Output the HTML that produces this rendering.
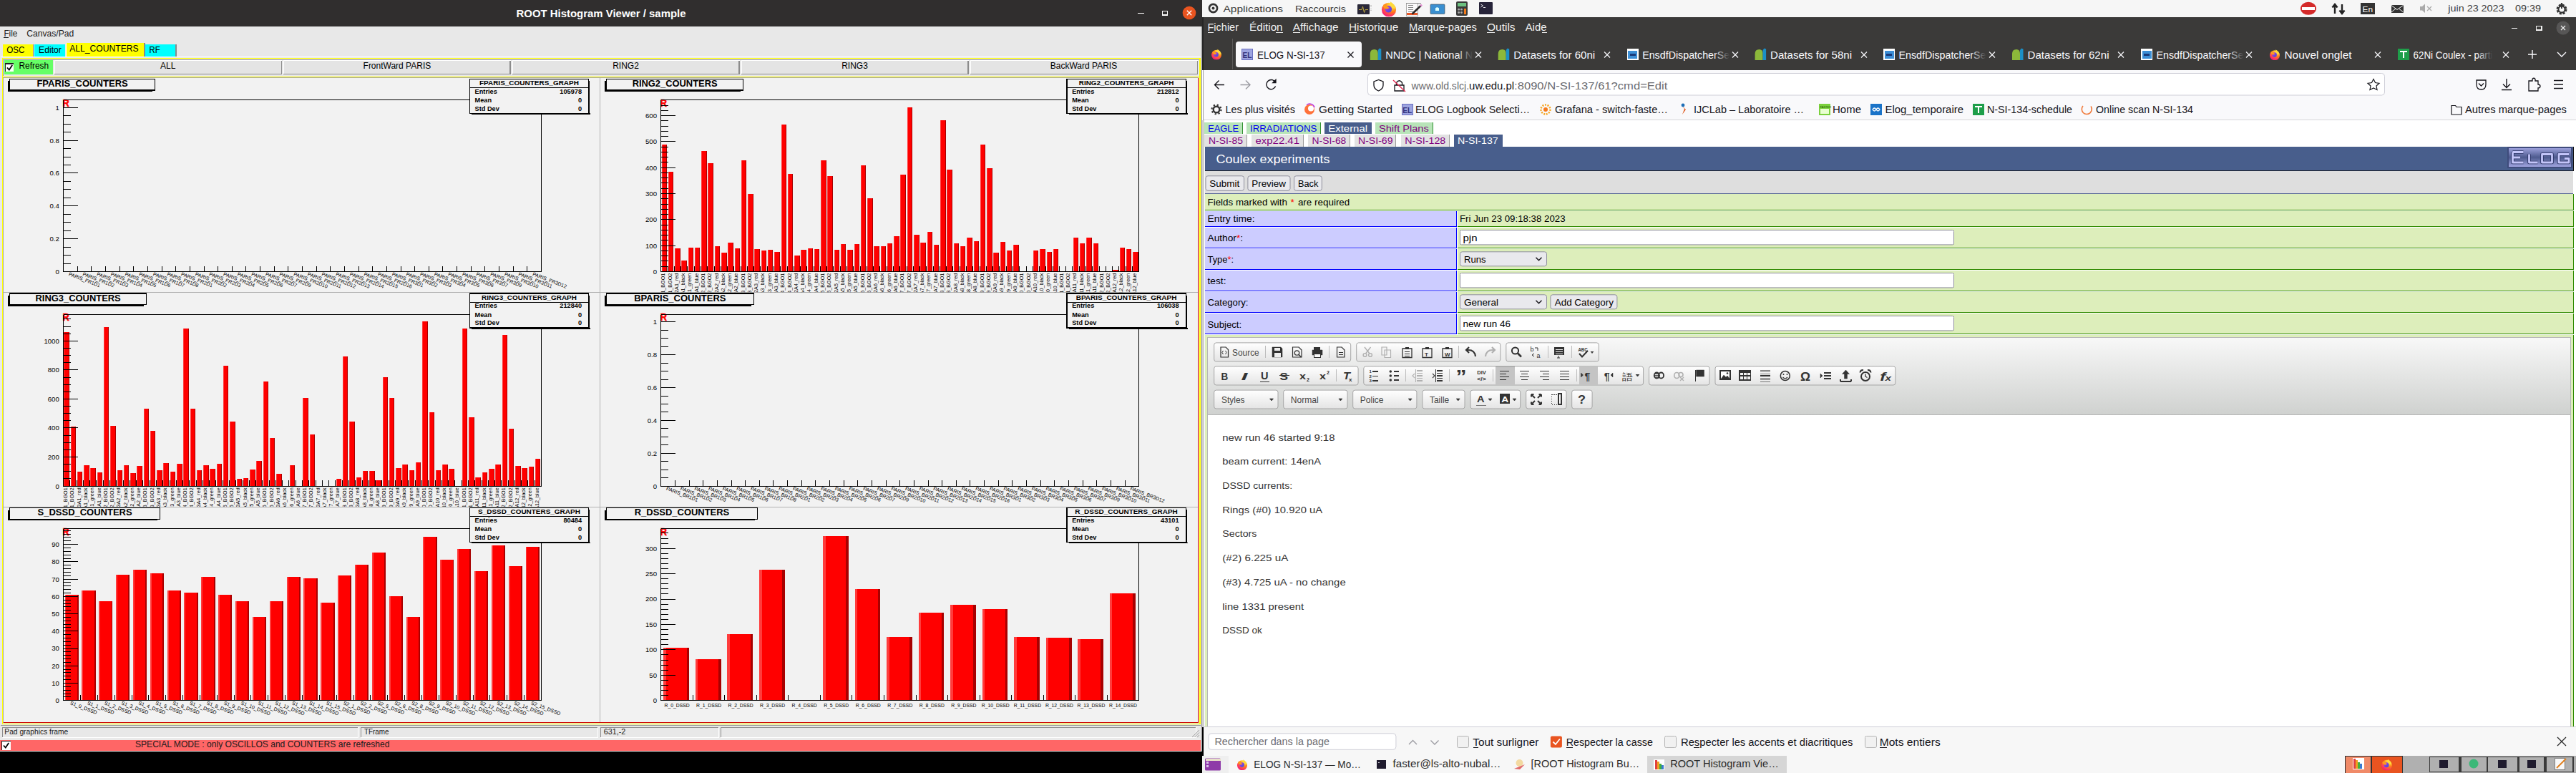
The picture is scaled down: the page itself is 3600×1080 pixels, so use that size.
<!DOCTYPE html>
<html><head><meta charset="utf-8"><title>screen</title>
<style>html,body{margin:0;padding:0;width:3600px;height:1080px;overflow:hidden;background:#000}
svg{display:block} text{font-family:"Liberation Sans", sans-serif;white-space:pre}</style></head>
<body><svg width="3600" height="1080" viewBox="0 0 3600 1080" shape-rendering="crispEdges">
<rect x="0.00" y="0.00" width="1680.00" height="37.00" fill="#302e2e" />
<text x="721.50" y="24.00" fill="#ffffff" font-size="15" font-weight="bold" textLength="237.0" lengthAdjust="spacingAndGlyphs" >ROOT Histogram Viewer / sample</text>
<line x1="1590.00" y1="18.50" x2="1598.50" y2="18.50" stroke="#fff" stroke-width="1.6" />
<rect x="1624.50" y="15.50" width="7.00" height="5.50" fill="none" stroke="#fff" stroke-width="1.4"/>
<circle cx="1662" cy="18" r="9.3" fill="#e95420" shape-rendering="geometricPrecision"/>
<path d="M1658.8 14.8 L1665.2 21.2 M1665.2 14.8 L1658.8 21.2" stroke="#fff" stroke-width="1.3" shape-rendering="geometricPrecision"/>
<rect x="0.00" y="37.00" width="1680.00" height="1013.00" fill="#e8e8e8" />
<rect x="1678.00" y="37.00" width="1.00" height="1013.00" fill="#d8d8d8" />
<rect x="1679.00" y="37.00" width="1.00" height="1013.00" fill="#9a9a9a" />
<text x="5.40" y="51.00" fill="#1a1a1a" font-size="12.5" textLength="19.0" lengthAdjust="spacingAndGlyphs" >File</text>
<line x1="5.40" y1="52.80" x2="12.00" y2="52.80" stroke="#1a1a1a" stroke-width="1" />
<text x="37.30" y="51.00" fill="#1a1a1a" font-size="12.5" textLength="66.0" lengthAdjust="spacingAndGlyphs" >Canvas/Pad</text>
<rect x="3.70" y="62.00" width="43.00" height="17.00" fill="#ffff00" />
<line x1="46.70" y1="62.00" x2="46.70" y2="79.00" stroke="#8a8a8a" stroke-width="1.2" />
<text x="9.20" y="74.00" fill="#000" font-size="12.5" textLength="25.3" lengthAdjust="spacingAndGlyphs" >OSC</text>
<rect x="48.00" y="62.00" width="43.00" height="17.00" fill="#00ffff" />
<text x="54.10" y="74.00" fill="#000" font-size="12.5" textLength="31.7" lengthAdjust="spacingAndGlyphs" >Editor</text>
<rect x="92.00" y="60.00" width="110.00" height="19.00" fill="#ffff00" />
<line x1="92.30" y1="60.00" x2="92.30" y2="79.00" stroke="#ffffff" stroke-width="1" />
<line x1="202.00" y1="60.00" x2="202.00" y2="79.00" stroke="#8a8a8a" stroke-width="1.2" />
<text x="97.20" y="71.70" fill="#000" font-size="12.5" textLength="96.5" lengthAdjust="spacingAndGlyphs" >ALL_COUNTERS</text>
<rect x="203.00" y="62.00" width="43.00" height="17.00" fill="#00ffff" />
<line x1="246.00" y1="62.00" x2="246.00" y2="79.00" stroke="#8a8a8a" stroke-width="1.2" />
<text x="208.50" y="74.00" fill="#000" font-size="12.5" textLength="15.1" lengthAdjust="spacingAndGlyphs" >RF</text>
<line x1="1.00" y1="79.60" x2="1678.00" y2="79.60" stroke="#ffffff" stroke-width="1" />
<rect x="3.50" y="81.50" width="1673.50" height="930.00" fill="none" stroke="#ffff00" stroke-width="1.2"/>
<line x1="4.20" y1="83.00" x2="1676.00" y2="83.00" stroke="#9a9a9a" stroke-width="1" />
<line x1="4.20" y1="83.00" x2="4.20" y2="106.00" stroke="#9a9a9a" stroke-width="1" />
<rect x="5.80" y="83.90" width="68.20" height="20.10" fill="#66ff66" />
<rect x="7.10" y="88.40" width="12.30" height="12.00" fill="#ffffff" />
<path d="M7.6 100 V88.9 H19" fill="none" stroke="#222" stroke-width="1.2"/>
<path d="M10 94.5 L12.8 97.6 L17.2 91" fill="none" stroke="#000" stroke-width="1.8" shape-rendering="geometricPrecision"/>
<text x="26.50" y="95.90" fill="#000" font-size="12" textLength="41.7" lengthAdjust="spacingAndGlyphs" >Refresh</text>
<rect x="75.70" y="84.50" width="318.10" height="19.50" fill="#e4e4e4" />
<line x1="75.70" y1="84.50" x2="393.80" y2="84.50" stroke="#ffffff" stroke-width="1" />
<line x1="76.20" y1="84.50" x2="76.20" y2="104.00" stroke="#ffffff" stroke-width="1" />
<line x1="75.70" y1="103.50" x2="393.80" y2="103.50" stroke="#8c8c8c" stroke-width="1.2" />
<line x1="393.30" y1="84.50" x2="393.30" y2="104.00" stroke="#8c8c8c" stroke-width="1.2" />
<rect x="395.90" y="84.50" width="317.60" height="19.50" fill="#e4e4e4" />
<line x1="395.90" y1="84.50" x2="713.50" y2="84.50" stroke="#ffffff" stroke-width="1" />
<line x1="396.40" y1="84.50" x2="396.40" y2="104.00" stroke="#ffffff" stroke-width="1" />
<line x1="395.90" y1="103.50" x2="713.50" y2="103.50" stroke="#8c8c8c" stroke-width="1.2" />
<line x1="713.00" y1="84.50" x2="713.00" y2="104.00" stroke="#8c8c8c" stroke-width="1.2" />
<rect x="715.60" y="84.50" width="317.90" height="19.50" fill="#e4e4e4" />
<line x1="715.60" y1="84.50" x2="1033.50" y2="84.50" stroke="#ffffff" stroke-width="1" />
<line x1="716.10" y1="84.50" x2="716.10" y2="104.00" stroke="#ffffff" stroke-width="1" />
<line x1="715.60" y1="103.50" x2="1033.50" y2="103.50" stroke="#8c8c8c" stroke-width="1.2" />
<line x1="1033.00" y1="84.50" x2="1033.00" y2="104.00" stroke="#8c8c8c" stroke-width="1.2" />
<rect x="1035.60" y="84.50" width="317.90" height="19.50" fill="#e4e4e4" />
<line x1="1035.60" y1="84.50" x2="1353.50" y2="84.50" stroke="#ffffff" stroke-width="1" />
<line x1="1036.10" y1="84.50" x2="1036.10" y2="104.00" stroke="#ffffff" stroke-width="1" />
<line x1="1035.60" y1="103.50" x2="1353.50" y2="103.50" stroke="#8c8c8c" stroke-width="1.2" />
<line x1="1353.00" y1="84.50" x2="1353.00" y2="104.00" stroke="#8c8c8c" stroke-width="1.2" />
<rect x="1356.00" y="84.50" width="318.00" height="19.50" fill="#e4e4e4" />
<line x1="1356.00" y1="84.50" x2="1674.00" y2="84.50" stroke="#ffffff" stroke-width="1" />
<line x1="1356.50" y1="84.50" x2="1356.50" y2="104.00" stroke="#ffffff" stroke-width="1" />
<line x1="1356.00" y1="103.50" x2="1674.00" y2="103.50" stroke="#8c8c8c" stroke-width="1.2" />
<line x1="1673.50" y1="84.50" x2="1673.50" y2="104.00" stroke="#8c8c8c" stroke-width="1.2" />
<text x="234.80" y="95.80" fill="#000" font-size="12" text-anchor="middle" >ALL</text>
<text x="554.90" y="95.80" fill="#000" font-size="12" text-anchor="middle" >FrontWard PARIS</text>
<text x="874.50" y="95.80" fill="#000" font-size="12" text-anchor="middle" >RING2</text>
<text x="1194.50" y="95.80" fill="#000" font-size="12" text-anchor="middle" >RING3</text>
<text x="1514.50" y="95.80" fill="#000" font-size="12" text-anchor="middle" >BackWard PARIS</text>
<line x1="3.00" y1="107.50" x2="1677.00" y2="107.50" stroke="#ffff00" stroke-width="1.3" />
<rect x="4.50" y="108.30" width="1671.00" height="901.50" fill="#f2f2f2" />
<line x1="4.50" y1="108.60" x2="1675.00" y2="108.60" stroke="#a8a8a8" stroke-width="1" />
<line x1="4.60" y1="108.30" x2="4.60" y2="1010.00" stroke="#a8a8a8" stroke-width="1" />
<line x1="838.80" y1="108.50" x2="838.80" y2="1009.00" stroke="#b0b0b0" stroke-width="1" />
<line x1="4.50" y1="408.50" x2="1675.00" y2="408.50" stroke="#b0b0b0" stroke-width="1" />
<line x1="4.50" y1="708.20" x2="1675.00" y2="708.20" stroke="#b0b0b0" stroke-width="1" />
<clipPath id="pc0"><rect x="4.5" y="108.5" width="834.0" height="299.8"/></clipPath>
<g clip-path="url(#pc0)">
<text x="87.60" y="148.60" fill="#ff0000" font-size="14.3" font-weight="bold" textLength="9.2" lengthAdjust="spacingAndGlyphs" stroke="#ff0000" stroke-width="0.5">R</text>
<line x1="88.50" y1="139.50" x2="756.50" y2="139.50" stroke="#000" stroke-width="1" />
<line x1="756.50" y1="139.50" x2="756.50" y2="379.50" stroke="#000" stroke-width="1" />
<line x1="88.50" y1="139.50" x2="88.50" y2="380.00" stroke="#000" stroke-width="1.15" />
<line x1="88.00" y1="379.50" x2="757.00" y2="379.50" stroke="#000" stroke-width="1.15" />
<line x1="88.60" y1="379.50" x2="108.90" y2="379.50" stroke="#000" stroke-width="1" />
<text x="82.80" y="382.90" fill="#000" font-size="9.6" text-anchor="end" >0</text>
<line x1="88.60" y1="368.50" x2="98.90" y2="368.50" stroke="#000" stroke-width="1" />
<line x1="88.60" y1="356.50" x2="98.90" y2="356.50" stroke="#000" stroke-width="1" />
<line x1="88.60" y1="345.50" x2="98.90" y2="345.50" stroke="#000" stroke-width="1" />
<line x1="88.60" y1="333.50" x2="108.90" y2="333.50" stroke="#000" stroke-width="1" />
<text x="82.80" y="337.06" fill="#000" font-size="9.6" text-anchor="end" >0.2</text>
<line x1="88.60" y1="322.50" x2="98.90" y2="322.50" stroke="#000" stroke-width="1" />
<line x1="88.60" y1="310.50" x2="98.90" y2="310.50" stroke="#000" stroke-width="1" />
<line x1="88.60" y1="299.50" x2="98.90" y2="299.50" stroke="#000" stroke-width="1" />
<line x1="88.60" y1="287.50" x2="108.90" y2="287.50" stroke="#000" stroke-width="1" />
<text x="82.80" y="291.22" fill="#000" font-size="9.6" text-anchor="end" >0.4</text>
<line x1="88.60" y1="276.50" x2="98.90" y2="276.50" stroke="#000" stroke-width="1" />
<line x1="88.60" y1="264.50" x2="98.90" y2="264.50" stroke="#000" stroke-width="1" />
<line x1="88.60" y1="253.50" x2="98.90" y2="253.50" stroke="#000" stroke-width="1" />
<line x1="88.60" y1="241.50" x2="108.90" y2="241.50" stroke="#000" stroke-width="1" />
<text x="82.80" y="245.39" fill="#000" font-size="9.6" text-anchor="end" >0.6</text>
<line x1="88.60" y1="230.50" x2="98.90" y2="230.50" stroke="#000" stroke-width="1" />
<line x1="88.60" y1="219.50" x2="98.90" y2="219.50" stroke="#000" stroke-width="1" />
<line x1="88.60" y1="207.50" x2="98.90" y2="207.50" stroke="#000" stroke-width="1" />
<line x1="88.60" y1="196.50" x2="108.90" y2="196.50" stroke="#000" stroke-width="1" />
<text x="82.80" y="199.55" fill="#000" font-size="9.6" text-anchor="end" >0.8</text>
<line x1="88.60" y1="184.50" x2="98.90" y2="184.50" stroke="#000" stroke-width="1" />
<line x1="88.60" y1="173.50" x2="98.90" y2="173.50" stroke="#000" stroke-width="1" />
<line x1="88.60" y1="161.50" x2="98.90" y2="161.50" stroke="#000" stroke-width="1" />
<line x1="88.60" y1="150.50" x2="108.90" y2="150.50" stroke="#000" stroke-width="1" />
<text x="82.80" y="153.71" fill="#000" font-size="9.6" text-anchor="end" >1</text>
<line x1="108.50" y1="371.50" x2="108.50" y2="379.50" stroke="#000" stroke-width="1" />
<line x1="127.50" y1="371.50" x2="127.50" y2="379.50" stroke="#000" stroke-width="1" />
<line x1="147.50" y1="371.50" x2="147.50" y2="379.50" stroke="#000" stroke-width="1" />
<line x1="167.50" y1="371.50" x2="167.50" y2="379.50" stroke="#000" stroke-width="1" />
<line x1="186.50" y1="371.50" x2="186.50" y2="379.50" stroke="#000" stroke-width="1" />
<line x1="206.50" y1="371.50" x2="206.50" y2="379.50" stroke="#000" stroke-width="1" />
<line x1="226.50" y1="371.50" x2="226.50" y2="379.50" stroke="#000" stroke-width="1" />
<line x1="245.50" y1="371.50" x2="245.50" y2="379.50" stroke="#000" stroke-width="1" />
<line x1="265.50" y1="371.50" x2="265.50" y2="379.50" stroke="#000" stroke-width="1" />
<line x1="285.50" y1="371.50" x2="285.50" y2="379.50" stroke="#000" stroke-width="1" />
<line x1="304.50" y1="371.50" x2="304.50" y2="379.50" stroke="#000" stroke-width="1" />
<line x1="324.50" y1="371.50" x2="324.50" y2="379.50" stroke="#000" stroke-width="1" />
<line x1="343.50" y1="371.50" x2="343.50" y2="379.50" stroke="#000" stroke-width="1" />
<line x1="363.50" y1="371.50" x2="363.50" y2="379.50" stroke="#000" stroke-width="1" />
<line x1="383.50" y1="371.50" x2="383.50" y2="379.50" stroke="#000" stroke-width="1" />
<line x1="402.50" y1="371.50" x2="402.50" y2="379.50" stroke="#000" stroke-width="1" />
<line x1="422.50" y1="371.50" x2="422.50" y2="379.50" stroke="#000" stroke-width="1" />
<line x1="442.50" y1="371.50" x2="442.50" y2="379.50" stroke="#000" stroke-width="1" />
<line x1="461.50" y1="371.50" x2="461.50" y2="379.50" stroke="#000" stroke-width="1" />
<line x1="481.50" y1="371.50" x2="481.50" y2="379.50" stroke="#000" stroke-width="1" />
<line x1="501.50" y1="371.50" x2="501.50" y2="379.50" stroke="#000" stroke-width="1" />
<line x1="520.50" y1="371.50" x2="520.50" y2="379.50" stroke="#000" stroke-width="1" />
<line x1="540.50" y1="371.50" x2="540.50" y2="379.50" stroke="#000" stroke-width="1" />
<line x1="560.50" y1="371.50" x2="560.50" y2="379.50" stroke="#000" stroke-width="1" />
<line x1="579.50" y1="371.50" x2="579.50" y2="379.50" stroke="#000" stroke-width="1" />
<line x1="599.50" y1="371.50" x2="599.50" y2="379.50" stroke="#000" stroke-width="1" />
<line x1="618.50" y1="371.50" x2="618.50" y2="379.50" stroke="#000" stroke-width="1" />
<line x1="638.50" y1="371.50" x2="638.50" y2="379.50" stroke="#000" stroke-width="1" />
<line x1="658.50" y1="371.50" x2="658.50" y2="379.50" stroke="#000" stroke-width="1" />
<line x1="677.50" y1="371.50" x2="677.50" y2="379.50" stroke="#000" stroke-width="1" />
<line x1="697.50" y1="371.50" x2="697.50" y2="379.50" stroke="#000" stroke-width="1" />
<line x1="717.50" y1="371.50" x2="717.50" y2="379.50" stroke="#000" stroke-width="1" />
<line x1="736.50" y1="371.50" x2="736.50" y2="379.50" stroke="#000" stroke-width="1" />
<text transform="translate(95.42,384.70) rotate(21)" font-size="7.0" fill="#000">PARIS_FR1D1</text>
<text transform="translate(115.07,384.70) rotate(21)" font-size="7.0" fill="#000">PARIS_FR1D2</text>
<text transform="translate(134.71,384.70) rotate(21)" font-size="7.0" fill="#000">PARIS_FR1D3</text>
<text transform="translate(154.35,384.70) rotate(21)" font-size="7.0" fill="#000">PARIS_FR1D4</text>
<text transform="translate(174.00,384.70) rotate(21)" font-size="7.0" fill="#000">PARIS_FR1D5</text>
<text transform="translate(193.64,384.70) rotate(21)" font-size="7.0" fill="#000">PARIS_FR1D6</text>
<text transform="translate(213.29,384.70) rotate(21)" font-size="7.0" fill="#000">PARIS_FR1D7</text>
<text transform="translate(232.93,384.70) rotate(21)" font-size="7.0" fill="#000">PARIS_FR1D8</text>
<text transform="translate(252.57,384.70) rotate(21)" font-size="7.0" fill="#000">PARIS_FR2D1</text>
<text transform="translate(272.22,384.70) rotate(21)" font-size="7.0" fill="#000">PARIS_FR2D2</text>
<text transform="translate(291.86,384.70) rotate(21)" font-size="7.0" fill="#000">PARIS_FR2D3</text>
<text transform="translate(311.51,384.70) rotate(21)" font-size="7.0" fill="#000">PARIS_FR2D4</text>
<text transform="translate(331.15,384.70) rotate(21)" font-size="7.0" fill="#000">PARIS_FR2D5</text>
<text transform="translate(350.80,384.70) rotate(21)" font-size="7.0" fill="#000">PARIS_FR2D6</text>
<text transform="translate(370.44,384.70) rotate(21)" font-size="7.0" fill="#000">PARIS_FR2D7</text>
<text transform="translate(390.08,384.70) rotate(21)" font-size="7.0" fill="#000">PARIS_FR2D9</text>
<text transform="translate(409.73,384.70) rotate(21)" font-size="7.0" fill="#000">PARIS_FR2D10</text>
<text transform="translate(429.37,384.70) rotate(21)" font-size="7.0" fill="#000">PARIS_FR2D11</text>
<text transform="translate(449.02,384.70) rotate(21)" font-size="7.0" fill="#000">PARIS_FR2D12</text>
<text transform="translate(468.66,384.70) rotate(21)" font-size="7.0" fill="#000">PARIS_FR2D13</text>
<text transform="translate(488.30,384.70) rotate(21)" font-size="7.0" fill="#000">PARIS_FR2D14</text>
<text transform="translate(507.95,384.70) rotate(21)" font-size="7.0" fill="#000">PARIS_FR2D15</text>
<text transform="translate(527.59,384.70) rotate(21)" font-size="7.0" fill="#000">PARIS_FR2D16</text>
<text transform="translate(547.24,384.70) rotate(21)" font-size="7.0" fill="#000">PARIS_FR3D1</text>
<text transform="translate(566.88,384.70) rotate(21)" font-size="7.0" fill="#000">PARIS_FR3D2</text>
<text transform="translate(586.52,384.70) rotate(21)" font-size="7.0" fill="#000">PARIS_FR3D3</text>
<text transform="translate(606.17,384.70) rotate(21)" font-size="7.0" fill="#000">PARIS_FR3D4</text>
<text transform="translate(625.81,384.70) rotate(21)" font-size="7.0" fill="#000">PARIS_FR3D5</text>
<text transform="translate(645.46,384.70) rotate(21)" font-size="7.0" fill="#000">PARIS_FR3D6</text>
<text transform="translate(665.10,384.70) rotate(21)" font-size="7.0" fill="#000">PARIS_FR3D7</text>
<text transform="translate(684.75,384.70) rotate(21)" font-size="7.0" fill="#000">PARIS_FR3D9</text>
<text transform="translate(704.39,384.70) rotate(21)" font-size="7.0" fill="#000">PARIS_FR3D10</text>
<text transform="translate(724.03,384.70) rotate(21)" font-size="7.0" fill="#000">PARIS_FR3D11</text>
<text transform="translate(743.68,384.70) rotate(21)" font-size="7.0" fill="#000">PARIS_FR3D12</text>
</g>
<rect x="11.00" y="113.40" width="2.60" height="14.50" fill="#000" />
<rect x="11.00" y="126.00" width="202.00" height="1.90" fill="#000" />
<rect x="13.60" y="110.40" width="203.00" height="15.60" fill="#f2f2f2" stroke="#000" stroke-width="1.1"/>
<text x="51.40" y="121.20" fill="#000" font-size="12.5" font-weight="bold" textLength="127.4" lengthAdjust="spacingAndGlyphs" >FPARIS_COUNTERS</text>
<rect x="822.50" y="113.00" width="1.60" height="47.00" fill="#000" />
<rect x="659.00" y="158.40" width="166.10" height="1.60" fill="#000" />
<rect x="656.40" y="110.40" width="166.10" height="48.00" fill="#f2f2f2" stroke="#000" stroke-width="1.1"/>
<line x1="656.40" y1="122.50" x2="822.50" y2="122.50" stroke="#000" stroke-width="1.1" />
<text x="669.95" y="119.00" fill="#000" font-size="9.2" font-weight="bold" textLength="139.0" lengthAdjust="spacingAndGlyphs" >FPARIS_COUNTERS_GRAPH</text>
<text x="663.60" y="130.60" fill="#000" font-size="9.2" font-weight="bold" >Entries</text>
<text x="813.00" y="130.60" fill="#000" font-size="9.2" font-weight="bold" text-anchor="end" >105978</text>
<text x="663.60" y="142.90" fill="#000" font-size="9.2" font-weight="bold" >Mean</text>
<text x="813.00" y="142.90" fill="#000" font-size="9.2" font-weight="bold" text-anchor="end" >0</text>
<text x="663.60" y="154.70" fill="#000" font-size="9.2" font-weight="bold" >Std Dev</text>
<text x="813.00" y="154.70" fill="#000" font-size="9.2" font-weight="bold" text-anchor="end" >0</text>
<clipPath id="pc1"><rect x="839.5" y="108.5" width="834.0" height="299.8"/></clipPath>
<g clip-path="url(#pc1)">
<rect x="924.54" y="201.51" width="7.47" height="177.99" fill="#ff0000" />
<rect x="924.54" y="201.51" width="1.00" height="177.99" fill="#ff3c3c" />
<rect x="931.01" y="201.51" width="1.00" height="177.99" fill="#a80000" />
<rect x="933.82" y="239.65" width="7.47" height="139.85" fill="#ff0000" />
<rect x="933.82" y="239.65" width="1.00" height="139.85" fill="#ff3c3c" />
<rect x="940.29" y="239.65" width="1.00" height="139.85" fill="#a80000" />
<rect x="943.09" y="346.81" width="7.47" height="32.69" fill="#ff0000" />
<rect x="943.09" y="346.81" width="1.00" height="32.69" fill="#ff3c3c" />
<rect x="949.56" y="346.81" width="1.00" height="32.69" fill="#a80000" />
<rect x="952.37" y="363.88" width="7.47" height="15.62" fill="#ff0000" />
<rect x="952.37" y="363.88" width="1.00" height="15.62" fill="#ff3c3c" />
<rect x="958.84" y="363.88" width="1.00" height="15.62" fill="#a80000" />
<rect x="961.65" y="345.72" width="7.47" height="33.78" fill="#ff0000" />
<rect x="961.65" y="345.72" width="1.00" height="33.78" fill="#ff3c3c" />
<rect x="968.12" y="345.72" width="1.00" height="33.78" fill="#a80000" />
<rect x="970.92" y="345.72" width="7.47" height="33.78" fill="#ff0000" />
<rect x="970.92" y="345.72" width="1.00" height="33.78" fill="#ff3c3c" />
<rect x="977.39" y="345.72" width="1.00" height="33.78" fill="#a80000" />
<rect x="980.20" y="210.59" width="7.47" height="168.91" fill="#ff0000" />
<rect x="980.20" y="210.59" width="1.00" height="168.91" fill="#ff3c3c" />
<rect x="986.67" y="210.59" width="1.00" height="168.91" fill="#a80000" />
<rect x="989.48" y="228.03" width="7.47" height="151.47" fill="#ff0000" />
<rect x="989.48" y="228.03" width="1.00" height="151.47" fill="#ff3c3c" />
<rect x="995.94" y="228.03" width="1.00" height="151.47" fill="#a80000" />
<rect x="998.75" y="343.90" width="7.47" height="35.60" fill="#ff0000" />
<rect x="998.75" y="343.90" width="1.00" height="35.60" fill="#ff3c3c" />
<rect x="1005.22" y="343.90" width="1.00" height="35.60" fill="#a80000" />
<rect x="1008.03" y="352.98" width="7.47" height="26.52" fill="#ff0000" />
<rect x="1008.03" y="352.98" width="1.00" height="26.52" fill="#ff3c3c" />
<rect x="1014.50" y="352.98" width="1.00" height="26.52" fill="#a80000" />
<rect x="1017.31" y="338.82" width="7.47" height="40.68" fill="#ff0000" />
<rect x="1017.31" y="338.82" width="1.00" height="40.68" fill="#ff3c3c" />
<rect x="1023.77" y="338.82" width="1.00" height="40.68" fill="#a80000" />
<rect x="1026.58" y="346.81" width="7.47" height="32.69" fill="#ff0000" />
<rect x="1026.58" y="346.81" width="1.00" height="32.69" fill="#ff3c3c" />
<rect x="1033.05" y="346.81" width="1.00" height="32.69" fill="#a80000" />
<rect x="1035.86" y="224.03" width="7.47" height="155.47" fill="#ff0000" />
<rect x="1035.86" y="224.03" width="1.00" height="155.47" fill="#ff3c3c" />
<rect x="1042.33" y="224.03" width="1.00" height="155.47" fill="#a80000" />
<rect x="1045.14" y="270.53" width="7.47" height="108.97" fill="#ff0000" />
<rect x="1045.14" y="270.53" width="1.00" height="108.97" fill="#ff3c3c" />
<rect x="1051.60" y="270.53" width="1.00" height="108.97" fill="#a80000" />
<rect x="1054.41" y="347.54" width="7.47" height="31.96" fill="#ff0000" />
<rect x="1054.41" y="347.54" width="1.00" height="31.96" fill="#ff3c3c" />
<rect x="1060.88" y="347.54" width="1.00" height="31.96" fill="#a80000" />
<rect x="1063.69" y="350.44" width="7.47" height="29.06" fill="#ff0000" />
<rect x="1063.69" y="350.44" width="1.00" height="29.06" fill="#ff3c3c" />
<rect x="1070.16" y="350.44" width="1.00" height="29.06" fill="#a80000" />
<rect x="1072.96" y="348.62" width="7.47" height="30.88" fill="#ff0000" />
<rect x="1072.96" y="348.62" width="1.00" height="30.88" fill="#ff3c3c" />
<rect x="1079.43" y="348.62" width="1.00" height="30.88" fill="#a80000" />
<rect x="1082.24" y="351.53" width="7.47" height="27.97" fill="#ff0000" />
<rect x="1082.24" y="351.53" width="1.00" height="27.97" fill="#ff3c3c" />
<rect x="1088.71" y="351.53" width="1.00" height="27.97" fill="#a80000" />
<rect x="1091.52" y="173.54" width="7.47" height="205.96" fill="#ff0000" />
<rect x="1091.52" y="173.54" width="1.00" height="205.96" fill="#ff3c3c" />
<rect x="1097.98" y="173.54" width="1.00" height="205.96" fill="#a80000" />
<rect x="1100.79" y="243.29" width="7.47" height="136.21" fill="#ff0000" />
<rect x="1100.79" y="243.29" width="1.00" height="136.21" fill="#ff3c3c" />
<rect x="1107.26" y="243.29" width="1.00" height="136.21" fill="#a80000" />
<rect x="1110.07" y="356.98" width="7.47" height="22.52" fill="#ff0000" />
<rect x="1110.07" y="356.98" width="1.00" height="22.52" fill="#ff3c3c" />
<rect x="1116.54" y="356.98" width="1.00" height="22.52" fill="#a80000" />
<rect x="1119.35" y="348.62" width="7.47" height="30.88" fill="#ff0000" />
<rect x="1119.35" y="348.62" width="1.00" height="30.88" fill="#ff3c3c" />
<rect x="1125.81" y="348.62" width="1.00" height="30.88" fill="#a80000" />
<rect x="1128.62" y="346.81" width="7.47" height="32.69" fill="#ff0000" />
<rect x="1128.62" y="346.81" width="1.00" height="32.69" fill="#ff3c3c" />
<rect x="1135.09" y="346.81" width="1.00" height="32.69" fill="#a80000" />
<rect x="1137.90" y="347.54" width="7.47" height="31.96" fill="#ff0000" />
<rect x="1137.90" y="347.54" width="1.00" height="31.96" fill="#ff3c3c" />
<rect x="1144.37" y="347.54" width="1.00" height="31.96" fill="#a80000" />
<rect x="1147.18" y="224.03" width="7.47" height="155.47" fill="#ff0000" />
<rect x="1147.18" y="224.03" width="1.00" height="155.47" fill="#ff3c3c" />
<rect x="1153.64" y="224.03" width="1.00" height="155.47" fill="#a80000" />
<rect x="1156.45" y="246.19" width="7.47" height="133.31" fill="#ff0000" />
<rect x="1156.45" y="246.19" width="1.00" height="133.31" fill="#ff3c3c" />
<rect x="1162.92" y="246.19" width="1.00" height="133.31" fill="#a80000" />
<rect x="1165.73" y="348.62" width="7.47" height="30.88" fill="#ff0000" />
<rect x="1165.73" y="348.62" width="1.00" height="30.88" fill="#ff3c3c" />
<rect x="1172.20" y="348.62" width="1.00" height="30.88" fill="#a80000" />
<rect x="1175.00" y="340.63" width="7.47" height="38.87" fill="#ff0000" />
<rect x="1175.00" y="340.63" width="1.00" height="38.87" fill="#ff3c3c" />
<rect x="1181.47" y="340.63" width="1.00" height="38.87" fill="#a80000" />
<rect x="1184.28" y="349.35" width="7.47" height="30.15" fill="#ff0000" />
<rect x="1184.28" y="349.35" width="1.00" height="30.15" fill="#ff3c3c" />
<rect x="1190.75" y="349.35" width="1.00" height="30.15" fill="#a80000" />
<rect x="1193.56" y="341.36" width="7.47" height="38.14" fill="#ff0000" />
<rect x="1193.56" y="341.36" width="1.00" height="38.14" fill="#ff3c3c" />
<rect x="1200.02" y="341.36" width="1.00" height="38.14" fill="#a80000" />
<rect x="1202.83" y="231.30" width="7.47" height="148.20" fill="#ff0000" />
<rect x="1202.83" y="231.30" width="1.00" height="148.20" fill="#ff3c3c" />
<rect x="1209.30" y="231.30" width="1.00" height="148.20" fill="#a80000" />
<rect x="1212.11" y="277.07" width="7.47" height="102.43" fill="#ff0000" />
<rect x="1212.11" y="277.07" width="1.00" height="102.43" fill="#ff3c3c" />
<rect x="1218.58" y="277.07" width="1.00" height="102.43" fill="#a80000" />
<rect x="1221.39" y="343.90" width="7.47" height="35.60" fill="#ff0000" />
<rect x="1221.39" y="343.90" width="1.00" height="35.60" fill="#ff3c3c" />
<rect x="1227.85" y="343.90" width="1.00" height="35.60" fill="#a80000" />
<rect x="1230.66" y="344.27" width="7.47" height="35.23" fill="#ff0000" />
<rect x="1230.66" y="344.27" width="1.00" height="35.23" fill="#ff3c3c" />
<rect x="1237.13" y="344.27" width="1.00" height="35.23" fill="#a80000" />
<rect x="1239.94" y="339.54" width="7.47" height="39.96" fill="#ff0000" />
<rect x="1239.94" y="339.54" width="1.00" height="39.96" fill="#ff3c3c" />
<rect x="1246.41" y="339.54" width="1.00" height="39.96" fill="#a80000" />
<rect x="1249.22" y="330.46" width="7.47" height="49.04" fill="#ff0000" />
<rect x="1249.22" y="330.46" width="1.00" height="49.04" fill="#ff3c3c" />
<rect x="1255.68" y="330.46" width="1.00" height="49.04" fill="#a80000" />
<rect x="1258.49" y="244.01" width="7.47" height="135.49" fill="#ff0000" />
<rect x="1258.49" y="244.01" width="1.00" height="135.49" fill="#ff3c3c" />
<rect x="1264.96" y="244.01" width="1.00" height="135.49" fill="#a80000" />
<rect x="1267.77" y="149.57" width="7.47" height="229.93" fill="#ff0000" />
<rect x="1267.77" y="149.57" width="1.00" height="229.93" fill="#ff3c3c" />
<rect x="1274.24" y="149.57" width="1.00" height="229.93" fill="#a80000" />
<rect x="1277.04" y="327.56" width="7.47" height="51.94" fill="#ff0000" />
<rect x="1277.04" y="327.56" width="1.00" height="51.94" fill="#ff3c3c" />
<rect x="1283.51" y="327.56" width="1.00" height="51.94" fill="#a80000" />
<rect x="1286.32" y="338.82" width="7.47" height="40.68" fill="#ff0000" />
<rect x="1286.32" y="338.82" width="1.00" height="40.68" fill="#ff3c3c" />
<rect x="1292.79" y="338.82" width="1.00" height="40.68" fill="#a80000" />
<rect x="1295.60" y="324.29" width="7.47" height="55.21" fill="#ff0000" />
<rect x="1295.60" y="324.29" width="1.00" height="55.21" fill="#ff3c3c" />
<rect x="1302.07" y="324.29" width="1.00" height="55.21" fill="#a80000" />
<rect x="1304.87" y="342.45" width="7.47" height="37.05" fill="#ff0000" />
<rect x="1304.87" y="342.45" width="1.00" height="37.05" fill="#ff3c3c" />
<rect x="1311.34" y="342.45" width="1.00" height="37.05" fill="#a80000" />
<rect x="1314.15" y="167.73" width="7.47" height="211.77" fill="#ff0000" />
<rect x="1314.15" y="167.73" width="1.00" height="211.77" fill="#ff3c3c" />
<rect x="1320.62" y="167.73" width="1.00" height="211.77" fill="#a80000" />
<rect x="1323.43" y="237.11" width="7.47" height="142.39" fill="#ff0000" />
<rect x="1323.43" y="237.11" width="1.00" height="142.39" fill="#ff3c3c" />
<rect x="1329.89" y="237.11" width="1.00" height="142.39" fill="#a80000" />
<rect x="1332.70" y="339.54" width="7.47" height="39.96" fill="#ff0000" />
<rect x="1332.70" y="339.54" width="1.00" height="39.96" fill="#ff3c3c" />
<rect x="1339.17" y="339.54" width="1.00" height="39.96" fill="#a80000" />
<rect x="1341.98" y="343.90" width="7.47" height="35.60" fill="#ff0000" />
<rect x="1341.98" y="343.90" width="1.00" height="35.60" fill="#ff3c3c" />
<rect x="1348.45" y="343.90" width="1.00" height="35.60" fill="#a80000" />
<rect x="1351.26" y="332.28" width="7.47" height="47.22" fill="#ff0000" />
<rect x="1351.26" y="332.28" width="1.00" height="47.22" fill="#ff3c3c" />
<rect x="1357.72" y="332.28" width="1.00" height="47.22" fill="#a80000" />
<rect x="1360.53" y="336.64" width="7.47" height="42.86" fill="#ff0000" />
<rect x="1360.53" y="336.64" width="1.00" height="42.86" fill="#ff3c3c" />
<rect x="1367.00" y="336.64" width="1.00" height="42.86" fill="#a80000" />
<rect x="1369.81" y="201.51" width="7.47" height="177.99" fill="#ff0000" />
<rect x="1369.81" y="201.51" width="1.00" height="177.99" fill="#ff3c3c" />
<rect x="1376.28" y="201.51" width="1.00" height="177.99" fill="#a80000" />
<rect x="1379.09" y="234.93" width="7.47" height="144.57" fill="#ff0000" />
<rect x="1379.09" y="234.93" width="1.00" height="144.57" fill="#ff3c3c" />
<rect x="1385.55" y="234.93" width="1.00" height="144.57" fill="#a80000" />
<rect x="1388.36" y="353.35" width="7.47" height="26.15" fill="#ff0000" />
<rect x="1388.36" y="353.35" width="1.00" height="26.15" fill="#ff3c3c" />
<rect x="1394.83" y="353.35" width="1.00" height="26.15" fill="#a80000" />
<rect x="1397.64" y="337.73" width="7.47" height="41.77" fill="#ff0000" />
<rect x="1397.64" y="337.73" width="1.00" height="41.77" fill="#ff3c3c" />
<rect x="1404.11" y="337.73" width="1.00" height="41.77" fill="#a80000" />
<rect x="1406.91" y="350.44" width="7.47" height="29.06" fill="#ff0000" />
<rect x="1406.91" y="350.44" width="1.00" height="29.06" fill="#ff3c3c" />
<rect x="1413.38" y="350.44" width="1.00" height="29.06" fill="#a80000" />
<rect x="1416.19" y="342.45" width="7.47" height="37.05" fill="#ff0000" />
<rect x="1416.19" y="342.45" width="1.00" height="37.05" fill="#ff3c3c" />
<rect x="1422.66" y="342.45" width="1.00" height="37.05" fill="#a80000" />
<rect x="1444.02" y="349.71" width="7.47" height="29.79" fill="#ff0000" />
<rect x="1444.02" y="349.71" width="1.00" height="29.79" fill="#ff3c3c" />
<rect x="1450.49" y="349.71" width="1.00" height="29.79" fill="#a80000" />
<rect x="1453.30" y="347.54" width="7.47" height="31.96" fill="#ff0000" />
<rect x="1453.30" y="347.54" width="1.00" height="31.96" fill="#ff3c3c" />
<rect x="1459.76" y="347.54" width="1.00" height="31.96" fill="#a80000" />
<rect x="1462.57" y="351.53" width="7.47" height="27.97" fill="#ff0000" />
<rect x="1462.57" y="351.53" width="1.00" height="27.97" fill="#ff3c3c" />
<rect x="1469.04" y="351.53" width="1.00" height="27.97" fill="#a80000" />
<rect x="1471.85" y="347.54" width="7.47" height="31.96" fill="#ff0000" />
<rect x="1471.85" y="347.54" width="1.00" height="31.96" fill="#ff3c3c" />
<rect x="1478.32" y="347.54" width="1.00" height="31.96" fill="#a80000" />
<rect x="1499.68" y="331.55" width="7.47" height="47.95" fill="#ff0000" />
<rect x="1499.68" y="331.55" width="1.00" height="47.95" fill="#ff3c3c" />
<rect x="1506.15" y="331.55" width="1.00" height="47.95" fill="#a80000" />
<rect x="1508.95" y="339.54" width="7.47" height="39.96" fill="#ff0000" />
<rect x="1508.95" y="339.54" width="1.00" height="39.96" fill="#ff3c3c" />
<rect x="1515.42" y="339.54" width="1.00" height="39.96" fill="#a80000" />
<rect x="1518.23" y="331.55" width="7.47" height="47.95" fill="#ff0000" />
<rect x="1518.23" y="331.55" width="1.00" height="47.95" fill="#ff3c3c" />
<rect x="1524.70" y="331.55" width="1.00" height="47.95" fill="#a80000" />
<rect x="1527.51" y="339.54" width="7.47" height="39.96" fill="#ff0000" />
<rect x="1527.51" y="339.54" width="1.00" height="39.96" fill="#ff3c3c" />
<rect x="1533.97" y="339.54" width="1.00" height="39.96" fill="#a80000" />
<rect x="1555.34" y="376.96" width="7.47" height="2.54" fill="#ff0000" />
<rect x="1555.34" y="376.96" width="1.00" height="2.54" fill="#ff3c3c" />
<rect x="1561.80" y="376.96" width="1.00" height="2.54" fill="#a80000" />
<rect x="1564.61" y="345.72" width="7.47" height="33.78" fill="#ff0000" />
<rect x="1564.61" y="345.72" width="1.00" height="33.78" fill="#ff3c3c" />
<rect x="1571.08" y="345.72" width="1.00" height="33.78" fill="#a80000" />
<rect x="1573.89" y="347.54" width="7.47" height="31.96" fill="#ff0000" />
<rect x="1573.89" y="347.54" width="1.00" height="31.96" fill="#ff3c3c" />
<rect x="1580.36" y="347.54" width="1.00" height="31.96" fill="#a80000" />
<rect x="1583.17" y="351.53" width="7.47" height="27.97" fill="#ff0000" />
<rect x="1583.17" y="351.53" width="1.00" height="27.97" fill="#ff3c3c" />
<rect x="1589.63" y="351.53" width="1.00" height="27.97" fill="#a80000" />
<text x="922.80" y="148.60" fill="#ff0000" font-size="14.3" font-weight="bold" textLength="9.2" lengthAdjust="spacingAndGlyphs" stroke="#ff0000" stroke-width="0.5">R</text>
<line x1="923.50" y1="139.50" x2="1591.50" y2="139.50" stroke="#000" stroke-width="1" />
<line x1="1591.50" y1="139.50" x2="1591.50" y2="379.50" stroke="#000" stroke-width="1" />
<line x1="923.50" y1="139.50" x2="923.50" y2="380.00" stroke="#000" stroke-width="1.15" />
<line x1="923.00" y1="379.50" x2="1592.00" y2="379.50" stroke="#000" stroke-width="1.15" />
<line x1="923.80" y1="379.50" x2="944.10" y2="379.50" stroke="#000" stroke-width="1" />
<text x="918.00" y="382.90" fill="#000" font-size="9.6" text-anchor="end" >0</text>
<line x1="923.80" y1="372.50" x2="934.10" y2="372.50" stroke="#000" stroke-width="1" />
<line x1="923.80" y1="364.50" x2="934.10" y2="364.50" stroke="#000" stroke-width="1" />
<line x1="923.80" y1="357.50" x2="934.10" y2="357.50" stroke="#000" stroke-width="1" />
<line x1="923.80" y1="350.50" x2="934.10" y2="350.50" stroke="#000" stroke-width="1" />
<line x1="923.80" y1="343.50" x2="944.10" y2="343.50" stroke="#000" stroke-width="1" />
<text x="918.00" y="346.58" fill="#000" font-size="9.6" text-anchor="end" >100</text>
<line x1="923.80" y1="335.50" x2="934.10" y2="335.50" stroke="#000" stroke-width="1" />
<line x1="923.80" y1="328.50" x2="934.10" y2="328.50" stroke="#000" stroke-width="1" />
<line x1="923.80" y1="321.50" x2="934.10" y2="321.50" stroke="#000" stroke-width="1" />
<line x1="923.80" y1="314.50" x2="934.10" y2="314.50" stroke="#000" stroke-width="1" />
<line x1="923.80" y1="306.50" x2="944.10" y2="306.50" stroke="#000" stroke-width="1" />
<text x="918.00" y="310.25" fill="#000" font-size="9.6" text-anchor="end" >200</text>
<line x1="923.80" y1="299.50" x2="934.10" y2="299.50" stroke="#000" stroke-width="1" />
<line x1="923.80" y1="292.50" x2="934.10" y2="292.50" stroke="#000" stroke-width="1" />
<line x1="923.80" y1="285.50" x2="934.10" y2="285.50" stroke="#000" stroke-width="1" />
<line x1="923.80" y1="277.50" x2="934.10" y2="277.50" stroke="#000" stroke-width="1" />
<line x1="923.80" y1="270.50" x2="944.10" y2="270.50" stroke="#000" stroke-width="1" />
<text x="918.00" y="273.93" fill="#000" font-size="9.6" text-anchor="end" >300</text>
<line x1="923.80" y1="263.50" x2="934.10" y2="263.50" stroke="#000" stroke-width="1" />
<line x1="923.80" y1="255.50" x2="934.10" y2="255.50" stroke="#000" stroke-width="1" />
<line x1="923.80" y1="248.50" x2="934.10" y2="248.50" stroke="#000" stroke-width="1" />
<line x1="923.80" y1="241.50" x2="934.10" y2="241.50" stroke="#000" stroke-width="1" />
<line x1="923.80" y1="234.50" x2="944.10" y2="234.50" stroke="#000" stroke-width="1" />
<text x="918.00" y="237.60" fill="#000" font-size="9.6" text-anchor="end" >400</text>
<line x1="923.80" y1="226.50" x2="934.10" y2="226.50" stroke="#000" stroke-width="1" />
<line x1="923.80" y1="219.50" x2="934.10" y2="219.50" stroke="#000" stroke-width="1" />
<line x1="923.80" y1="212.50" x2="934.10" y2="212.50" stroke="#000" stroke-width="1" />
<line x1="923.80" y1="205.50" x2="934.10" y2="205.50" stroke="#000" stroke-width="1" />
<line x1="923.80" y1="197.50" x2="944.10" y2="197.50" stroke="#000" stroke-width="1" />
<text x="918.00" y="201.28" fill="#000" font-size="9.6" text-anchor="end" >500</text>
<line x1="923.80" y1="190.50" x2="934.10" y2="190.50" stroke="#000" stroke-width="1" />
<line x1="923.80" y1="183.50" x2="934.10" y2="183.50" stroke="#000" stroke-width="1" />
<line x1="923.80" y1="176.50" x2="934.10" y2="176.50" stroke="#000" stroke-width="1" />
<line x1="923.80" y1="168.50" x2="934.10" y2="168.50" stroke="#000" stroke-width="1" />
<line x1="923.80" y1="161.50" x2="944.10" y2="161.50" stroke="#000" stroke-width="1" />
<text x="918.00" y="164.96" fill="#000" font-size="9.6" text-anchor="end" >600</text>
<line x1="923.80" y1="154.50" x2="934.10" y2="154.50" stroke="#000" stroke-width="1" />
<line x1="923.80" y1="147.50" x2="934.10" y2="147.50" stroke="#000" stroke-width="1" />
<line x1="923.80" y1="139.50" x2="934.10" y2="139.50" stroke="#000" stroke-width="1" />
<line x1="933.50" y1="371.50" x2="933.50" y2="379.50" stroke="#000" stroke-width="1" />
<line x1="942.50" y1="371.50" x2="942.50" y2="379.50" stroke="#000" stroke-width="1" />
<line x1="951.50" y1="371.50" x2="951.50" y2="379.50" stroke="#000" stroke-width="1" />
<line x1="960.50" y1="371.50" x2="960.50" y2="379.50" stroke="#000" stroke-width="1" />
<line x1="970.50" y1="371.50" x2="970.50" y2="379.50" stroke="#000" stroke-width="1" />
<line x1="979.50" y1="371.50" x2="979.50" y2="379.50" stroke="#000" stroke-width="1" />
<line x1="988.50" y1="371.50" x2="988.50" y2="379.50" stroke="#000" stroke-width="1" />
<line x1="998.50" y1="371.50" x2="998.50" y2="379.50" stroke="#000" stroke-width="1" />
<line x1="1007.50" y1="371.50" x2="1007.50" y2="379.50" stroke="#000" stroke-width="1" />
<line x1="1016.50" y1="371.50" x2="1016.50" y2="379.50" stroke="#000" stroke-width="1" />
<line x1="1025.50" y1="371.50" x2="1025.50" y2="379.50" stroke="#000" stroke-width="1" />
<line x1="1035.50" y1="371.50" x2="1035.50" y2="379.50" stroke="#000" stroke-width="1" />
<line x1="1044.50" y1="371.50" x2="1044.50" y2="379.50" stroke="#000" stroke-width="1" />
<line x1="1053.50" y1="371.50" x2="1053.50" y2="379.50" stroke="#000" stroke-width="1" />
<line x1="1062.50" y1="371.50" x2="1062.50" y2="379.50" stroke="#000" stroke-width="1" />
<line x1="1072.50" y1="371.50" x2="1072.50" y2="379.50" stroke="#000" stroke-width="1" />
<line x1="1081.50" y1="371.50" x2="1081.50" y2="379.50" stroke="#000" stroke-width="1" />
<line x1="1090.50" y1="371.50" x2="1090.50" y2="379.50" stroke="#000" stroke-width="1" />
<line x1="1100.50" y1="371.50" x2="1100.50" y2="379.50" stroke="#000" stroke-width="1" />
<line x1="1109.50" y1="371.50" x2="1109.50" y2="379.50" stroke="#000" stroke-width="1" />
<line x1="1118.50" y1="371.50" x2="1118.50" y2="379.50" stroke="#000" stroke-width="1" />
<line x1="1127.50" y1="371.50" x2="1127.50" y2="379.50" stroke="#000" stroke-width="1" />
<line x1="1137.50" y1="371.50" x2="1137.50" y2="379.50" stroke="#000" stroke-width="1" />
<line x1="1146.50" y1="371.50" x2="1146.50" y2="379.50" stroke="#000" stroke-width="1" />
<line x1="1155.50" y1="371.50" x2="1155.50" y2="379.50" stroke="#000" stroke-width="1" />
<line x1="1164.50" y1="371.50" x2="1164.50" y2="379.50" stroke="#000" stroke-width="1" />
<line x1="1174.50" y1="371.50" x2="1174.50" y2="379.50" stroke="#000" stroke-width="1" />
<line x1="1183.50" y1="371.50" x2="1183.50" y2="379.50" stroke="#000" stroke-width="1" />
<line x1="1192.50" y1="371.50" x2="1192.50" y2="379.50" stroke="#000" stroke-width="1" />
<line x1="1202.50" y1="371.50" x2="1202.50" y2="379.50" stroke="#000" stroke-width="1" />
<line x1="1211.50" y1="371.50" x2="1211.50" y2="379.50" stroke="#000" stroke-width="1" />
<line x1="1220.50" y1="371.50" x2="1220.50" y2="379.50" stroke="#000" stroke-width="1" />
<line x1="1229.50" y1="371.50" x2="1229.50" y2="379.50" stroke="#000" stroke-width="1" />
<line x1="1239.50" y1="371.50" x2="1239.50" y2="379.50" stroke="#000" stroke-width="1" />
<line x1="1248.50" y1="371.50" x2="1248.50" y2="379.50" stroke="#000" stroke-width="1" />
<line x1="1257.50" y1="371.50" x2="1257.50" y2="379.50" stroke="#000" stroke-width="1" />
<line x1="1267.50" y1="371.50" x2="1267.50" y2="379.50" stroke="#000" stroke-width="1" />
<line x1="1276.50" y1="371.50" x2="1276.50" y2="379.50" stroke="#000" stroke-width="1" />
<line x1="1285.50" y1="371.50" x2="1285.50" y2="379.50" stroke="#000" stroke-width="1" />
<line x1="1294.50" y1="371.50" x2="1294.50" y2="379.50" stroke="#000" stroke-width="1" />
<line x1="1304.50" y1="371.50" x2="1304.50" y2="379.50" stroke="#000" stroke-width="1" />
<line x1="1313.50" y1="371.50" x2="1313.50" y2="379.50" stroke="#000" stroke-width="1" />
<line x1="1322.50" y1="371.50" x2="1322.50" y2="379.50" stroke="#000" stroke-width="1" />
<line x1="1331.50" y1="371.50" x2="1331.50" y2="379.50" stroke="#000" stroke-width="1" />
<line x1="1341.50" y1="371.50" x2="1341.50" y2="379.50" stroke="#000" stroke-width="1" />
<line x1="1350.50" y1="371.50" x2="1350.50" y2="379.50" stroke="#000" stroke-width="1" />
<line x1="1359.50" y1="371.50" x2="1359.50" y2="379.50" stroke="#000" stroke-width="1" />
<line x1="1369.50" y1="371.50" x2="1369.50" y2="379.50" stroke="#000" stroke-width="1" />
<line x1="1378.50" y1="371.50" x2="1378.50" y2="379.50" stroke="#000" stroke-width="1" />
<line x1="1387.50" y1="371.50" x2="1387.50" y2="379.50" stroke="#000" stroke-width="1" />
<line x1="1396.50" y1="371.50" x2="1396.50" y2="379.50" stroke="#000" stroke-width="1" />
<line x1="1406.50" y1="371.50" x2="1406.50" y2="379.50" stroke="#000" stroke-width="1" />
<line x1="1415.50" y1="371.50" x2="1415.50" y2="379.50" stroke="#000" stroke-width="1" />
<line x1="1424.50" y1="371.50" x2="1424.50" y2="379.50" stroke="#000" stroke-width="1" />
<line x1="1434.50" y1="371.50" x2="1434.50" y2="379.50" stroke="#000" stroke-width="1" />
<line x1="1443.50" y1="371.50" x2="1443.50" y2="379.50" stroke="#000" stroke-width="1" />
<line x1="1452.50" y1="371.50" x2="1452.50" y2="379.50" stroke="#000" stroke-width="1" />
<line x1="1461.50" y1="371.50" x2="1461.50" y2="379.50" stroke="#000" stroke-width="1" />
<line x1="1471.50" y1="371.50" x2="1471.50" y2="379.50" stroke="#000" stroke-width="1" />
<line x1="1480.50" y1="371.50" x2="1480.50" y2="379.50" stroke="#000" stroke-width="1" />
<line x1="1489.50" y1="371.50" x2="1489.50" y2="379.50" stroke="#000" stroke-width="1" />
<line x1="1498.50" y1="371.50" x2="1498.50" y2="379.50" stroke="#000" stroke-width="1" />
<line x1="1508.50" y1="371.50" x2="1508.50" y2="379.50" stroke="#000" stroke-width="1" />
<line x1="1517.50" y1="371.50" x2="1517.50" y2="379.50" stroke="#000" stroke-width="1" />
<line x1="1526.50" y1="371.50" x2="1526.50" y2="379.50" stroke="#000" stroke-width="1" />
<line x1="1536.50" y1="371.50" x2="1536.50" y2="379.50" stroke="#000" stroke-width="1" />
<line x1="1545.50" y1="371.50" x2="1545.50" y2="379.50" stroke="#000" stroke-width="1" />
<line x1="1554.50" y1="371.50" x2="1554.50" y2="379.50" stroke="#000" stroke-width="1" />
<line x1="1563.50" y1="371.50" x2="1563.50" y2="379.50" stroke="#000" stroke-width="1" />
<line x1="1573.50" y1="371.50" x2="1573.50" y2="379.50" stroke="#000" stroke-width="1" />
<line x1="1582.50" y1="371.50" x2="1582.50" y2="379.50" stroke="#000" stroke-width="1" />
<text transform="translate(929.34,381.70) rotate(-90)" font-size="7.2" text-anchor="end" fill="#000">RING2A1_BGO1</text>
<text transform="translate(938.61,381.70) rotate(-90)" font-size="7.2" text-anchor="end" fill="#000">RING2A1_BGO2</text>
<text transform="translate(947.89,381.70) rotate(-90)" font-size="7.2" text-anchor="end" fill="#000">RING2A1_red</text>
<text transform="translate(957.17,381.70) rotate(-90)" font-size="7.2" text-anchor="end" fill="#000">RING2A1_black</text>
<text transform="translate(966.44,381.70) rotate(-90)" font-size="7.2" text-anchor="end" fill="#000">RING2A1_green</text>
<text transform="translate(975.72,381.70) rotate(-90)" font-size="7.2" text-anchor="end" fill="#000">RING2A1_blue</text>
<text transform="translate(985.00,381.70) rotate(-90)" font-size="7.2" text-anchor="end" fill="#000">RING2A2_BGO1</text>
<text transform="translate(994.27,381.70) rotate(-90)" font-size="7.2" text-anchor="end" fill="#000">RING2A2_BGO2</text>
<text transform="translate(1003.55,381.70) rotate(-90)" font-size="7.2" text-anchor="end" fill="#000">RING2A2_red</text>
<text transform="translate(1012.83,381.70) rotate(-90)" font-size="7.2" text-anchor="end" fill="#000">RING2A2_black</text>
<text transform="translate(1022.10,381.70) rotate(-90)" font-size="7.2" text-anchor="end" fill="#000">RING2A2_green</text>
<text transform="translate(1031.38,381.70) rotate(-90)" font-size="7.2" text-anchor="end" fill="#000">RING2A2_blue</text>
<text transform="translate(1040.65,381.70) rotate(-90)" font-size="7.2" text-anchor="end" fill="#000">RING2A3_BGO1</text>
<text transform="translate(1049.93,381.70) rotate(-90)" font-size="7.2" text-anchor="end" fill="#000">RING2A3_BGO2</text>
<text transform="translate(1059.21,381.70) rotate(-90)" font-size="7.2" text-anchor="end" fill="#000">RING2A3_red</text>
<text transform="translate(1068.48,381.70) rotate(-90)" font-size="7.2" text-anchor="end" fill="#000">RING2A3_black</text>
<text transform="translate(1077.76,381.70) rotate(-90)" font-size="7.2" text-anchor="end" fill="#000">RING2A3_green</text>
<text transform="translate(1087.04,381.70) rotate(-90)" font-size="7.2" text-anchor="end" fill="#000">RING2A3_blue</text>
<text transform="translate(1096.31,381.70) rotate(-90)" font-size="7.2" text-anchor="end" fill="#000">RING2A4_BGO1</text>
<text transform="translate(1105.59,381.70) rotate(-90)" font-size="7.2" text-anchor="end" fill="#000">RING2A4_BGO2</text>
<text transform="translate(1114.87,381.70) rotate(-90)" font-size="7.2" text-anchor="end" fill="#000">RING2A4_red</text>
<text transform="translate(1124.14,381.70) rotate(-90)" font-size="7.2" text-anchor="end" fill="#000">RING2A4_black</text>
<text transform="translate(1133.42,381.70) rotate(-90)" font-size="7.2" text-anchor="end" fill="#000">RING2A4_green</text>
<text transform="translate(1142.70,381.70) rotate(-90)" font-size="7.2" text-anchor="end" fill="#000">RING2A4_blue</text>
<text transform="translate(1151.97,381.70) rotate(-90)" font-size="7.2" text-anchor="end" fill="#000">RING2A5_BGO1</text>
<text transform="translate(1161.25,381.70) rotate(-90)" font-size="7.2" text-anchor="end" fill="#000">RING2A5_BGO2</text>
<text transform="translate(1170.52,381.70) rotate(-90)" font-size="7.2" text-anchor="end" fill="#000">RING2A5_red</text>
<text transform="translate(1179.80,381.70) rotate(-90)" font-size="7.2" text-anchor="end" fill="#000">RING2A5_black</text>
<text transform="translate(1189.08,381.70) rotate(-90)" font-size="7.2" text-anchor="end" fill="#000">RING2A5_green</text>
<text transform="translate(1198.35,381.70) rotate(-90)" font-size="7.2" text-anchor="end" fill="#000">RING2A5_blue</text>
<text transform="translate(1207.63,381.70) rotate(-90)" font-size="7.2" text-anchor="end" fill="#000">RING2A6_BGO1</text>
<text transform="translate(1216.91,381.70) rotate(-90)" font-size="7.2" text-anchor="end" fill="#000">RING2A6_BGO2</text>
<text transform="translate(1226.18,381.70) rotate(-90)" font-size="7.2" text-anchor="end" fill="#000">RING2A6_red</text>
<text transform="translate(1235.46,381.70) rotate(-90)" font-size="7.2" text-anchor="end" fill="#000">RING2A6_black</text>
<text transform="translate(1244.74,381.70) rotate(-90)" font-size="7.2" text-anchor="end" fill="#000">RING2A6_green</text>
<text transform="translate(1254.01,381.70) rotate(-90)" font-size="7.2" text-anchor="end" fill="#000">RING2A6_blue</text>
<text transform="translate(1263.29,381.70) rotate(-90)" font-size="7.2" text-anchor="end" fill="#000">RING2A7_BGO1</text>
<text transform="translate(1272.56,381.70) rotate(-90)" font-size="7.2" text-anchor="end" fill="#000">RING2A7_BGO2</text>
<text transform="translate(1281.84,381.70) rotate(-90)" font-size="7.2" text-anchor="end" fill="#000">RING2A7_red</text>
<text transform="translate(1291.12,381.70) rotate(-90)" font-size="7.2" text-anchor="end" fill="#000">RING2A7_black</text>
<text transform="translate(1300.39,381.70) rotate(-90)" font-size="7.2" text-anchor="end" fill="#000">RING2A7_green</text>
<text transform="translate(1309.67,381.70) rotate(-90)" font-size="7.2" text-anchor="end" fill="#000">RING2A7_blue</text>
<text transform="translate(1318.95,381.70) rotate(-90)" font-size="7.2" text-anchor="end" fill="#000">RING2A8_BGO1</text>
<text transform="translate(1328.22,381.70) rotate(-90)" font-size="7.2" text-anchor="end" fill="#000">RING2A8_BGO2</text>
<text transform="translate(1337.50,381.70) rotate(-90)" font-size="7.2" text-anchor="end" fill="#000">RING2A8_red</text>
<text transform="translate(1346.78,381.70) rotate(-90)" font-size="7.2" text-anchor="end" fill="#000">RING2A8_black</text>
<text transform="translate(1356.05,381.70) rotate(-90)" font-size="7.2" text-anchor="end" fill="#000">RING2A8_green</text>
<text transform="translate(1365.33,381.70) rotate(-90)" font-size="7.2" text-anchor="end" fill="#000">RING2A8_blue</text>
<text transform="translate(1374.60,381.70) rotate(-90)" font-size="7.2" text-anchor="end" fill="#000">RING2A9_BGO1</text>
<text transform="translate(1383.88,381.70) rotate(-90)" font-size="7.2" text-anchor="end" fill="#000">RING2A9_BGO2</text>
<text transform="translate(1393.16,381.70) rotate(-90)" font-size="7.2" text-anchor="end" fill="#000">RING2A9_red</text>
<text transform="translate(1402.43,381.70) rotate(-90)" font-size="7.2" text-anchor="end" fill="#000">RING2A9_black</text>
<text transform="translate(1411.71,381.70) rotate(-90)" font-size="7.2" text-anchor="end" fill="#000">RING2A9_green</text>
<text transform="translate(1420.99,381.70) rotate(-90)" font-size="7.2" text-anchor="end" fill="#000">RING2A9_blue</text>
<text transform="translate(1430.26,381.70) rotate(-90)" font-size="7.2" text-anchor="end" fill="#000">RING2A10_BGO1</text>
<text transform="translate(1439.54,381.70) rotate(-90)" font-size="7.2" text-anchor="end" fill="#000">RING2A10_BGO2</text>
<text transform="translate(1448.82,381.70) rotate(-90)" font-size="7.2" text-anchor="end" fill="#000">RING2A10_red</text>
<text transform="translate(1458.09,381.70) rotate(-90)" font-size="7.2" text-anchor="end" fill="#000">RING2A10_black</text>
<text transform="translate(1467.37,381.70) rotate(-90)" font-size="7.2" text-anchor="end" fill="#000">RING2A10_green</text>
<text transform="translate(1476.65,381.70) rotate(-90)" font-size="7.2" text-anchor="end" fill="#000">RING2A10_blue</text>
<text transform="translate(1485.92,381.70) rotate(-90)" font-size="7.2" text-anchor="end" fill="#000">RING2A11_BGO1</text>
<text transform="translate(1495.20,381.70) rotate(-90)" font-size="7.2" text-anchor="end" fill="#000">RING2A11_BGO2</text>
<text transform="translate(1504.47,381.70) rotate(-90)" font-size="7.2" text-anchor="end" fill="#000">RING2A11_red</text>
<text transform="translate(1513.75,381.70) rotate(-90)" font-size="7.2" text-anchor="end" fill="#000">RING2A11_black</text>
<text transform="translate(1523.03,381.70) rotate(-90)" font-size="7.2" text-anchor="end" fill="#000">RING2A11_green</text>
<text transform="translate(1532.30,381.70) rotate(-90)" font-size="7.2" text-anchor="end" fill="#000">RING2A11_blue</text>
<text transform="translate(1541.58,381.70) rotate(-90)" font-size="7.2" text-anchor="end" fill="#000">RING2A12_BGO1</text>
<text transform="translate(1550.86,381.70) rotate(-90)" font-size="7.2" text-anchor="end" fill="#000">RING2A12_BGO2</text>
<text transform="translate(1560.13,381.70) rotate(-90)" font-size="7.2" text-anchor="end" fill="#000">RING2A12_red</text>
<text transform="translate(1569.41,381.70) rotate(-90)" font-size="7.2" text-anchor="end" fill="#000">RING2A12_black</text>
<text transform="translate(1578.69,381.70) rotate(-90)" font-size="7.2" text-anchor="end" fill="#000">RING2A12_green</text>
<text transform="translate(1587.96,381.70) rotate(-90)" font-size="7.2" text-anchor="end" fill="#000">RING2A12_blue</text>
</g>
<rect x="844.90" y="113.40" width="2.60" height="14.50" fill="#000" />
<rect x="844.90" y="126.00" width="190.20" height="1.90" fill="#000" />
<rect x="847.50" y="110.40" width="191.20" height="15.60" fill="#f2f2f2" stroke="#000" stroke-width="1.1"/>
<text x="883.65" y="121.20" fill="#000" font-size="12.5" font-weight="bold" textLength="118.9" lengthAdjust="spacingAndGlyphs" >RING2_COUNTERS</text>
<rect x="1657.10" y="113.00" width="1.60" height="47.00" fill="#000" />
<rect x="1493.60" y="158.40" width="166.10" height="1.60" fill="#000" />
<rect x="1491.00" y="110.40" width="166.10" height="48.00" fill="#f2f2f2" stroke="#000" stroke-width="1.1"/>
<line x1="1491.00" y1="122.50" x2="1657.10" y2="122.50" stroke="#000" stroke-width="1.1" />
<text x="1507.80" y="119.00" fill="#000" font-size="9.2" font-weight="bold" textLength="132.5" lengthAdjust="spacingAndGlyphs" >RING2_COUNTERS_GRAPH</text>
<text x="1498.20" y="130.60" fill="#000" font-size="9.2" font-weight="bold" >Entries</text>
<text x="1647.60" y="130.60" fill="#000" font-size="9.2" font-weight="bold" text-anchor="end" >212812</text>
<text x="1498.20" y="142.90" fill="#000" font-size="9.2" font-weight="bold" >Mean</text>
<text x="1647.60" y="142.90" fill="#000" font-size="9.2" font-weight="bold" text-anchor="end" >0</text>
<text x="1498.20" y="154.70" fill="#000" font-size="9.2" font-weight="bold" >Std Dev</text>
<text x="1647.60" y="154.70" fill="#000" font-size="9.2" font-weight="bold" text-anchor="end" >0</text>
<clipPath id="pc2"><rect x="4.5" y="408.3" width="834.0" height="299.8"/></clipPath>
<g clip-path="url(#pc2)">
<rect x="89.34" y="463.74" width="7.47" height="215.36" fill="#ff0000" />
<rect x="89.34" y="463.74" width="1.00" height="215.36" fill="#ff3c3c" />
<rect x="95.81" y="463.74" width="1.00" height="215.36" fill="#a80000" />
<rect x="98.62" y="595.96" width="7.47" height="83.14" fill="#ff0000" />
<rect x="98.62" y="595.96" width="1.00" height="83.14" fill="#ff3c3c" />
<rect x="105.09" y="595.96" width="1.00" height="83.14" fill="#a80000" />
<rect x="107.89" y="659.43" width="7.47" height="19.67" fill="#ff0000" />
<rect x="107.89" y="659.43" width="1.00" height="19.67" fill="#ff3c3c" />
<rect x="114.36" y="659.43" width="1.00" height="19.67" fill="#a80000" />
<rect x="117.17" y="650.10" width="7.47" height="29.00" fill="#ff0000" />
<rect x="117.17" y="650.10" width="1.00" height="29.00" fill="#ff3c3c" />
<rect x="123.64" y="650.10" width="1.00" height="29.00" fill="#a80000" />
<rect x="126.45" y="654.36" width="7.47" height="24.74" fill="#ff0000" />
<rect x="126.45" y="654.36" width="1.00" height="24.74" fill="#ff3c3c" />
<rect x="132.92" y="654.36" width="1.00" height="24.74" fill="#a80000" />
<rect x="135.72" y="660.44" width="7.47" height="18.66" fill="#ff0000" />
<rect x="135.72" y="660.44" width="1.00" height="18.66" fill="#ff3c3c" />
<rect x="142.19" y="660.44" width="1.00" height="18.66" fill="#a80000" />
<rect x="145.00" y="457.05" width="7.47" height="222.05" fill="#ff0000" />
<rect x="145.00" y="457.05" width="1.00" height="222.05" fill="#ff3c3c" />
<rect x="151.47" y="457.05" width="1.00" height="222.05" fill="#a80000" />
<rect x="154.28" y="594.94" width="7.47" height="84.16" fill="#ff0000" />
<rect x="154.28" y="594.94" width="1.00" height="84.16" fill="#ff3c3c" />
<rect x="160.74" y="594.94" width="1.00" height="84.16" fill="#a80000" />
<rect x="163.55" y="657.40" width="7.47" height="21.70" fill="#ff0000" />
<rect x="163.55" y="657.40" width="1.00" height="21.70" fill="#ff3c3c" />
<rect x="170.02" y="657.40" width="1.00" height="21.70" fill="#a80000" />
<rect x="172.83" y="650.10" width="7.47" height="29.00" fill="#ff0000" />
<rect x="172.83" y="650.10" width="1.00" height="29.00" fill="#ff3c3c" />
<rect x="179.30" y="650.10" width="1.00" height="29.00" fill="#a80000" />
<rect x="182.11" y="661.46" width="7.47" height="17.64" fill="#ff0000" />
<rect x="182.11" y="661.46" width="1.00" height="17.64" fill="#ff3c3c" />
<rect x="188.57" y="661.46" width="1.00" height="17.64" fill="#a80000" />
<rect x="191.38" y="651.32" width="7.47" height="27.78" fill="#ff0000" />
<rect x="191.38" y="651.32" width="1.00" height="27.78" fill="#ff3c3c" />
<rect x="197.85" y="651.32" width="1.00" height="27.78" fill="#a80000" />
<rect x="200.66" y="571.01" width="7.47" height="108.09" fill="#ff0000" />
<rect x="200.66" y="571.01" width="1.00" height="108.09" fill="#ff3c3c" />
<rect x="207.13" y="571.01" width="1.00" height="108.09" fill="#a80000" />
<rect x="209.94" y="602.04" width="7.47" height="77.06" fill="#ff0000" />
<rect x="209.94" y="602.04" width="1.00" height="77.06" fill="#ff3c3c" />
<rect x="216.40" y="602.04" width="1.00" height="77.06" fill="#a80000" />
<rect x="219.21" y="657.40" width="7.47" height="21.70" fill="#ff0000" />
<rect x="219.21" y="657.40" width="1.00" height="21.70" fill="#ff3c3c" />
<rect x="225.68" y="657.40" width="1.00" height="21.70" fill="#a80000" />
<rect x="228.49" y="647.26" width="7.47" height="31.84" fill="#ff0000" />
<rect x="228.49" y="647.26" width="1.00" height="31.84" fill="#ff3c3c" />
<rect x="234.96" y="647.26" width="1.00" height="31.84" fill="#a80000" />
<rect x="237.76" y="659.43" width="7.47" height="19.67" fill="#ff0000" />
<rect x="237.76" y="659.43" width="1.00" height="19.67" fill="#ff3c3c" />
<rect x="244.23" y="659.43" width="1.00" height="19.67" fill="#a80000" />
<rect x="247.04" y="648.28" width="7.47" height="30.82" fill="#ff0000" />
<rect x="247.04" y="648.28" width="1.00" height="30.82" fill="#ff3c3c" />
<rect x="253.51" y="648.28" width="1.00" height="30.82" fill="#a80000" />
<rect x="256.32" y="459.08" width="7.47" height="220.02" fill="#ff0000" />
<rect x="256.32" y="459.08" width="1.00" height="220.02" fill="#ff3c3c" />
<rect x="262.78" y="459.08" width="1.00" height="220.02" fill="#a80000" />
<rect x="265.59" y="571.01" width="7.47" height="108.09" fill="#ff0000" />
<rect x="265.59" y="571.01" width="1.00" height="108.09" fill="#ff3c3c" />
<rect x="272.06" y="571.01" width="1.00" height="108.09" fill="#a80000" />
<rect x="274.87" y="657.40" width="7.47" height="21.70" fill="#ff0000" />
<rect x="274.87" y="657.40" width="1.00" height="21.70" fill="#ff3c3c" />
<rect x="281.34" y="657.40" width="1.00" height="21.70" fill="#a80000" />
<rect x="284.15" y="650.10" width="7.47" height="29.00" fill="#ff0000" />
<rect x="284.15" y="650.10" width="1.00" height="29.00" fill="#ff3c3c" />
<rect x="290.61" y="650.10" width="1.00" height="29.00" fill="#a80000" />
<rect x="293.42" y="655.37" width="7.47" height="23.73" fill="#ff0000" />
<rect x="293.42" y="655.37" width="1.00" height="23.73" fill="#ff3c3c" />
<rect x="299.89" y="655.37" width="1.00" height="23.73" fill="#a80000" />
<rect x="302.70" y="648.28" width="7.47" height="30.82" fill="#ff0000" />
<rect x="302.70" y="648.28" width="1.00" height="30.82" fill="#ff3c3c" />
<rect x="309.17" y="648.28" width="1.00" height="30.82" fill="#a80000" />
<rect x="311.98" y="511.40" width="7.47" height="167.70" fill="#ff0000" />
<rect x="311.98" y="511.40" width="1.00" height="167.70" fill="#ff3c3c" />
<rect x="318.44" y="511.40" width="1.00" height="167.70" fill="#a80000" />
<rect x="321.25" y="588.86" width="7.47" height="90.24" fill="#ff0000" />
<rect x="321.25" y="588.86" width="1.00" height="90.24" fill="#ff3c3c" />
<rect x="327.72" y="588.86" width="1.00" height="90.24" fill="#a80000" />
<rect x="330.53" y="668.56" width="7.47" height="10.54" fill="#ff0000" />
<rect x="330.53" y="668.56" width="1.00" height="10.54" fill="#ff3c3c" />
<rect x="337.00" y="668.56" width="1.00" height="10.54" fill="#a80000" />
<rect x="339.80" y="667.54" width="7.47" height="11.56" fill="#ff0000" />
<rect x="339.80" y="667.54" width="1.00" height="11.56" fill="#ff3c3c" />
<rect x="346.27" y="667.54" width="1.00" height="11.56" fill="#a80000" />
<rect x="349.08" y="656.39" width="7.47" height="22.71" fill="#ff0000" />
<rect x="349.08" y="656.39" width="1.00" height="22.71" fill="#ff3c3c" />
<rect x="355.55" y="656.39" width="1.00" height="22.71" fill="#a80000" />
<rect x="358.36" y="644.22" width="7.47" height="34.88" fill="#ff0000" />
<rect x="358.36" y="644.22" width="1.00" height="34.88" fill="#ff3c3c" />
<rect x="364.82" y="644.22" width="1.00" height="34.88" fill="#a80000" />
<rect x="367.63" y="532.69" width="7.47" height="146.41" fill="#ff0000" />
<rect x="367.63" y="532.69" width="1.00" height="146.41" fill="#ff3c3c" />
<rect x="374.10" y="532.69" width="1.00" height="146.41" fill="#a80000" />
<rect x="376.91" y="612.18" width="7.47" height="66.92" fill="#ff0000" />
<rect x="376.91" y="612.18" width="1.00" height="66.92" fill="#ff3c3c" />
<rect x="383.38" y="612.18" width="1.00" height="66.92" fill="#a80000" />
<rect x="386.19" y="662.47" width="7.47" height="16.63" fill="#ff0000" />
<rect x="386.19" y="662.47" width="1.00" height="16.63" fill="#ff3c3c" />
<rect x="392.65" y="662.47" width="1.00" height="16.63" fill="#a80000" />
<rect x="404.74" y="650.10" width="7.47" height="29.00" fill="#ff0000" />
<rect x="404.74" y="650.10" width="1.00" height="29.00" fill="#ff3c3c" />
<rect x="411.21" y="650.10" width="1.00" height="29.00" fill="#a80000" />
<rect x="423.29" y="556.01" width="7.47" height="123.09" fill="#ff0000" />
<rect x="423.29" y="556.01" width="1.00" height="123.09" fill="#ff3c3c" />
<rect x="429.76" y="556.01" width="1.00" height="123.09" fill="#a80000" />
<rect x="432.57" y="607.11" width="7.47" height="71.99" fill="#ff0000" />
<rect x="432.57" y="607.11" width="1.00" height="71.99" fill="#ff3c3c" />
<rect x="439.04" y="607.11" width="1.00" height="71.99" fill="#a80000" />
<rect x="469.67" y="668.56" width="7.47" height="10.54" fill="#ff0000" />
<rect x="469.67" y="668.56" width="1.00" height="10.54" fill="#ff3c3c" />
<rect x="476.14" y="668.56" width="1.00" height="10.54" fill="#a80000" />
<rect x="478.95" y="498.21" width="7.47" height="180.89" fill="#ff0000" />
<rect x="478.95" y="498.21" width="1.00" height="180.89" fill="#ff3c3c" />
<rect x="485.42" y="498.21" width="1.00" height="180.89" fill="#a80000" />
<rect x="488.23" y="588.86" width="7.47" height="90.24" fill="#ff0000" />
<rect x="488.23" y="588.86" width="1.00" height="90.24" fill="#ff3c3c" />
<rect x="494.69" y="588.86" width="1.00" height="90.24" fill="#a80000" />
<rect x="497.50" y="666.53" width="7.47" height="12.57" fill="#ff0000" />
<rect x="497.50" y="666.53" width="1.00" height="12.57" fill="#ff3c3c" />
<rect x="503.97" y="666.53" width="1.00" height="12.57" fill="#a80000" />
<rect x="506.78" y="658.42" width="7.47" height="20.68" fill="#ff0000" />
<rect x="506.78" y="658.42" width="1.00" height="20.68" fill="#ff3c3c" />
<rect x="513.25" y="658.42" width="1.00" height="20.68" fill="#a80000" />
<rect x="516.06" y="658.42" width="7.47" height="20.68" fill="#ff0000" />
<rect x="516.06" y="658.42" width="1.00" height="20.68" fill="#ff3c3c" />
<rect x="522.52" y="658.42" width="1.00" height="20.68" fill="#a80000" />
<rect x="525.33" y="670.58" width="7.47" height="8.52" fill="#ff0000" />
<rect x="525.33" y="670.58" width="1.00" height="8.52" fill="#ff3c3c" />
<rect x="531.80" y="670.58" width="1.00" height="8.52" fill="#a80000" />
<rect x="534.61" y="526.60" width="7.47" height="152.50" fill="#ff0000" />
<rect x="534.61" y="526.60" width="1.00" height="152.50" fill="#ff3c3c" />
<rect x="541.08" y="526.60" width="1.00" height="152.50" fill="#a80000" />
<rect x="543.89" y="556.01" width="7.47" height="123.09" fill="#ff0000" />
<rect x="543.89" y="556.01" width="1.00" height="123.09" fill="#ff3c3c" />
<rect x="550.35" y="556.01" width="1.00" height="123.09" fill="#a80000" />
<rect x="553.16" y="654.36" width="7.47" height="24.74" fill="#ff0000" />
<rect x="553.16" y="654.36" width="1.00" height="24.74" fill="#ff3c3c" />
<rect x="559.63" y="654.36" width="1.00" height="24.74" fill="#a80000" />
<rect x="562.44" y="649.29" width="7.47" height="29.81" fill="#ff0000" />
<rect x="562.44" y="649.29" width="1.00" height="29.81" fill="#ff3c3c" />
<rect x="568.91" y="649.29" width="1.00" height="29.81" fill="#a80000" />
<rect x="571.71" y="657.40" width="7.47" height="21.70" fill="#ff0000" />
<rect x="571.71" y="657.40" width="1.00" height="21.70" fill="#ff3c3c" />
<rect x="578.18" y="657.40" width="1.00" height="21.70" fill="#a80000" />
<rect x="580.99" y="646.25" width="7.47" height="32.85" fill="#ff0000" />
<rect x="580.99" y="646.25" width="1.00" height="32.85" fill="#ff3c3c" />
<rect x="587.46" y="646.25" width="1.00" height="32.85" fill="#a80000" />
<rect x="590.27" y="449.34" width="7.47" height="229.76" fill="#ff0000" />
<rect x="590.27" y="449.34" width="1.00" height="229.76" fill="#ff3c3c" />
<rect x="596.73" y="449.34" width="1.00" height="229.76" fill="#a80000" />
<rect x="599.54" y="576.08" width="7.47" height="103.02" fill="#ff0000" />
<rect x="599.54" y="576.08" width="1.00" height="103.02" fill="#ff3c3c" />
<rect x="606.01" y="576.08" width="1.00" height="103.02" fill="#a80000" />
<rect x="608.82" y="657.40" width="7.47" height="21.70" fill="#ff0000" />
<rect x="608.82" y="657.40" width="1.00" height="21.70" fill="#ff3c3c" />
<rect x="615.29" y="657.40" width="1.00" height="21.70" fill="#a80000" />
<rect x="618.10" y="649.29" width="7.47" height="29.81" fill="#ff0000" />
<rect x="618.10" y="649.29" width="1.00" height="29.81" fill="#ff3c3c" />
<rect x="624.56" y="649.29" width="1.00" height="29.81" fill="#a80000" />
<rect x="627.37" y="655.37" width="7.47" height="23.73" fill="#ff0000" />
<rect x="627.37" y="655.37" width="1.00" height="23.73" fill="#ff3c3c" />
<rect x="633.84" y="655.37" width="1.00" height="23.73" fill="#a80000" />
<rect x="645.93" y="459.08" width="7.47" height="220.02" fill="#ff0000" />
<rect x="645.93" y="459.08" width="1.00" height="220.02" fill="#ff3c3c" />
<rect x="652.39" y="459.08" width="1.00" height="220.02" fill="#a80000" />
<rect x="655.20" y="583.18" width="7.47" height="95.92" fill="#ff0000" />
<rect x="655.20" y="583.18" width="1.00" height="95.92" fill="#ff3c3c" />
<rect x="661.67" y="583.18" width="1.00" height="95.92" fill="#a80000" />
<rect x="664.48" y="666.53" width="7.47" height="12.57" fill="#ff0000" />
<rect x="664.48" y="666.53" width="1.00" height="12.57" fill="#ff3c3c" />
<rect x="670.95" y="666.53" width="1.00" height="12.57" fill="#a80000" />
<rect x="673.75" y="660.44" width="7.47" height="18.66" fill="#ff0000" />
<rect x="673.75" y="660.44" width="1.00" height="18.66" fill="#ff3c3c" />
<rect x="680.22" y="660.44" width="1.00" height="18.66" fill="#a80000" />
<rect x="683.03" y="655.37" width="7.47" height="23.73" fill="#ff0000" />
<rect x="683.03" y="655.37" width="1.00" height="23.73" fill="#ff3c3c" />
<rect x="689.50" y="655.37" width="1.00" height="23.73" fill="#a80000" />
<rect x="692.31" y="649.29" width="7.47" height="29.81" fill="#ff0000" />
<rect x="692.31" y="649.29" width="1.00" height="29.81" fill="#ff3c3c" />
<rect x="698.77" y="649.29" width="1.00" height="29.81" fill="#a80000" />
<rect x="701.58" y="467.59" width="7.47" height="211.51" fill="#ff0000" />
<rect x="701.58" y="467.59" width="1.00" height="211.51" fill="#ff3c3c" />
<rect x="708.05" y="467.59" width="1.00" height="211.51" fill="#a80000" />
<rect x="710.86" y="599.00" width="7.47" height="80.10" fill="#ff0000" />
<rect x="710.86" y="599.00" width="1.00" height="80.10" fill="#ff3c3c" />
<rect x="717.33" y="599.00" width="1.00" height="80.10" fill="#a80000" />
<rect x="720.14" y="651.32" width="7.47" height="27.78" fill="#ff0000" />
<rect x="720.14" y="651.32" width="1.00" height="27.78" fill="#ff3c3c" />
<rect x="726.60" y="651.32" width="1.00" height="27.78" fill="#a80000" />
<rect x="729.41" y="654.36" width="7.47" height="24.74" fill="#ff0000" />
<rect x="729.41" y="654.36" width="1.00" height="24.74" fill="#ff3c3c" />
<rect x="735.88" y="654.36" width="1.00" height="24.74" fill="#a80000" />
<rect x="738.69" y="652.33" width="7.47" height="26.77" fill="#ff0000" />
<rect x="738.69" y="652.33" width="1.00" height="26.77" fill="#ff3c3c" />
<rect x="745.16" y="652.33" width="1.00" height="26.77" fill="#a80000" />
<rect x="747.97" y="641.18" width="7.47" height="37.92" fill="#ff0000" />
<rect x="747.97" y="641.18" width="1.00" height="37.92" fill="#ff3c3c" />
<rect x="754.43" y="641.18" width="1.00" height="37.92" fill="#a80000" />
<text x="87.60" y="448.20" fill="#ff0000" font-size="14.3" font-weight="bold" textLength="9.2" lengthAdjust="spacingAndGlyphs" stroke="#ff0000" stroke-width="0.5">R</text>
<line x1="88.50" y1="439.50" x2="756.50" y2="439.50" stroke="#000" stroke-width="1" />
<line x1="756.50" y1="439.50" x2="756.50" y2="679.50" stroke="#000" stroke-width="1" />
<line x1="88.50" y1="439.50" x2="88.50" y2="680.00" stroke="#000" stroke-width="1.15" />
<line x1="88.00" y1="679.50" x2="757.00" y2="679.50" stroke="#000" stroke-width="1.15" />
<line x1="88.60" y1="679.50" x2="108.90" y2="679.50" stroke="#000" stroke-width="1" />
<text x="82.80" y="682.50" fill="#000" font-size="9.6" text-anchor="end" >0</text>
<line x1="88.60" y1="668.50" x2="98.90" y2="668.50" stroke="#000" stroke-width="1" />
<line x1="88.60" y1="658.50" x2="98.90" y2="658.50" stroke="#000" stroke-width="1" />
<line x1="88.60" y1="648.50" x2="98.90" y2="648.50" stroke="#000" stroke-width="1" />
<line x1="88.60" y1="638.50" x2="108.90" y2="638.50" stroke="#000" stroke-width="1" />
<text x="82.80" y="641.94" fill="#000" font-size="9.6" text-anchor="end" >200</text>
<line x1="88.60" y1="628.50" x2="98.90" y2="628.50" stroke="#000" stroke-width="1" />
<line x1="88.60" y1="618.50" x2="98.90" y2="618.50" stroke="#000" stroke-width="1" />
<line x1="88.60" y1="608.50" x2="98.90" y2="608.50" stroke="#000" stroke-width="1" />
<line x1="88.60" y1="597.50" x2="108.90" y2="597.50" stroke="#000" stroke-width="1" />
<text x="82.80" y="601.39" fill="#000" font-size="9.6" text-anchor="end" >400</text>
<line x1="88.60" y1="587.50" x2="98.90" y2="587.50" stroke="#000" stroke-width="1" />
<line x1="88.60" y1="577.50" x2="98.90" y2="577.50" stroke="#000" stroke-width="1" />
<line x1="88.60" y1="567.50" x2="98.90" y2="567.50" stroke="#000" stroke-width="1" />
<line x1="88.60" y1="557.50" x2="108.90" y2="557.50" stroke="#000" stroke-width="1" />
<text x="82.80" y="560.83" fill="#000" font-size="9.6" text-anchor="end" >600</text>
<line x1="88.60" y1="547.50" x2="98.90" y2="547.50" stroke="#000" stroke-width="1" />
<line x1="88.60" y1="537.50" x2="98.90" y2="537.50" stroke="#000" stroke-width="1" />
<line x1="88.60" y1="527.50" x2="98.90" y2="527.50" stroke="#000" stroke-width="1" />
<line x1="88.60" y1="516.50" x2="108.90" y2="516.50" stroke="#000" stroke-width="1" />
<text x="82.80" y="520.27" fill="#000" font-size="9.6" text-anchor="end" >800</text>
<line x1="88.60" y1="506.50" x2="98.90" y2="506.50" stroke="#000" stroke-width="1" />
<line x1="88.60" y1="496.50" x2="98.90" y2="496.50" stroke="#000" stroke-width="1" />
<line x1="88.60" y1="486.50" x2="98.90" y2="486.50" stroke="#000" stroke-width="1" />
<line x1="88.60" y1="476.50" x2="108.90" y2="476.50" stroke="#000" stroke-width="1" />
<text x="82.80" y="479.71" fill="#000" font-size="9.6" text-anchor="end" >1000</text>
<line x1="88.60" y1="466.50" x2="98.90" y2="466.50" stroke="#000" stroke-width="1" />
<line x1="88.60" y1="456.50" x2="98.90" y2="456.50" stroke="#000" stroke-width="1" />
<line x1="88.60" y1="445.50" x2="98.90" y2="445.50" stroke="#000" stroke-width="1" />
<line x1="97.50" y1="671.10" x2="97.50" y2="679.10" stroke="#000" stroke-width="1" />
<line x1="107.50" y1="671.10" x2="107.50" y2="679.10" stroke="#000" stroke-width="1" />
<line x1="116.50" y1="671.10" x2="116.50" y2="679.10" stroke="#000" stroke-width="1" />
<line x1="125.50" y1="671.10" x2="125.50" y2="679.10" stroke="#000" stroke-width="1" />
<line x1="134.50" y1="671.10" x2="134.50" y2="679.10" stroke="#000" stroke-width="1" />
<line x1="144.50" y1="671.10" x2="144.50" y2="679.10" stroke="#000" stroke-width="1" />
<line x1="153.50" y1="671.10" x2="153.50" y2="679.10" stroke="#000" stroke-width="1" />
<line x1="162.50" y1="671.10" x2="162.50" y2="679.10" stroke="#000" stroke-width="1" />
<line x1="172.50" y1="671.10" x2="172.50" y2="679.10" stroke="#000" stroke-width="1" />
<line x1="181.50" y1="671.10" x2="181.50" y2="679.10" stroke="#000" stroke-width="1" />
<line x1="190.50" y1="671.10" x2="190.50" y2="679.10" stroke="#000" stroke-width="1" />
<line x1="199.50" y1="671.10" x2="199.50" y2="679.10" stroke="#000" stroke-width="1" />
<line x1="209.50" y1="671.10" x2="209.50" y2="679.10" stroke="#000" stroke-width="1" />
<line x1="218.50" y1="671.10" x2="218.50" y2="679.10" stroke="#000" stroke-width="1" />
<line x1="227.50" y1="671.10" x2="227.50" y2="679.10" stroke="#000" stroke-width="1" />
<line x1="237.50" y1="671.10" x2="237.50" y2="679.10" stroke="#000" stroke-width="1" />
<line x1="246.50" y1="671.10" x2="246.50" y2="679.10" stroke="#000" stroke-width="1" />
<line x1="255.50" y1="671.10" x2="255.50" y2="679.10" stroke="#000" stroke-width="1" />
<line x1="264.50" y1="671.10" x2="264.50" y2="679.10" stroke="#000" stroke-width="1" />
<line x1="274.50" y1="671.10" x2="274.50" y2="679.10" stroke="#000" stroke-width="1" />
<line x1="283.50" y1="671.10" x2="283.50" y2="679.10" stroke="#000" stroke-width="1" />
<line x1="292.50" y1="671.10" x2="292.50" y2="679.10" stroke="#000" stroke-width="1" />
<line x1="301.50" y1="671.10" x2="301.50" y2="679.10" stroke="#000" stroke-width="1" />
<line x1="311.50" y1="671.10" x2="311.50" y2="679.10" stroke="#000" stroke-width="1" />
<line x1="320.50" y1="671.10" x2="320.50" y2="679.10" stroke="#000" stroke-width="1" />
<line x1="329.50" y1="671.10" x2="329.50" y2="679.10" stroke="#000" stroke-width="1" />
<line x1="339.50" y1="671.10" x2="339.50" y2="679.10" stroke="#000" stroke-width="1" />
<line x1="348.50" y1="671.10" x2="348.50" y2="679.10" stroke="#000" stroke-width="1" />
<line x1="357.50" y1="671.10" x2="357.50" y2="679.10" stroke="#000" stroke-width="1" />
<line x1="366.50" y1="671.10" x2="366.50" y2="679.10" stroke="#000" stroke-width="1" />
<line x1="376.50" y1="671.10" x2="376.50" y2="679.10" stroke="#000" stroke-width="1" />
<line x1="385.50" y1="671.10" x2="385.50" y2="679.10" stroke="#000" stroke-width="1" />
<line x1="394.50" y1="671.10" x2="394.50" y2="679.10" stroke="#000" stroke-width="1" />
<line x1="403.50" y1="671.10" x2="403.50" y2="679.10" stroke="#000" stroke-width="1" />
<line x1="413.50" y1="671.10" x2="413.50" y2="679.10" stroke="#000" stroke-width="1" />
<line x1="422.50" y1="671.10" x2="422.50" y2="679.10" stroke="#000" stroke-width="1" />
<line x1="431.50" y1="671.10" x2="431.50" y2="679.10" stroke="#000" stroke-width="1" />
<line x1="441.50" y1="671.10" x2="441.50" y2="679.10" stroke="#000" stroke-width="1" />
<line x1="450.50" y1="671.10" x2="450.50" y2="679.10" stroke="#000" stroke-width="1" />
<line x1="459.50" y1="671.10" x2="459.50" y2="679.10" stroke="#000" stroke-width="1" />
<line x1="468.50" y1="671.10" x2="468.50" y2="679.10" stroke="#000" stroke-width="1" />
<line x1="478.50" y1="671.10" x2="478.50" y2="679.10" stroke="#000" stroke-width="1" />
<line x1="487.50" y1="671.10" x2="487.50" y2="679.10" stroke="#000" stroke-width="1" />
<line x1="496.50" y1="671.10" x2="496.50" y2="679.10" stroke="#000" stroke-width="1" />
<line x1="506.50" y1="671.10" x2="506.50" y2="679.10" stroke="#000" stroke-width="1" />
<line x1="515.50" y1="671.10" x2="515.50" y2="679.10" stroke="#000" stroke-width="1" />
<line x1="524.50" y1="671.10" x2="524.50" y2="679.10" stroke="#000" stroke-width="1" />
<line x1="533.50" y1="671.10" x2="533.50" y2="679.10" stroke="#000" stroke-width="1" />
<line x1="543.50" y1="671.10" x2="543.50" y2="679.10" stroke="#000" stroke-width="1" />
<line x1="552.50" y1="671.10" x2="552.50" y2="679.10" stroke="#000" stroke-width="1" />
<line x1="561.50" y1="671.10" x2="561.50" y2="679.10" stroke="#000" stroke-width="1" />
<line x1="570.50" y1="671.10" x2="570.50" y2="679.10" stroke="#000" stroke-width="1" />
<line x1="580.50" y1="671.10" x2="580.50" y2="679.10" stroke="#000" stroke-width="1" />
<line x1="589.50" y1="671.10" x2="589.50" y2="679.10" stroke="#000" stroke-width="1" />
<line x1="598.50" y1="671.10" x2="598.50" y2="679.10" stroke="#000" stroke-width="1" />
<line x1="608.50" y1="671.10" x2="608.50" y2="679.10" stroke="#000" stroke-width="1" />
<line x1="617.50" y1="671.10" x2="617.50" y2="679.10" stroke="#000" stroke-width="1" />
<line x1="626.50" y1="671.10" x2="626.50" y2="679.10" stroke="#000" stroke-width="1" />
<line x1="635.50" y1="671.10" x2="635.50" y2="679.10" stroke="#000" stroke-width="1" />
<line x1="645.50" y1="671.10" x2="645.50" y2="679.10" stroke="#000" stroke-width="1" />
<line x1="654.50" y1="671.10" x2="654.50" y2="679.10" stroke="#000" stroke-width="1" />
<line x1="663.50" y1="671.10" x2="663.50" y2="679.10" stroke="#000" stroke-width="1" />
<line x1="673.50" y1="671.10" x2="673.50" y2="679.10" stroke="#000" stroke-width="1" />
<line x1="682.50" y1="671.10" x2="682.50" y2="679.10" stroke="#000" stroke-width="1" />
<line x1="691.50" y1="671.10" x2="691.50" y2="679.10" stroke="#000" stroke-width="1" />
<line x1="700.50" y1="671.10" x2="700.50" y2="679.10" stroke="#000" stroke-width="1" />
<line x1="710.50" y1="671.10" x2="710.50" y2="679.10" stroke="#000" stroke-width="1" />
<line x1="719.50" y1="671.10" x2="719.50" y2="679.10" stroke="#000" stroke-width="1" />
<line x1="728.50" y1="671.10" x2="728.50" y2="679.10" stroke="#000" stroke-width="1" />
<line x1="737.50" y1="671.10" x2="737.50" y2="679.10" stroke="#000" stroke-width="1" />
<line x1="747.50" y1="671.10" x2="747.50" y2="679.10" stroke="#000" stroke-width="1" />
<text transform="translate(94.14,681.30) rotate(-90)" font-size="7.2" text-anchor="end" fill="#000">RING3A1_BGO1</text>
<text transform="translate(103.41,681.30) rotate(-90)" font-size="7.2" text-anchor="end" fill="#000">RING3A1_BGO2</text>
<text transform="translate(112.69,681.30) rotate(-90)" font-size="7.2" text-anchor="end" fill="#000">RING3A1_red</text>
<text transform="translate(121.97,681.30) rotate(-90)" font-size="7.2" text-anchor="end" fill="#000">RING3A1_black</text>
<text transform="translate(131.24,681.30) rotate(-90)" font-size="7.2" text-anchor="end" fill="#000">RING3A1_green</text>
<text transform="translate(140.52,681.30) rotate(-90)" font-size="7.2" text-anchor="end" fill="#000">RING3A1_blue</text>
<text transform="translate(149.80,681.30) rotate(-90)" font-size="7.2" text-anchor="end" fill="#000">RING3A2_BGO1</text>
<text transform="translate(159.07,681.30) rotate(-90)" font-size="7.2" text-anchor="end" fill="#000">RING3A2_BGO2</text>
<text transform="translate(168.35,681.30) rotate(-90)" font-size="7.2" text-anchor="end" fill="#000">RING3A2_red</text>
<text transform="translate(177.63,681.30) rotate(-90)" font-size="7.2" text-anchor="end" fill="#000">RING3A2_black</text>
<text transform="translate(186.90,681.30) rotate(-90)" font-size="7.2" text-anchor="end" fill="#000">RING3A2_green</text>
<text transform="translate(196.18,681.30) rotate(-90)" font-size="7.2" text-anchor="end" fill="#000">RING3A2_blue</text>
<text transform="translate(205.45,681.30) rotate(-90)" font-size="7.2" text-anchor="end" fill="#000">RING3A3_BGO1</text>
<text transform="translate(214.73,681.30) rotate(-90)" font-size="7.2" text-anchor="end" fill="#000">RING3A3_BGO2</text>
<text transform="translate(224.01,681.30) rotate(-90)" font-size="7.2" text-anchor="end" fill="#000">RING3A3_red</text>
<text transform="translate(233.28,681.30) rotate(-90)" font-size="7.2" text-anchor="end" fill="#000">RING3A3_black</text>
<text transform="translate(242.56,681.30) rotate(-90)" font-size="7.2" text-anchor="end" fill="#000">RING3A3_green</text>
<text transform="translate(251.84,681.30) rotate(-90)" font-size="7.2" text-anchor="end" fill="#000">RING3A3_blue</text>
<text transform="translate(261.11,681.30) rotate(-90)" font-size="7.2" text-anchor="end" fill="#000">RING3A4_BGO1</text>
<text transform="translate(270.39,681.30) rotate(-90)" font-size="7.2" text-anchor="end" fill="#000">RING3A4_BGO2</text>
<text transform="translate(279.67,681.30) rotate(-90)" font-size="7.2" text-anchor="end" fill="#000">RING3A4_red</text>
<text transform="translate(288.94,681.30) rotate(-90)" font-size="7.2" text-anchor="end" fill="#000">RING3A4_black</text>
<text transform="translate(298.22,681.30) rotate(-90)" font-size="7.2" text-anchor="end" fill="#000">RING3A4_green</text>
<text transform="translate(307.50,681.30) rotate(-90)" font-size="7.2" text-anchor="end" fill="#000">RING3A4_blue</text>
<text transform="translate(316.77,681.30) rotate(-90)" font-size="7.2" text-anchor="end" fill="#000">RING3A5_BGO1</text>
<text transform="translate(326.05,681.30) rotate(-90)" font-size="7.2" text-anchor="end" fill="#000">RING3A5_BGO2</text>
<text transform="translate(335.32,681.30) rotate(-90)" font-size="7.2" text-anchor="end" fill="#000">RING3A5_red</text>
<text transform="translate(344.60,681.30) rotate(-90)" font-size="7.2" text-anchor="end" fill="#000">RING3A5_black</text>
<text transform="translate(353.88,681.30) rotate(-90)" font-size="7.2" text-anchor="end" fill="#000">RING3A5_green</text>
<text transform="translate(363.15,681.30) rotate(-90)" font-size="7.2" text-anchor="end" fill="#000">RING3A5_blue</text>
<text transform="translate(372.43,681.30) rotate(-90)" font-size="7.2" text-anchor="end" fill="#000">RING3A6_BGO1</text>
<text transform="translate(381.71,681.30) rotate(-90)" font-size="7.2" text-anchor="end" fill="#000">RING3A6_BGO2</text>
<text transform="translate(390.98,681.30) rotate(-90)" font-size="7.2" text-anchor="end" fill="#000">RING3A6_red</text>
<text transform="translate(400.26,681.30) rotate(-90)" font-size="7.2" text-anchor="end" fill="#000">RING3A6_black</text>
<text transform="translate(409.54,681.30) rotate(-90)" font-size="7.2" text-anchor="end" fill="#000">RING3A6_green</text>
<text transform="translate(418.81,681.30) rotate(-90)" font-size="7.2" text-anchor="end" fill="#000">RING3A6_blue</text>
<text transform="translate(428.09,681.30) rotate(-90)" font-size="7.2" text-anchor="end" fill="#000">RING3A7_BGO1</text>
<text transform="translate(437.36,681.30) rotate(-90)" font-size="7.2" text-anchor="end" fill="#000">RING3A7_BGO2</text>
<text transform="translate(446.64,681.30) rotate(-90)" font-size="7.2" text-anchor="end" fill="#000">RING3A7_red</text>
<text transform="translate(455.92,681.30) rotate(-90)" font-size="7.2" text-anchor="end" fill="#000">RING3A7_black</text>
<text transform="translate(465.19,681.30) rotate(-90)" font-size="7.2" text-anchor="end" fill="#000">RING3A7_green</text>
<text transform="translate(474.47,681.30) rotate(-90)" font-size="7.2" text-anchor="end" fill="#000">RING3A7_blue</text>
<text transform="translate(483.75,681.30) rotate(-90)" font-size="7.2" text-anchor="end" fill="#000">RING3A8_BGO1</text>
<text transform="translate(493.02,681.30) rotate(-90)" font-size="7.2" text-anchor="end" fill="#000">RING3A8_BGO2</text>
<text transform="translate(502.30,681.30) rotate(-90)" font-size="7.2" text-anchor="end" fill="#000">RING3A8_red</text>
<text transform="translate(511.58,681.30) rotate(-90)" font-size="7.2" text-anchor="end" fill="#000">RING3A8_black</text>
<text transform="translate(520.85,681.30) rotate(-90)" font-size="7.2" text-anchor="end" fill="#000">RING3A8_green</text>
<text transform="translate(530.13,681.30) rotate(-90)" font-size="7.2" text-anchor="end" fill="#000">RING3A8_blue</text>
<text transform="translate(539.40,681.30) rotate(-90)" font-size="7.2" text-anchor="end" fill="#000">RING3A9_BGO1</text>
<text transform="translate(548.68,681.30) rotate(-90)" font-size="7.2" text-anchor="end" fill="#000">RING3A9_BGO2</text>
<text transform="translate(557.96,681.30) rotate(-90)" font-size="7.2" text-anchor="end" fill="#000">RING3A9_red</text>
<text transform="translate(567.23,681.30) rotate(-90)" font-size="7.2" text-anchor="end" fill="#000">RING3A9_black</text>
<text transform="translate(576.51,681.30) rotate(-90)" font-size="7.2" text-anchor="end" fill="#000">RING3A9_green</text>
<text transform="translate(585.79,681.30) rotate(-90)" font-size="7.2" text-anchor="end" fill="#000">RING3A9_blue</text>
<text transform="translate(595.06,681.30) rotate(-90)" font-size="7.2" text-anchor="end" fill="#000">RING3A10_BGO1</text>
<text transform="translate(604.34,681.30) rotate(-90)" font-size="7.2" text-anchor="end" fill="#000">RING3A10_BGO2</text>
<text transform="translate(613.62,681.30) rotate(-90)" font-size="7.2" text-anchor="end" fill="#000">RING3A10_red</text>
<text transform="translate(622.89,681.30) rotate(-90)" font-size="7.2" text-anchor="end" fill="#000">RING3A10_black</text>
<text transform="translate(632.17,681.30) rotate(-90)" font-size="7.2" text-anchor="end" fill="#000">RING3A10_green</text>
<text transform="translate(641.45,681.30) rotate(-90)" font-size="7.2" text-anchor="end" fill="#000">RING3A10_blue</text>
<text transform="translate(650.72,681.30) rotate(-90)" font-size="7.2" text-anchor="end" fill="#000">RING3A11_BGO1</text>
<text transform="translate(660.00,681.30) rotate(-90)" font-size="7.2" text-anchor="end" fill="#000">RING3A11_BGO2</text>
<text transform="translate(669.27,681.30) rotate(-90)" font-size="7.2" text-anchor="end" fill="#000">RING3A11_red</text>
<text transform="translate(678.55,681.30) rotate(-90)" font-size="7.2" text-anchor="end" fill="#000">RING3A11_black</text>
<text transform="translate(687.83,681.30) rotate(-90)" font-size="7.2" text-anchor="end" fill="#000">RING3A11_green</text>
<text transform="translate(697.10,681.30) rotate(-90)" font-size="7.2" text-anchor="end" fill="#000">RING3A11_blue</text>
<text transform="translate(706.38,681.30) rotate(-90)" font-size="7.2" text-anchor="end" fill="#000">RING3A12_BGO1</text>
<text transform="translate(715.66,681.30) rotate(-90)" font-size="7.2" text-anchor="end" fill="#000">RING3A12_BGO2</text>
<text transform="translate(724.93,681.30) rotate(-90)" font-size="7.2" text-anchor="end" fill="#000">RING3A12_red</text>
<text transform="translate(734.21,681.30) rotate(-90)" font-size="7.2" text-anchor="end" fill="#000">RING3A12_black</text>
<text transform="translate(743.49,681.30) rotate(-90)" font-size="7.2" text-anchor="end" fill="#000">RING3A12_green</text>
<text transform="translate(752.76,681.30) rotate(-90)" font-size="7.2" text-anchor="end" fill="#000">RING3A12_blue</text>
</g>
<rect x="11.00" y="413.00" width="2.60" height="14.50" fill="#000" />
<rect x="11.00" y="425.60" width="190.00" height="1.90" fill="#000" />
<rect x="13.60" y="410.00" width="191.00" height="15.60" fill="#f2f2f2" stroke="#000" stroke-width="1.1"/>
<text x="49.50" y="420.80" fill="#000" font-size="12.5" font-weight="bold" textLength="119.2" lengthAdjust="spacingAndGlyphs" >RING3_COUNTERS</text>
<rect x="822.50" y="412.60" width="1.60" height="47.00" fill="#000" />
<rect x="659.00" y="458.00" width="166.10" height="1.60" fill="#000" />
<rect x="656.40" y="410.00" width="166.10" height="48.00" fill="#f2f2f2" stroke="#000" stroke-width="1.1"/>
<line x1="656.40" y1="422.10" x2="822.50" y2="422.10" stroke="#000" stroke-width="1.1" />
<text x="673.00" y="418.60" fill="#000" font-size="9.2" font-weight="bold" textLength="132.9" lengthAdjust="spacingAndGlyphs" >RING3_COUNTERS_GRAPH</text>
<text x="663.60" y="430.20" fill="#000" font-size="9.2" font-weight="bold" >Entries</text>
<text x="813.00" y="430.20" fill="#000" font-size="9.2" font-weight="bold" text-anchor="end" >212840</text>
<text x="663.60" y="442.50" fill="#000" font-size="9.2" font-weight="bold" >Mean</text>
<text x="813.00" y="442.50" fill="#000" font-size="9.2" font-weight="bold" text-anchor="end" >0</text>
<text x="663.60" y="454.30" fill="#000" font-size="9.2" font-weight="bold" >Std Dev</text>
<text x="813.00" y="454.30" fill="#000" font-size="9.2" font-weight="bold" text-anchor="end" >0</text>
<clipPath id="pc3"><rect x="839.5" y="408.3" width="834.0" height="299.8"/></clipPath>
<g clip-path="url(#pc3)">
<text x="922.80" y="448.20" fill="#ff0000" font-size="14.3" font-weight="bold" textLength="9.2" lengthAdjust="spacingAndGlyphs" stroke="#ff0000" stroke-width="0.5">R</text>
<line x1="923.50" y1="439.50" x2="1591.50" y2="439.50" stroke="#000" stroke-width="1" />
<line x1="1591.50" y1="439.50" x2="1591.50" y2="679.50" stroke="#000" stroke-width="1" />
<line x1="923.50" y1="439.50" x2="923.50" y2="680.00" stroke="#000" stroke-width="1.15" />
<line x1="923.00" y1="679.50" x2="1592.00" y2="679.50" stroke="#000" stroke-width="1.15" />
<line x1="923.80" y1="679.50" x2="944.10" y2="679.50" stroke="#000" stroke-width="1" />
<text x="918.00" y="682.50" fill="#000" font-size="9.6" text-anchor="end" >0</text>
<line x1="923.80" y1="667.50" x2="934.10" y2="667.50" stroke="#000" stroke-width="1" />
<line x1="923.80" y1="656.50" x2="934.10" y2="656.50" stroke="#000" stroke-width="1" />
<line x1="923.80" y1="644.50" x2="934.10" y2="644.50" stroke="#000" stroke-width="1" />
<line x1="923.80" y1="633.50" x2="944.10" y2="633.50" stroke="#000" stroke-width="1" />
<text x="918.00" y="636.66" fill="#000" font-size="9.6" text-anchor="end" >0.2</text>
<line x1="923.80" y1="621.50" x2="934.10" y2="621.50" stroke="#000" stroke-width="1" />
<line x1="923.80" y1="610.50" x2="934.10" y2="610.50" stroke="#000" stroke-width="1" />
<line x1="923.80" y1="598.50" x2="934.10" y2="598.50" stroke="#000" stroke-width="1" />
<line x1="923.80" y1="587.50" x2="944.10" y2="587.50" stroke="#000" stroke-width="1" />
<text x="918.00" y="590.82" fill="#000" font-size="9.6" text-anchor="end" >0.4</text>
<line x1="923.80" y1="575.50" x2="934.10" y2="575.50" stroke="#000" stroke-width="1" />
<line x1="923.80" y1="564.50" x2="934.10" y2="564.50" stroke="#000" stroke-width="1" />
<line x1="923.80" y1="553.50" x2="934.10" y2="553.50" stroke="#000" stroke-width="1" />
<line x1="923.80" y1="541.50" x2="944.10" y2="541.50" stroke="#000" stroke-width="1" />
<text x="918.00" y="544.99" fill="#000" font-size="9.6" text-anchor="end" >0.6</text>
<line x1="923.80" y1="530.50" x2="934.10" y2="530.50" stroke="#000" stroke-width="1" />
<line x1="923.80" y1="518.50" x2="934.10" y2="518.50" stroke="#000" stroke-width="1" />
<line x1="923.80" y1="507.50" x2="934.10" y2="507.50" stroke="#000" stroke-width="1" />
<line x1="923.80" y1="495.50" x2="944.10" y2="495.50" stroke="#000" stroke-width="1" />
<text x="918.00" y="499.15" fill="#000" font-size="9.6" text-anchor="end" >0.8</text>
<line x1="923.80" y1="484.50" x2="934.10" y2="484.50" stroke="#000" stroke-width="1" />
<line x1="923.80" y1="472.50" x2="934.10" y2="472.50" stroke="#000" stroke-width="1" />
<line x1="923.80" y1="461.50" x2="934.10" y2="461.50" stroke="#000" stroke-width="1" />
<line x1="923.80" y1="449.50" x2="944.10" y2="449.50" stroke="#000" stroke-width="1" />
<text x="918.00" y="453.31" fill="#000" font-size="9.6" text-anchor="end" >1</text>
<line x1="943.50" y1="671.10" x2="943.50" y2="679.10" stroke="#000" stroke-width="1" />
<line x1="963.50" y1="671.10" x2="963.50" y2="679.10" stroke="#000" stroke-width="1" />
<line x1="982.50" y1="671.10" x2="982.50" y2="679.10" stroke="#000" stroke-width="1" />
<line x1="1002.50" y1="671.10" x2="1002.50" y2="679.10" stroke="#000" stroke-width="1" />
<line x1="1022.50" y1="671.10" x2="1022.50" y2="679.10" stroke="#000" stroke-width="1" />
<line x1="1041.50" y1="671.10" x2="1041.50" y2="679.10" stroke="#000" stroke-width="1" />
<line x1="1061.50" y1="671.10" x2="1061.50" y2="679.10" stroke="#000" stroke-width="1" />
<line x1="1080.50" y1="671.10" x2="1080.50" y2="679.10" stroke="#000" stroke-width="1" />
<line x1="1100.50" y1="671.10" x2="1100.50" y2="679.10" stroke="#000" stroke-width="1" />
<line x1="1120.50" y1="671.10" x2="1120.50" y2="679.10" stroke="#000" stroke-width="1" />
<line x1="1139.50" y1="671.10" x2="1139.50" y2="679.10" stroke="#000" stroke-width="1" />
<line x1="1159.50" y1="671.10" x2="1159.50" y2="679.10" stroke="#000" stroke-width="1" />
<line x1="1179.50" y1="671.10" x2="1179.50" y2="679.10" stroke="#000" stroke-width="1" />
<line x1="1198.50" y1="671.10" x2="1198.50" y2="679.10" stroke="#000" stroke-width="1" />
<line x1="1218.50" y1="671.10" x2="1218.50" y2="679.10" stroke="#000" stroke-width="1" />
<line x1="1238.50" y1="671.10" x2="1238.50" y2="679.10" stroke="#000" stroke-width="1" />
<line x1="1257.50" y1="671.10" x2="1257.50" y2="679.10" stroke="#000" stroke-width="1" />
<line x1="1277.50" y1="671.10" x2="1277.50" y2="679.10" stroke="#000" stroke-width="1" />
<line x1="1297.50" y1="671.10" x2="1297.50" y2="679.10" stroke="#000" stroke-width="1" />
<line x1="1316.50" y1="671.10" x2="1316.50" y2="679.10" stroke="#000" stroke-width="1" />
<line x1="1336.50" y1="671.10" x2="1336.50" y2="679.10" stroke="#000" stroke-width="1" />
<line x1="1355.50" y1="671.10" x2="1355.50" y2="679.10" stroke="#000" stroke-width="1" />
<line x1="1375.50" y1="671.10" x2="1375.50" y2="679.10" stroke="#000" stroke-width="1" />
<line x1="1395.50" y1="671.10" x2="1395.50" y2="679.10" stroke="#000" stroke-width="1" />
<line x1="1414.50" y1="671.10" x2="1414.50" y2="679.10" stroke="#000" stroke-width="1" />
<line x1="1434.50" y1="671.10" x2="1434.50" y2="679.10" stroke="#000" stroke-width="1" />
<line x1="1454.50" y1="671.10" x2="1454.50" y2="679.10" stroke="#000" stroke-width="1" />
<line x1="1473.50" y1="671.10" x2="1473.50" y2="679.10" stroke="#000" stroke-width="1" />
<line x1="1493.50" y1="671.10" x2="1493.50" y2="679.10" stroke="#000" stroke-width="1" />
<line x1="1513.50" y1="671.10" x2="1513.50" y2="679.10" stroke="#000" stroke-width="1" />
<line x1="1532.50" y1="671.10" x2="1532.50" y2="679.10" stroke="#000" stroke-width="1" />
<line x1="1552.50" y1="671.10" x2="1552.50" y2="679.10" stroke="#000" stroke-width="1" />
<line x1="1572.50" y1="671.10" x2="1572.50" y2="679.10" stroke="#000" stroke-width="1" />
<text transform="translate(930.62,684.30) rotate(21)" font-size="7.0" fill="#000">PARIS_BR1D1</text>
<text transform="translate(950.27,684.30) rotate(21)" font-size="7.0" fill="#000">PARIS_BR1D2</text>
<text transform="translate(969.91,684.30) rotate(21)" font-size="7.0" fill="#000">PARIS_BR1D3</text>
<text transform="translate(989.55,684.30) rotate(21)" font-size="7.0" fill="#000">PARIS_BR1D4</text>
<text transform="translate(1009.20,684.30) rotate(21)" font-size="7.0" fill="#000">PARIS_BR1D5</text>
<text transform="translate(1028.84,684.30) rotate(21)" font-size="7.0" fill="#000">PARIS_BR1D6</text>
<text transform="translate(1048.49,684.30) rotate(21)" font-size="7.0" fill="#000">PARIS_BR1D7</text>
<text transform="translate(1068.13,684.30) rotate(21)" font-size="7.0" fill="#000">PARIS_BR1D8</text>
<text transform="translate(1087.78,684.30) rotate(21)" font-size="7.0" fill="#000">PARIS_BR2D1</text>
<text transform="translate(1107.42,684.30) rotate(21)" font-size="7.0" fill="#000">PARIS_BR2D2</text>
<text transform="translate(1127.06,684.30) rotate(21)" font-size="7.0" fill="#000">PARIS_BR2D3</text>
<text transform="translate(1146.71,684.30) rotate(21)" font-size="7.0" fill="#000">PARIS_BR2D4</text>
<text transform="translate(1166.35,684.30) rotate(21)" font-size="7.0" fill="#000">PARIS_BR2D5</text>
<text transform="translate(1186.00,684.30) rotate(21)" font-size="7.0" fill="#000">PARIS_BR2D6</text>
<text transform="translate(1205.64,684.30) rotate(21)" font-size="7.0" fill="#000">PARIS_BR2D7</text>
<text transform="translate(1225.28,684.30) rotate(21)" font-size="7.0" fill="#000">PARIS_BR2D9</text>
<text transform="translate(1244.93,684.30) rotate(21)" font-size="7.0" fill="#000">PARIS_BR2D10</text>
<text transform="translate(1264.57,684.30) rotate(21)" font-size="7.0" fill="#000">PARIS_BR2D11</text>
<text transform="translate(1284.22,684.30) rotate(21)" font-size="7.0" fill="#000">PARIS_BR2D12</text>
<text transform="translate(1303.86,684.30) rotate(21)" font-size="7.0" fill="#000">PARIS_BR2D13</text>
<text transform="translate(1323.50,684.30) rotate(21)" font-size="7.0" fill="#000">PARIS_BR2D14</text>
<text transform="translate(1343.15,684.30) rotate(21)" font-size="7.0" fill="#000">PARIS_BR2D15</text>
<text transform="translate(1362.79,684.30) rotate(21)" font-size="7.0" fill="#000">PARIS_BR2D16</text>
<text transform="translate(1382.44,684.30) rotate(21)" font-size="7.0" fill="#000">PARIS_BR3D1</text>
<text transform="translate(1402.08,684.30) rotate(21)" font-size="7.0" fill="#000">PARIS_BR3D2</text>
<text transform="translate(1421.73,684.30) rotate(21)" font-size="7.0" fill="#000">PARIS_BR3D3</text>
<text transform="translate(1441.37,684.30) rotate(21)" font-size="7.0" fill="#000">PARIS_BR3D4</text>
<text transform="translate(1461.01,684.30) rotate(21)" font-size="7.0" fill="#000">PARIS_BR3D5</text>
<text transform="translate(1480.66,684.30) rotate(21)" font-size="7.0" fill="#000">PARIS_BR3D6</text>
<text transform="translate(1500.30,684.30) rotate(21)" font-size="7.0" fill="#000">PARIS_BR3D7</text>
<text transform="translate(1519.95,684.30) rotate(21)" font-size="7.0" fill="#000">PARIS_BR3D9</text>
<text transform="translate(1539.59,684.30) rotate(21)" font-size="7.0" fill="#000">PARIS_BR3D10</text>
<text transform="translate(1559.23,684.30) rotate(21)" font-size="7.0" fill="#000">PARIS_BR3D11</text>
<text transform="translate(1578.88,684.30) rotate(21)" font-size="7.0" fill="#000">PARIS_BR3D12</text>
</g>
<rect x="844.90" y="413.00" width="2.60" height="14.50" fill="#000" />
<rect x="844.90" y="425.60" width="204.70" height="1.90" fill="#000" />
<rect x="847.50" y="410.00" width="205.70" height="15.60" fill="#f2f2f2" stroke="#000" stroke-width="1.1"/>
<text x="886.15" y="420.80" fill="#000" font-size="12.5" font-weight="bold" textLength="128.4" lengthAdjust="spacingAndGlyphs" >BPARIS_COUNTERS</text>
<rect x="1657.10" y="412.60" width="1.60" height="47.00" fill="#000" />
<rect x="1493.60" y="458.00" width="166.10" height="1.60" fill="#000" />
<rect x="1491.00" y="410.00" width="166.10" height="48.00" fill="#f2f2f2" stroke="#000" stroke-width="1.1"/>
<line x1="1491.00" y1="422.10" x2="1657.10" y2="422.10" stroke="#000" stroke-width="1.1" />
<text x="1503.70" y="418.60" fill="#000" font-size="9.2" font-weight="bold" textLength="140.7" lengthAdjust="spacingAndGlyphs" >BPARIS_COUNTERS_GRAPH</text>
<text x="1498.20" y="430.20" fill="#000" font-size="9.2" font-weight="bold" >Entries</text>
<text x="1647.60" y="430.20" fill="#000" font-size="9.2" font-weight="bold" text-anchor="end" >106038</text>
<text x="1498.20" y="442.50" fill="#000" font-size="9.2" font-weight="bold" >Mean</text>
<text x="1647.60" y="442.50" fill="#000" font-size="9.2" font-weight="bold" text-anchor="end" >0</text>
<text x="1498.20" y="454.30" fill="#000" font-size="9.2" font-weight="bold" >Std Dev</text>
<text x="1647.60" y="454.30" fill="#000" font-size="9.2" font-weight="bold" text-anchor="end" >0</text>
<clipPath id="pc4"><rect x="4.5" y="708.1" width="834.0" height="299.80000000000007"/></clipPath>
<g clip-path="url(#pc4)">
<rect x="90.51" y="830.91" width="19.20" height="147.79" fill="#ff0000" />
<rect x="90.51" y="830.91" width="1.92" height="147.79" fill="#ff3c3c" />
<rect x="107.79" y="830.91" width="1.92" height="147.79" fill="#a80000" />
<rect x="114.36" y="824.61" width="19.20" height="154.09" fill="#ff0000" />
<rect x="114.36" y="824.61" width="1.92" height="154.09" fill="#ff3c3c" />
<rect x="131.64" y="824.61" width="1.92" height="154.09" fill="#a80000" />
<rect x="138.22" y="839.63" width="19.20" height="139.07" fill="#ff0000" />
<rect x="138.22" y="839.63" width="1.92" height="139.07" fill="#ff3c3c" />
<rect x="155.50" y="839.63" width="1.92" height="139.07" fill="#a80000" />
<rect x="162.07" y="802.56" width="19.20" height="176.14" fill="#ff0000" />
<rect x="162.07" y="802.56" width="1.92" height="176.14" fill="#ff3c3c" />
<rect x="179.35" y="802.56" width="1.92" height="176.14" fill="#a80000" />
<rect x="185.92" y="795.54" width="19.20" height="183.16" fill="#ff0000" />
<rect x="185.92" y="795.54" width="1.92" height="183.16" fill="#ff3c3c" />
<rect x="203.20" y="795.54" width="1.92" height="183.16" fill="#a80000" />
<rect x="209.78" y="800.62" width="19.20" height="178.08" fill="#ff0000" />
<rect x="209.78" y="800.62" width="1.92" height="178.08" fill="#ff3c3c" />
<rect x="227.06" y="800.62" width="1.92" height="178.08" fill="#a80000" />
<rect x="233.63" y="824.61" width="19.20" height="154.09" fill="#ff0000" />
<rect x="233.63" y="824.61" width="1.92" height="154.09" fill="#ff3c3c" />
<rect x="250.91" y="824.61" width="1.92" height="154.09" fill="#a80000" />
<rect x="257.48" y="828.24" width="19.20" height="150.46" fill="#ff0000" />
<rect x="257.48" y="828.24" width="1.92" height="150.46" fill="#ff3c3c" />
<rect x="274.77" y="828.24" width="1.92" height="150.46" fill="#a80000" />
<rect x="281.34" y="806.44" width="19.20" height="172.26" fill="#ff0000" />
<rect x="281.34" y="806.44" width="1.92" height="172.26" fill="#ff3c3c" />
<rect x="298.62" y="806.44" width="1.92" height="172.26" fill="#a80000" />
<rect x="305.19" y="830.91" width="19.20" height="147.79" fill="#ff0000" />
<rect x="305.19" y="830.91" width="1.92" height="147.79" fill="#ff3c3c" />
<rect x="322.47" y="830.91" width="1.92" height="147.79" fill="#a80000" />
<rect x="329.04" y="839.63" width="19.20" height="139.07" fill="#ff0000" />
<rect x="329.04" y="839.63" width="1.92" height="139.07" fill="#ff3c3c" />
<rect x="346.33" y="839.63" width="1.92" height="139.07" fill="#a80000" />
<rect x="352.90" y="861.68" width="19.20" height="117.02" fill="#ff0000" />
<rect x="352.90" y="861.68" width="1.92" height="117.02" fill="#ff3c3c" />
<rect x="370.18" y="861.68" width="1.92" height="117.02" fill="#a80000" />
<rect x="376.75" y="839.63" width="19.20" height="139.07" fill="#ff0000" />
<rect x="376.75" y="839.63" width="1.92" height="139.07" fill="#ff3c3c" />
<rect x="394.03" y="839.63" width="1.92" height="139.07" fill="#a80000" />
<rect x="400.60" y="806.44" width="19.20" height="172.26" fill="#ff0000" />
<rect x="400.60" y="806.44" width="1.92" height="172.26" fill="#ff3c3c" />
<rect x="417.89" y="806.44" width="1.92" height="172.26" fill="#a80000" />
<rect x="424.46" y="808.38" width="19.20" height="170.32" fill="#ff0000" />
<rect x="424.46" y="808.38" width="1.92" height="170.32" fill="#ff3c3c" />
<rect x="441.74" y="808.38" width="1.92" height="170.32" fill="#a80000" />
<rect x="448.31" y="841.57" width="19.20" height="137.13" fill="#ff0000" />
<rect x="448.31" y="841.57" width="1.92" height="137.13" fill="#ff3c3c" />
<rect x="465.59" y="841.57" width="1.92" height="137.13" fill="#a80000" />
<rect x="472.17" y="804.26" width="19.20" height="174.44" fill="#ff0000" />
<rect x="472.17" y="804.26" width="1.92" height="174.44" fill="#ff3c3c" />
<rect x="489.45" y="804.26" width="1.92" height="174.44" fill="#a80000" />
<rect x="496.02" y="789.24" width="19.20" height="189.46" fill="#ff0000" />
<rect x="496.02" y="789.24" width="1.92" height="189.46" fill="#ff3c3c" />
<rect x="513.30" y="789.24" width="1.92" height="189.46" fill="#a80000" />
<rect x="519.87" y="771.55" width="19.20" height="207.15" fill="#ff0000" />
<rect x="519.87" y="771.55" width="1.92" height="207.15" fill="#ff3c3c" />
<rect x="537.15" y="771.55" width="1.92" height="207.15" fill="#a80000" />
<rect x="543.73" y="833.33" width="19.20" height="145.37" fill="#ff0000" />
<rect x="543.73" y="833.33" width="1.92" height="145.37" fill="#ff3c3c" />
<rect x="561.01" y="833.33" width="1.92" height="145.37" fill="#a80000" />
<rect x="567.58" y="861.68" width="19.20" height="117.02" fill="#ff0000" />
<rect x="567.58" y="861.68" width="1.92" height="117.02" fill="#ff3c3c" />
<rect x="584.86" y="861.68" width="1.92" height="117.02" fill="#a80000" />
<rect x="591.43" y="749.50" width="19.20" height="229.20" fill="#ff0000" />
<rect x="591.43" y="749.50" width="1.92" height="229.20" fill="#ff3c3c" />
<rect x="608.72" y="749.50" width="1.92" height="229.20" fill="#a80000" />
<rect x="615.29" y="782.21" width="19.20" height="196.49" fill="#ff0000" />
<rect x="615.29" y="782.21" width="1.92" height="196.49" fill="#ff3c3c" />
<rect x="632.57" y="782.21" width="1.92" height="196.49" fill="#a80000" />
<rect x="639.14" y="767.19" width="19.20" height="211.51" fill="#ff0000" />
<rect x="639.14" y="767.19" width="1.92" height="211.51" fill="#ff3c3c" />
<rect x="656.42" y="767.19" width="1.92" height="211.51" fill="#a80000" />
<rect x="662.99" y="797.72" width="19.20" height="180.98" fill="#ff0000" />
<rect x="662.99" y="797.72" width="1.92" height="180.98" fill="#ff3c3c" />
<rect x="680.28" y="797.72" width="1.92" height="180.98" fill="#a80000" />
<rect x="686.85" y="762.34" width="19.20" height="216.36" fill="#ff0000" />
<rect x="686.85" y="762.34" width="1.92" height="216.36" fill="#ff3c3c" />
<rect x="704.13" y="762.34" width="1.92" height="216.36" fill="#a80000" />
<rect x="710.70" y="791.42" width="19.20" height="187.28" fill="#ff0000" />
<rect x="710.70" y="791.42" width="1.92" height="187.28" fill="#ff3c3c" />
<rect x="727.98" y="791.42" width="1.92" height="187.28" fill="#a80000" />
<rect x="734.55" y="764.04" width="19.20" height="214.66" fill="#ff0000" />
<rect x="734.55" y="764.04" width="1.92" height="214.66" fill="#ff3c3c" />
<rect x="751.84" y="764.04" width="1.92" height="214.66" fill="#a80000" />
<text x="87.60" y="747.80" fill="#ff0000" font-size="14.3" font-weight="bold" textLength="9.2" lengthAdjust="spacingAndGlyphs" stroke="#ff0000" stroke-width="0.5">R</text>
<line x1="88.50" y1="738.50" x2="756.50" y2="738.50" stroke="#000" stroke-width="1" />
<line x1="756.50" y1="738.50" x2="756.50" y2="978.50" stroke="#000" stroke-width="1" />
<line x1="88.50" y1="738.50" x2="88.50" y2="979.00" stroke="#000" stroke-width="1.15" />
<line x1="88.00" y1="978.50" x2="757.00" y2="978.50" stroke="#000" stroke-width="1.15" />
<line x1="88.60" y1="978.50" x2="108.90" y2="978.50" stroke="#000" stroke-width="1" />
<text x="82.80" y="982.10" fill="#000" font-size="9.6" text-anchor="end" >0</text>
<line x1="88.60" y1="973.50" x2="98.90" y2="973.50" stroke="#000" stroke-width="1" />
<line x1="88.60" y1="969.50" x2="98.90" y2="969.50" stroke="#000" stroke-width="1" />
<line x1="88.60" y1="964.50" x2="98.90" y2="964.50" stroke="#000" stroke-width="1" />
<line x1="88.60" y1="959.50" x2="98.90" y2="959.50" stroke="#000" stroke-width="1" />
<line x1="88.60" y1="954.50" x2="108.90" y2="954.50" stroke="#000" stroke-width="1" />
<text x="82.80" y="957.87" fill="#000" font-size="9.6" text-anchor="end" >10</text>
<line x1="88.60" y1="949.50" x2="98.90" y2="949.50" stroke="#000" stroke-width="1" />
<line x1="88.60" y1="944.50" x2="98.90" y2="944.50" stroke="#000" stroke-width="1" />
<line x1="88.60" y1="939.50" x2="98.90" y2="939.50" stroke="#000" stroke-width="1" />
<line x1="88.60" y1="935.50" x2="98.90" y2="935.50" stroke="#000" stroke-width="1" />
<line x1="88.60" y1="930.50" x2="108.90" y2="930.50" stroke="#000" stroke-width="1" />
<text x="82.80" y="933.64" fill="#000" font-size="9.6" text-anchor="end" >20</text>
<line x1="88.60" y1="925.50" x2="98.90" y2="925.50" stroke="#000" stroke-width="1" />
<line x1="88.60" y1="920.50" x2="98.90" y2="920.50" stroke="#000" stroke-width="1" />
<line x1="88.60" y1="915.50" x2="98.90" y2="915.50" stroke="#000" stroke-width="1" />
<line x1="88.60" y1="910.50" x2="98.90" y2="910.50" stroke="#000" stroke-width="1" />
<line x1="88.60" y1="906.50" x2="108.90" y2="906.50" stroke="#000" stroke-width="1" />
<text x="82.80" y="909.42" fill="#000" font-size="9.6" text-anchor="end" >30</text>
<line x1="88.60" y1="901.50" x2="98.90" y2="901.50" stroke="#000" stroke-width="1" />
<line x1="88.60" y1="896.50" x2="98.90" y2="896.50" stroke="#000" stroke-width="1" />
<line x1="88.60" y1="891.50" x2="98.90" y2="891.50" stroke="#000" stroke-width="1" />
<line x1="88.60" y1="886.50" x2="98.90" y2="886.50" stroke="#000" stroke-width="1" />
<line x1="88.60" y1="881.50" x2="108.90" y2="881.50" stroke="#000" stroke-width="1" />
<text x="82.80" y="885.19" fill="#000" font-size="9.6" text-anchor="end" >40</text>
<line x1="88.60" y1="876.50" x2="98.90" y2="876.50" stroke="#000" stroke-width="1" />
<line x1="88.60" y1="872.50" x2="98.90" y2="872.50" stroke="#000" stroke-width="1" />
<line x1="88.60" y1="867.50" x2="98.90" y2="867.50" stroke="#000" stroke-width="1" />
<line x1="88.60" y1="862.50" x2="98.90" y2="862.50" stroke="#000" stroke-width="1" />
<line x1="88.60" y1="857.50" x2="108.90" y2="857.50" stroke="#000" stroke-width="1" />
<text x="82.80" y="860.96" fill="#000" font-size="9.6" text-anchor="end" >50</text>
<line x1="88.60" y1="852.50" x2="98.90" y2="852.50" stroke="#000" stroke-width="1" />
<line x1="88.60" y1="847.50" x2="98.90" y2="847.50" stroke="#000" stroke-width="1" />
<line x1="88.60" y1="843.50" x2="98.90" y2="843.50" stroke="#000" stroke-width="1" />
<line x1="88.60" y1="838.50" x2="98.90" y2="838.50" stroke="#000" stroke-width="1" />
<line x1="88.60" y1="833.50" x2="108.90" y2="833.50" stroke="#000" stroke-width="1" />
<text x="82.80" y="836.73" fill="#000" font-size="9.6" text-anchor="end" >60</text>
<line x1="88.60" y1="828.50" x2="98.90" y2="828.50" stroke="#000" stroke-width="1" />
<line x1="88.60" y1="823.50" x2="98.90" y2="823.50" stroke="#000" stroke-width="1" />
<line x1="88.60" y1="818.50" x2="98.90" y2="818.50" stroke="#000" stroke-width="1" />
<line x1="88.60" y1="813.50" x2="98.90" y2="813.50" stroke="#000" stroke-width="1" />
<line x1="88.60" y1="809.50" x2="108.90" y2="809.50" stroke="#000" stroke-width="1" />
<text x="82.80" y="812.50" fill="#000" font-size="9.6" text-anchor="end" >70</text>
<line x1="88.60" y1="804.50" x2="98.90" y2="804.50" stroke="#000" stroke-width="1" />
<line x1="88.60" y1="799.50" x2="98.90" y2="799.50" stroke="#000" stroke-width="1" />
<line x1="88.60" y1="794.50" x2="98.90" y2="794.50" stroke="#000" stroke-width="1" />
<line x1="88.60" y1="789.50" x2="98.90" y2="789.50" stroke="#000" stroke-width="1" />
<line x1="88.60" y1="784.50" x2="108.90" y2="784.50" stroke="#000" stroke-width="1" />
<text x="82.80" y="788.28" fill="#000" font-size="9.6" text-anchor="end" >80</text>
<line x1="88.60" y1="780.50" x2="98.90" y2="780.50" stroke="#000" stroke-width="1" />
<line x1="88.60" y1="775.50" x2="98.90" y2="775.50" stroke="#000" stroke-width="1" />
<line x1="88.60" y1="770.50" x2="98.90" y2="770.50" stroke="#000" stroke-width="1" />
<line x1="88.60" y1="765.50" x2="98.90" y2="765.50" stroke="#000" stroke-width="1" />
<line x1="88.60" y1="760.50" x2="108.90" y2="760.50" stroke="#000" stroke-width="1" />
<text x="82.80" y="764.05" fill="#000" font-size="9.6" text-anchor="end" >90</text>
<line x1="88.60" y1="755.50" x2="98.90" y2="755.50" stroke="#000" stroke-width="1" />
<line x1="88.60" y1="750.50" x2="98.90" y2="750.50" stroke="#000" stroke-width="1" />
<line x1="88.60" y1="746.50" x2="98.90" y2="746.50" stroke="#000" stroke-width="1" />
<line x1="88.60" y1="741.50" x2="98.90" y2="741.50" stroke="#000" stroke-width="1" />
<line x1="112.50" y1="970.70" x2="112.50" y2="978.70" stroke="#000" stroke-width="1" />
<line x1="136.50" y1="970.70" x2="136.50" y2="978.70" stroke="#000" stroke-width="1" />
<line x1="160.50" y1="970.70" x2="160.50" y2="978.70" stroke="#000" stroke-width="1" />
<line x1="184.50" y1="970.70" x2="184.50" y2="978.70" stroke="#000" stroke-width="1" />
<line x1="207.50" y1="970.70" x2="207.50" y2="978.70" stroke="#000" stroke-width="1" />
<line x1="231.50" y1="970.70" x2="231.50" y2="978.70" stroke="#000" stroke-width="1" />
<line x1="255.50" y1="970.70" x2="255.50" y2="978.70" stroke="#000" stroke-width="1" />
<line x1="279.50" y1="970.70" x2="279.50" y2="978.70" stroke="#000" stroke-width="1" />
<line x1="303.50" y1="970.70" x2="303.50" y2="978.70" stroke="#000" stroke-width="1" />
<line x1="327.50" y1="970.70" x2="327.50" y2="978.70" stroke="#000" stroke-width="1" />
<line x1="350.50" y1="970.70" x2="350.50" y2="978.70" stroke="#000" stroke-width="1" />
<line x1="374.50" y1="970.70" x2="374.50" y2="978.70" stroke="#000" stroke-width="1" />
<line x1="398.50" y1="970.70" x2="398.50" y2="978.70" stroke="#000" stroke-width="1" />
<line x1="422.50" y1="970.70" x2="422.50" y2="978.70" stroke="#000" stroke-width="1" />
<line x1="446.50" y1="970.70" x2="446.50" y2="978.70" stroke="#000" stroke-width="1" />
<line x1="470.50" y1="970.70" x2="470.50" y2="978.70" stroke="#000" stroke-width="1" />
<line x1="494.50" y1="970.70" x2="494.50" y2="978.70" stroke="#000" stroke-width="1" />
<line x1="517.50" y1="970.70" x2="517.50" y2="978.70" stroke="#000" stroke-width="1" />
<line x1="541.50" y1="970.70" x2="541.50" y2="978.70" stroke="#000" stroke-width="1" />
<line x1="565.50" y1="970.70" x2="565.50" y2="978.70" stroke="#000" stroke-width="1" />
<line x1="589.50" y1="970.70" x2="589.50" y2="978.70" stroke="#000" stroke-width="1" />
<line x1="613.50" y1="970.70" x2="613.50" y2="978.70" stroke="#000" stroke-width="1" />
<line x1="637.50" y1="970.70" x2="637.50" y2="978.70" stroke="#000" stroke-width="1" />
<line x1="661.50" y1="970.70" x2="661.50" y2="978.70" stroke="#000" stroke-width="1" />
<line x1="684.50" y1="970.70" x2="684.50" y2="978.70" stroke="#000" stroke-width="1" />
<line x1="708.50" y1="970.70" x2="708.50" y2="978.70" stroke="#000" stroke-width="1" />
<line x1="732.50" y1="970.70" x2="732.50" y2="978.70" stroke="#000" stroke-width="1" />
<text transform="translate(97.53,983.90) rotate(21)" font-size="7.0" fill="#000">S1_0_DSSD</text>
<text transform="translate(121.38,983.90) rotate(21)" font-size="7.0" fill="#000">S1_1_DSSD</text>
<text transform="translate(145.23,983.90) rotate(21)" font-size="7.0" fill="#000">S1_2_DSSD</text>
<text transform="translate(169.09,983.90) rotate(21)" font-size="7.0" fill="#000">S1_3_DSSD</text>
<text transform="translate(192.94,983.90) rotate(21)" font-size="7.0" fill="#000">S1_4_DSSD</text>
<text transform="translate(216.79,983.90) rotate(21)" font-size="7.0" fill="#000">S1_5_DSSD</text>
<text transform="translate(240.65,983.90) rotate(21)" font-size="7.0" fill="#000">S1_6_DSSD</text>
<text transform="translate(264.50,983.90) rotate(21)" font-size="7.0" fill="#000">S1_7_DSSD</text>
<text transform="translate(288.36,983.90) rotate(21)" font-size="7.0" fill="#000">S1_8_DSSD</text>
<text transform="translate(312.21,983.90) rotate(21)" font-size="7.0" fill="#000">S1_9_DSSD</text>
<text transform="translate(336.06,983.90) rotate(21)" font-size="7.0" fill="#000">S1_10_DSSD</text>
<text transform="translate(359.92,983.90) rotate(21)" font-size="7.0" fill="#000">S1_11_DSSD</text>
<text transform="translate(383.77,983.90) rotate(21)" font-size="7.0" fill="#000">S1_12_DSSD</text>
<text transform="translate(407.62,983.90) rotate(21)" font-size="7.0" fill="#000">S1_13_DSSD</text>
<text transform="translate(431.48,983.90) rotate(21)" font-size="7.0" fill="#000">S1_14_DSSD</text>
<text transform="translate(455.33,983.90) rotate(21)" font-size="7.0" fill="#000">S1_15_DSSD</text>
<text transform="translate(479.18,983.90) rotate(21)" font-size="7.0" fill="#000">S2_1_DSSD</text>
<text transform="translate(503.04,983.90) rotate(21)" font-size="7.0" fill="#000">S2_2_DSSD</text>
<text transform="translate(526.89,983.90) rotate(21)" font-size="7.0" fill="#000">S2_5_DSSD</text>
<text transform="translate(550.74,983.90) rotate(21)" font-size="7.0" fill="#000">S2_6_DSSD</text>
<text transform="translate(574.60,983.90) rotate(21)" font-size="7.0" fill="#000">S2_8_DSSD</text>
<text transform="translate(598.45,983.90) rotate(21)" font-size="7.0" fill="#000">S2_9_DSSD</text>
<text transform="translate(622.31,983.90) rotate(21)" font-size="7.0" fill="#000">S2_10_DSSD</text>
<text transform="translate(646.16,983.90) rotate(21)" font-size="7.0" fill="#000">S2_11_DSSD</text>
<text transform="translate(670.01,983.90) rotate(21)" font-size="7.0" fill="#000">S2_12_DSSD</text>
<text transform="translate(693.87,983.90) rotate(21)" font-size="7.0" fill="#000">S2_13_DSSD</text>
<text transform="translate(717.72,983.90) rotate(21)" font-size="7.0" fill="#000">S2_14_DSSD</text>
<text transform="translate(741.57,983.90) rotate(21)" font-size="7.0" fill="#000">S2_15_DSSD</text>
</g>
<rect x="11.00" y="712.60" width="2.60" height="14.50" fill="#000" />
<rect x="11.00" y="725.20" width="209.00" height="1.90" fill="#000" />
<rect x="13.60" y="709.60" width="210.00" height="15.60" fill="#f2f2f2" stroke="#000" stroke-width="1.1"/>
<text x="52.60" y="720.40" fill="#000" font-size="12.5" font-weight="bold" textLength="132.0" lengthAdjust="spacingAndGlyphs" >S_DSSD_COUNTERS</text>
<rect x="822.50" y="712.20" width="1.60" height="47.00" fill="#000" />
<rect x="659.00" y="757.60" width="166.10" height="1.60" fill="#000" />
<rect x="656.40" y="709.60" width="166.10" height="48.00" fill="#f2f2f2" stroke="#000" stroke-width="1.1"/>
<line x1="656.40" y1="721.70" x2="822.50" y2="721.70" stroke="#000" stroke-width="1.1" />
<text x="668.05" y="718.20" fill="#000" font-size="9.2" font-weight="bold" textLength="142.8" lengthAdjust="spacingAndGlyphs" >S_DSSD_COUNTERS_GRAPH</text>
<text x="663.60" y="729.80" fill="#000" font-size="9.2" font-weight="bold" >Entries</text>
<text x="813.00" y="729.80" fill="#000" font-size="9.2" font-weight="bold" text-anchor="end" >80484</text>
<text x="663.60" y="742.10" fill="#000" font-size="9.2" font-weight="bold" >Mean</text>
<text x="813.00" y="742.10" fill="#000" font-size="9.2" font-weight="bold" text-anchor="end" >0</text>
<text x="663.60" y="753.90" fill="#000" font-size="9.2" font-weight="bold" >Std Dev</text>
<text x="813.00" y="753.90" fill="#000" font-size="9.2" font-weight="bold" text-anchor="end" >0</text>
<clipPath id="pc5"><rect x="839.5" y="708.1" width="834.0" height="299.80000000000007"/></clipPath>
<g clip-path="url(#pc5)">
<rect x="927.36" y="904.69" width="35.84" height="74.01" fill="#ff0000" />
<rect x="927.36" y="904.69" width="3.58" height="74.01" fill="#ff3c3c" />
<rect x="959.62" y="904.69" width="3.58" height="74.01" fill="#a80000" />
<rect x="971.89" y="920.91" width="35.84" height="57.79" fill="#ff0000" />
<rect x="971.89" y="920.91" width="3.58" height="57.79" fill="#ff3c3c" />
<rect x="1004.15" y="920.91" width="3.58" height="57.79" fill="#a80000" />
<rect x="1016.42" y="885.92" width="35.84" height="92.78" fill="#ff0000" />
<rect x="1016.42" y="885.92" width="3.58" height="92.78" fill="#ff3c3c" />
<rect x="1048.68" y="885.92" width="3.58" height="92.78" fill="#a80000" />
<rect x="1060.94" y="796.18" width="35.84" height="182.52" fill="#ff0000" />
<rect x="1060.94" y="796.18" width="3.58" height="182.52" fill="#ff3c3c" />
<rect x="1093.20" y="796.18" width="3.58" height="182.52" fill="#a80000" />
<rect x="1150.00" y="749.22" width="35.84" height="229.48" fill="#ff0000" />
<rect x="1150.00" y="749.22" width="3.58" height="229.48" fill="#ff3c3c" />
<rect x="1182.26" y="749.22" width="3.58" height="229.48" fill="#a80000" />
<rect x="1194.52" y="823.17" width="35.84" height="155.53" fill="#ff0000" />
<rect x="1194.52" y="823.17" width="3.58" height="155.53" fill="#ff3c3c" />
<rect x="1226.78" y="823.17" width="3.58" height="155.53" fill="#a80000" />
<rect x="1239.05" y="889.74" width="35.84" height="88.96" fill="#ff0000" />
<rect x="1239.05" y="889.74" width="3.58" height="88.96" fill="#ff3c3c" />
<rect x="1271.31" y="889.74" width="3.58" height="88.96" fill="#a80000" />
<rect x="1283.58" y="856.45" width="35.84" height="122.25" fill="#ff0000" />
<rect x="1283.58" y="856.45" width="3.58" height="122.25" fill="#ff3c3c" />
<rect x="1315.84" y="856.45" width="3.58" height="122.25" fill="#a80000" />
<rect x="1328.10" y="845.19" width="35.84" height="133.51" fill="#ff0000" />
<rect x="1328.10" y="845.19" width="3.58" height="133.51" fill="#ff3c3c" />
<rect x="1360.36" y="845.19" width="3.58" height="133.51" fill="#a80000" />
<rect x="1372.63" y="850.65" width="35.84" height="128.05" fill="#ff0000" />
<rect x="1372.63" y="850.65" width="3.58" height="128.05" fill="#ff3c3c" />
<rect x="1404.89" y="850.65" width="3.58" height="128.05" fill="#a80000" />
<rect x="1417.16" y="889.74" width="35.84" height="88.96" fill="#ff0000" />
<rect x="1417.16" y="889.74" width="3.58" height="88.96" fill="#ff3c3c" />
<rect x="1449.42" y="889.74" width="3.58" height="88.96" fill="#a80000" />
<rect x="1461.68" y="890.95" width="35.84" height="87.75" fill="#ff0000" />
<rect x="1461.68" y="890.95" width="3.58" height="87.75" fill="#ff3c3c" />
<rect x="1493.94" y="890.95" width="3.58" height="87.75" fill="#a80000" />
<rect x="1506.21" y="892.65" width="35.84" height="86.05" fill="#ff0000" />
<rect x="1506.21" y="892.65" width="3.58" height="86.05" fill="#ff3c3c" />
<rect x="1538.47" y="892.65" width="3.58" height="86.05" fill="#a80000" />
<rect x="1550.74" y="828.55" width="35.84" height="150.15" fill="#ff0000" />
<rect x="1550.74" y="828.55" width="3.58" height="150.15" fill="#ff3c3c" />
<rect x="1583.00" y="828.55" width="3.58" height="150.15" fill="#a80000" />
<text x="922.80" y="747.80" fill="#ff0000" font-size="14.3" font-weight="bold" textLength="9.2" lengthAdjust="spacingAndGlyphs" stroke="#ff0000" stroke-width="0.5">R</text>
<line x1="923.50" y1="738.50" x2="1591.50" y2="738.50" stroke="#000" stroke-width="1" />
<line x1="1591.50" y1="738.50" x2="1591.50" y2="978.50" stroke="#000" stroke-width="1" />
<line x1="923.50" y1="738.50" x2="923.50" y2="979.00" stroke="#000" stroke-width="1.15" />
<line x1="923.00" y1="978.50" x2="1592.00" y2="978.50" stroke="#000" stroke-width="1.15" />
<line x1="923.80" y1="978.50" x2="944.10" y2="978.50" stroke="#000" stroke-width="1" />
<text x="918.00" y="982.10" fill="#000" font-size="9.6" text-anchor="end" >0</text>
<line x1="923.80" y1="971.50" x2="934.10" y2="971.50" stroke="#000" stroke-width="1" />
<line x1="923.80" y1="964.50" x2="934.10" y2="964.50" stroke="#000" stroke-width="1" />
<line x1="923.80" y1="957.50" x2="934.10" y2="957.50" stroke="#000" stroke-width="1" />
<line x1="923.80" y1="950.50" x2="934.10" y2="950.50" stroke="#000" stroke-width="1" />
<line x1="923.80" y1="943.50" x2="944.10" y2="943.50" stroke="#000" stroke-width="1" />
<text x="918.00" y="946.69" fill="#000" font-size="9.6" text-anchor="end" >50</text>
<line x1="923.80" y1="936.50" x2="934.10" y2="936.50" stroke="#000" stroke-width="1" />
<line x1="923.80" y1="929.50" x2="934.10" y2="929.50" stroke="#000" stroke-width="1" />
<line x1="923.80" y1="922.50" x2="934.10" y2="922.50" stroke="#000" stroke-width="1" />
<line x1="923.80" y1="914.50" x2="934.10" y2="914.50" stroke="#000" stroke-width="1" />
<line x1="923.80" y1="907.50" x2="944.10" y2="907.50" stroke="#000" stroke-width="1" />
<text x="918.00" y="911.27" fill="#000" font-size="9.6" text-anchor="end" >100</text>
<line x1="923.80" y1="900.50" x2="934.10" y2="900.50" stroke="#000" stroke-width="1" />
<line x1="923.80" y1="893.50" x2="934.10" y2="893.50" stroke="#000" stroke-width="1" />
<line x1="923.80" y1="886.50" x2="934.10" y2="886.50" stroke="#000" stroke-width="1" />
<line x1="923.80" y1="879.50" x2="934.10" y2="879.50" stroke="#000" stroke-width="1" />
<line x1="923.80" y1="872.50" x2="944.10" y2="872.50" stroke="#000" stroke-width="1" />
<text x="918.00" y="875.86" fill="#000" font-size="9.6" text-anchor="end" >150</text>
<line x1="923.80" y1="865.50" x2="934.10" y2="865.50" stroke="#000" stroke-width="1" />
<line x1="923.80" y1="858.50" x2="934.10" y2="858.50" stroke="#000" stroke-width="1" />
<line x1="923.80" y1="851.50" x2="934.10" y2="851.50" stroke="#000" stroke-width="1" />
<line x1="923.80" y1="844.50" x2="934.10" y2="844.50" stroke="#000" stroke-width="1" />
<line x1="923.80" y1="837.50" x2="944.10" y2="837.50" stroke="#000" stroke-width="1" />
<text x="918.00" y="840.45" fill="#000" font-size="9.6" text-anchor="end" >200</text>
<line x1="923.80" y1="829.50" x2="934.10" y2="829.50" stroke="#000" stroke-width="1" />
<line x1="923.80" y1="822.50" x2="934.10" y2="822.50" stroke="#000" stroke-width="1" />
<line x1="923.80" y1="815.50" x2="934.10" y2="815.50" stroke="#000" stroke-width="1" />
<line x1="923.80" y1="808.50" x2="934.10" y2="808.50" stroke="#000" stroke-width="1" />
<line x1="923.80" y1="801.50" x2="944.10" y2="801.50" stroke="#000" stroke-width="1" />
<text x="918.00" y="805.04" fill="#000" font-size="9.6" text-anchor="end" >250</text>
<line x1="923.80" y1="794.50" x2="934.10" y2="794.50" stroke="#000" stroke-width="1" />
<line x1="923.80" y1="787.50" x2="934.10" y2="787.50" stroke="#000" stroke-width="1" />
<line x1="923.80" y1="780.50" x2="934.10" y2="780.50" stroke="#000" stroke-width="1" />
<line x1="923.80" y1="773.50" x2="934.10" y2="773.50" stroke="#000" stroke-width="1" />
<line x1="923.80" y1="766.50" x2="944.10" y2="766.50" stroke="#000" stroke-width="1" />
<text x="918.00" y="769.62" fill="#000" font-size="9.6" text-anchor="end" >300</text>
<line x1="923.80" y1="759.50" x2="934.10" y2="759.50" stroke="#000" stroke-width="1" />
<line x1="923.80" y1="752.50" x2="934.10" y2="752.50" stroke="#000" stroke-width="1" />
<line x1="923.80" y1="744.50" x2="934.10" y2="744.50" stroke="#000" stroke-width="1" />
<line x1="968.50" y1="970.70" x2="968.50" y2="978.70" stroke="#000" stroke-width="1" />
<line x1="1012.50" y1="970.70" x2="1012.50" y2="978.70" stroke="#000" stroke-width="1" />
<line x1="1057.50" y1="970.70" x2="1057.50" y2="978.70" stroke="#000" stroke-width="1" />
<line x1="1101.50" y1="970.70" x2="1101.50" y2="978.70" stroke="#000" stroke-width="1" />
<line x1="1146.50" y1="970.70" x2="1146.50" y2="978.70" stroke="#000" stroke-width="1" />
<line x1="1190.50" y1="970.70" x2="1190.50" y2="978.70" stroke="#000" stroke-width="1" />
<line x1="1235.50" y1="970.70" x2="1235.50" y2="978.70" stroke="#000" stroke-width="1" />
<line x1="1280.50" y1="970.70" x2="1280.50" y2="978.70" stroke="#000" stroke-width="1" />
<line x1="1324.50" y1="970.70" x2="1324.50" y2="978.70" stroke="#000" stroke-width="1" />
<line x1="1369.50" y1="970.70" x2="1369.50" y2="978.70" stroke="#000" stroke-width="1" />
<line x1="1413.50" y1="970.70" x2="1413.50" y2="978.70" stroke="#000" stroke-width="1" />
<line x1="1458.50" y1="970.70" x2="1458.50" y2="978.70" stroke="#000" stroke-width="1" />
<line x1="1502.50" y1="970.70" x2="1502.50" y2="978.70" stroke="#000" stroke-width="1" />
<line x1="1547.50" y1="970.70" x2="1547.50" y2="978.70" stroke="#000" stroke-width="1" />
<text x="946.06" y="988.00" fill="#000" font-size="6.8" text-anchor="middle" >R_0_DSSD</text>
<text x="990.59" y="988.00" fill="#000" font-size="6.8" text-anchor="middle" >R_1_DSSD</text>
<text x="1035.12" y="988.00" fill="#000" font-size="6.8" text-anchor="middle" >R_2_DSSD</text>
<text x="1079.64" y="988.00" fill="#000" font-size="6.8" text-anchor="middle" >R_3_DSSD</text>
<text x="1124.17" y="988.00" fill="#000" font-size="6.8" text-anchor="middle" >R_4_DSSD</text>
<text x="1168.70" y="988.00" fill="#000" font-size="6.8" text-anchor="middle" >R_5_DSSD</text>
<text x="1213.22" y="988.00" fill="#000" font-size="6.8" text-anchor="middle" >R_6_DSSD</text>
<text x="1257.75" y="988.00" fill="#000" font-size="6.8" text-anchor="middle" >R_7_DSSD</text>
<text x="1302.28" y="988.00" fill="#000" font-size="6.8" text-anchor="middle" >R_8_DSSD</text>
<text x="1346.80" y="988.00" fill="#000" font-size="6.8" text-anchor="middle" >R_9_DSSD</text>
<text x="1391.33" y="988.00" fill="#000" font-size="6.8" text-anchor="middle" >R_10_DSSD</text>
<text x="1435.86" y="988.00" fill="#000" font-size="6.8" text-anchor="middle" >R_11_DSSD</text>
<text x="1480.38" y="988.00" fill="#000" font-size="6.8" text-anchor="middle" >R_12_DSSD</text>
<text x="1524.91" y="988.00" fill="#000" font-size="6.8" text-anchor="middle" >R_13_DSSD</text>
<text x="1569.44" y="988.00" fill="#000" font-size="6.8" text-anchor="middle" >R_14_DSSD</text>
</g>
<rect x="844.90" y="712.60" width="2.60" height="14.50" fill="#000" />
<rect x="844.90" y="725.20" width="210.00" height="1.90" fill="#000" />
<rect x="847.50" y="709.60" width="211.00" height="15.60" fill="#f2f2f2" stroke="#000" stroke-width="1.1"/>
<text x="886.75" y="720.40" fill="#000" font-size="12.5" font-weight="bold" textLength="132.5" lengthAdjust="spacingAndGlyphs" >R_DSSD_COUNTERS</text>
<rect x="1657.10" y="712.20" width="1.60" height="47.00" fill="#000" />
<rect x="1493.60" y="757.60" width="166.10" height="1.60" fill="#000" />
<rect x="1491.00" y="709.60" width="166.10" height="48.00" fill="#f2f2f2" stroke="#000" stroke-width="1.1"/>
<line x1="1491.00" y1="721.70" x2="1657.10" y2="721.70" stroke="#000" stroke-width="1.1" />
<text x="1502.35" y="718.20" fill="#000" font-size="9.2" font-weight="bold" textLength="143.4" lengthAdjust="spacingAndGlyphs" >R_DSSD_COUNTERS_GRAPH</text>
<text x="1498.20" y="729.80" fill="#000" font-size="9.2" font-weight="bold" >Entries</text>
<text x="1647.60" y="729.80" fill="#000" font-size="9.2" font-weight="bold" text-anchor="end" >43101</text>
<text x="1498.20" y="742.10" fill="#000" font-size="9.2" font-weight="bold" >Mean</text>
<text x="1647.60" y="742.10" fill="#000" font-size="9.2" font-weight="bold" text-anchor="end" >0</text>
<text x="1498.20" y="753.90" fill="#000" font-size="9.2" font-weight="bold" >Std Dev</text>
<text x="1647.60" y="753.90" fill="#000" font-size="9.2" font-weight="bold" text-anchor="end" >0</text>
<line x1="1674.50" y1="108.50" x2="1674.50" y2="1009.80" stroke="#cc0000" stroke-width="1.2" />
<line x1="4.50" y1="1009.30" x2="1675.00" y2="1009.30" stroke="#cc0000" stroke-width="1.2" />
<line x1="3.00" y1="1011.50" x2="1677.00" y2="1011.50" stroke="#ffff00" stroke-width="1.3" />
<line x1="1.00" y1="1013.50" x2="1678.00" y2="1013.50" stroke="#9a9a9a" stroke-width="1" />
<line x1="3.00" y1="1016.30" x2="501.00" y2="1016.30" stroke="#8c8c8c" stroke-width="1" />
<line x1="3.50" y1="1016.00" x2="3.50" y2="1031.00" stroke="#8c8c8c" stroke-width="1" />
<line x1="3.00" y1="1030.80" x2="501.00" y2="1030.80" stroke="#ffffff" stroke-width="1" />
<line x1="500.50" y1="1016.00" x2="500.50" y2="1031.00" stroke="#ffffff" stroke-width="1" />
<line x1="504.00" y1="1016.30" x2="836.00" y2="1016.30" stroke="#8c8c8c" stroke-width="1" />
<line x1="504.50" y1="1016.00" x2="504.50" y2="1031.00" stroke="#8c8c8c" stroke-width="1" />
<line x1="504.00" y1="1030.80" x2="836.00" y2="1030.80" stroke="#ffffff" stroke-width="1" />
<line x1="835.50" y1="1016.00" x2="835.50" y2="1031.00" stroke="#ffffff" stroke-width="1" />
<line x1="838.60" y1="1016.30" x2="1004.80" y2="1016.30" stroke="#8c8c8c" stroke-width="1" />
<line x1="839.10" y1="1016.00" x2="839.10" y2="1031.00" stroke="#8c8c8c" stroke-width="1" />
<line x1="838.60" y1="1030.80" x2="1004.80" y2="1030.80" stroke="#ffffff" stroke-width="1" />
<line x1="1004.30" y1="1016.00" x2="1004.30" y2="1031.00" stroke="#ffffff" stroke-width="1" />
<line x1="1006.50" y1="1016.30" x2="1672.00" y2="1016.30" stroke="#8c8c8c" stroke-width="1" />
<line x1="1007.00" y1="1016.00" x2="1007.00" y2="1031.00" stroke="#8c8c8c" stroke-width="1" />
<line x1="1006.50" y1="1030.80" x2="1672.00" y2="1030.80" stroke="#ffffff" stroke-width="1" />
<line x1="1671.50" y1="1016.00" x2="1671.50" y2="1031.00" stroke="#ffffff" stroke-width="1" />
<text x="6.30" y="1026.00" fill="#1a1a1a" font-size="11.5" textLength="89.0" lengthAdjust="spacingAndGlyphs" >Pad graphics frame</text>
<text x="509.00" y="1026.00" fill="#1a1a1a" font-size="11.5" textLength="34.5" lengthAdjust="spacingAndGlyphs" >TFrame</text>
<text x="843.80" y="1026.00" fill="#1a1a1a" font-size="11.5" textLength="30.5" lengthAdjust="spacingAndGlyphs" >631,-2</text>
<line x1="1666.00" y1="1030.00" x2="1676.00" y2="1020.00" stroke="#9a9a9a" stroke-width="1" shape-rendering="geometricPrecision"/>
<line x1="1669.50" y1="1030.00" x2="1676.00" y2="1023.50" stroke="#9a9a9a" stroke-width="1" shape-rendering="geometricPrecision"/>
<line x1="1673.00" y1="1030.00" x2="1676.00" y2="1027.00" stroke="#9a9a9a" stroke-width="1" shape-rendering="geometricPrecision"/>
<rect x="0.00" y="1033.80" width="1678.00" height="15.00" fill="#ff6666" />
<line x1="0.00" y1="1032.80" x2="1678.00" y2="1032.80" stroke="#f0f0f0" stroke-width="1" />
<rect x="2.00" y="1035.20" width="13.00" height="12.50" fill="#ffffff" />
<path d="M2.6 1047.5 V1035.8 H14.5" fill="none" stroke="#222" stroke-width="1.2"/>
<path d="M5 1041.5 L7.8 1044.6 L12.2 1038" fill="none" stroke="#000" stroke-width="1.8" shape-rendering="geometricPrecision"/>
<text x="189.00" y="1043.50" fill="#1a1a1a" font-size="12.5" textLength="355.4" lengthAdjust="spacingAndGlyphs" >SPECIAL MODE : only OSCILLOS and COUNTERS are refreshed</text>
<rect x="0.00" y="1050.00" width="1680.00" height="30.00" fill="#000000" />
<defs><radialGradient id="ffg" cx="0.72" cy="0.12" r="0.95"><stop offset="0" stop-color="#fff44f"/><stop offset="0.3" stop-color="#ffbd2e"/><stop offset="0.55" stop-color="#ff7a1a"/><stop offset="0.8" stop-color="#ff3b5c"/><stop offset="1" stop-color="#f0157a"/></radialGradient><linearGradient id="ffp" x1="0" y1="0" x2="1" y2="1"><stop offset="0" stop-color="#b833e1"/><stop offset="1" stop-color="#3a50e0"/></linearGradient><symbol id="ffx" viewBox="0 0 16 16"><g shape-rendering="geometricPrecision"><circle cx="8" cy="9.2" r="7" fill="url(#ffg)"/><path d="M9.2 1.2 Q13.5 3.5 14.6 8 L10.5 7.5 Z" fill="#ffd93b"/><circle cx="7.6" cy="8.6" r="3.3" fill="url(#ffp)"/><path d="M2.2 5.6 L3.2 3.8 L4.3 5 L5.3 3.9 L6.2 5.6 L8.6 7.4 L6 8.6 L3.4 7.8 Z" fill="#ff9a1a"/></g></symbol></defs>
<rect x="1680.00" y="0.00" width="1920.00" height="24.00" fill="#f6f6f6" />
<circle cx="1695.5" cy="11.5" r="5.6" fill="none" stroke="#333" stroke-width="2.6" shape-rendering="geometricPrecision"/>
<circle cx="1695.5" cy="11.5" r="2" fill="#333" shape-rendering="geometricPrecision"/>
<text x="1709.50" y="16.80" fill="#3c3c3c" font-size="13.5" textLength="83.5" lengthAdjust="spacingAndGlyphs" >Applications</text>
<text x="1810.00" y="16.80" fill="#3c3c3c" font-size="13.5" textLength="71.0" lengthAdjust="spacingAndGlyphs" >Raccourcis</text>
<rect x="1897" y="6" width="17" height="14" rx="1" fill="#2a2838" shape-rendering="geometricPrecision"/>
<path d="M1899 13.5 H1903 L1904.5 9 L1906.5 17.5 L1908 13.5 H1912" stroke="#c8b040" stroke-width="0.9" fill="none" shape-rendering="geometricPrecision"/>
<line x1="1915.00" y1="7.00" x2="1917.00" y2="7.00" stroke="#aaa" stroke-width="0.6" />
<line x1="1915.00" y1="9.50" x2="1917.00" y2="9.50" stroke="#aaa" stroke-width="0.6" />
<line x1="1915.00" y1="12.00" x2="1917.00" y2="12.00" stroke="#aaa" stroke-width="0.6" />
<line x1="1915.00" y1="14.50" x2="1917.00" y2="14.50" stroke="#aaa" stroke-width="0.6" />
<use href="#ffx" x="1929.5" y="0.5" width="23" height="23"/>
<rect x="1965.00" y="4.00" width="16.00" height="18.50" fill="#fafafa" stroke="#999" stroke-width="0.8"/>
<line x1="1964.50" y1="4.20" x2="1986.00" y2="4.20" stroke="#888" stroke-width="1" />
<line x1="1968.00" y1="7.50" x2="1975.00" y2="7.50" stroke="#555" stroke-width="0.7" />
<line x1="1968.00" y1="10.50" x2="1975.00" y2="10.50" stroke="#555" stroke-width="0.7" />
<line x1="1968.00" y1="13.50" x2="1975.00" y2="13.50" stroke="#555" stroke-width="0.7" />
<line x1="1968.00" y1="16.50" x2="1975.00" y2="16.50" stroke="#555" stroke-width="0.7" />
<rect x="1965.50" y="18.20" width="15.00" height="2.40" fill="#e8582a" />
<path d="M1973.5 19.5 L1986 7.5" stroke="#2a2a2a" stroke-width="2.6" shape-rendering="geometricPrecision"/><path d="M1985 6.5 L1987 8.5" stroke="#e090d0" stroke-width="2.6" shape-rendering="geometricPrecision"/>
<rect x="1999" y="6" width="20" height="13.5" rx="1" fill="#3a8fd0" stroke="#444" stroke-width="0.6" shape-rendering="geometricPrecision"/>
<path d="M2006 15 V11.5 Q2008.5 9 2011 11.5 V15 Z" fill="#dff" shape-rendering="geometricPrecision"/>
<rect x="2035" y="2" width="16" height="20" rx="2" fill="#3a3a3a" shape-rendering="geometricPrecision"/>
<rect x="2037.00" y="4.00" width="12.00" height="5.00" fill="#6cc080" />
<circle cx="2038.7" cy="13.2" r="1.4" fill="#aaa" shape-rendering="geometricPrecision"/>
<circle cx="2042.5" cy="13.2" r="1.4" fill="#aaa" shape-rendering="geometricPrecision"/>
<circle cx="2038.7" cy="17.5" r="1.4" fill="#aaa" shape-rendering="geometricPrecision"/>
<circle cx="2042.5" cy="17.5" r="1.4" fill="#aaa" shape-rendering="geometricPrecision"/>
<rect x="2045.50" y="11.50" width="3.50" height="8.00" fill="#f07a1a" />
<rect x="2067" y="3" width="19" height="17" rx="1" fill="#27243a" shape-rendering="geometricPrecision"/>
<path d="M2069.5 6 L2072.5 8 L2069.5 10 M2073 10.5 H2076" stroke="#fff" stroke-width="0.9" fill="none" shape-rendering="geometricPrecision"/>
<ellipse cx="3226" cy="11.8" rx="11" ry="9" fill="#d42a2a" shape-rendering="geometricPrecision"/>
<rect x="3217.00" y="10.00" width="18.00" height="4.00" fill="#ffffff" />
<path d="M3263 19 V7 M3259.5 10.5 L3263 6 L3266.5 10.5 M3273 6 V18 M3269.5 14.5 L3273 19 L3276.5 14.5" stroke="#222" stroke-width="2.4" fill="none" shape-rendering="geometricPrecision"/>
<rect x="3299.00" y="4.00" width="20.00" height="16.00" fill="#333333" />
<text x="3301.50" y="16.50" fill="#fff" font-size="11" textLength="14.5" lengthAdjust="spacingAndGlyphs" >En</text>
<rect x="3341.50" y="6.50" width="17.50" height="11.00" fill="#333333" />
<path d="M3342 7.5 L3350 13.5 L3358.5 7.5 M3342 17 L3348 12 M3358.5 17 L3352.5 12" stroke="#f6f6f6" stroke-width="1" fill="none" shape-rendering="geometricPrecision"/>
<path d="M3382 9 H3385 L3389 5.5 V18 L3385 14.5 H3382 Z" fill="#aaa" shape-rendering="geometricPrecision"/>
<path d="M3392 9 L3398 15 M3398 9 L3392 15" stroke="#aaa" stroke-width="1.3" shape-rendering="geometricPrecision"/>
<text x="3421.30" y="16.30" fill="#3c3c3c" font-size="13.5" textLength="78.3" lengthAdjust="spacingAndGlyphs" >juin 23 2023</text>
<text x="3515.00" y="16.30" fill="#3c3c3c" font-size="13.5" textLength="36.0" lengthAdjust="spacingAndGlyphs" >09:39</text>
<circle cx="3580" cy="13" r="6" fill="none" stroke="#333" stroke-width="3" stroke-dasharray="3 1.7" shape-rendering="geometricPrecision"/>
<circle cx="3580" cy="13" r="4.5" fill="none" stroke="#333" stroke-width="2" shape-rendering="geometricPrecision"/>
<rect x="3578.80" y="4.00" width="2.40" height="8.00" fill="#333" />
<rect x="1680.00" y="24.00" width="1920.00" height="74.00" fill="#3b3a39" />
<rect x="1680.00" y="24.00" width="2.00" height="74.00" fill="#262626" />
<rect x="1680.00" y="98.00" width="1.00" height="918.00" fill="#ffffff" />
<rect x="1681.00" y="98.00" width="1.00" height="918.00" fill="#a0a0a0" />
<rect x="1682.00" y="98.00" width="2.00" height="918.00" fill="#dcdcdc" />
<text x="1687.50" y="42.70" fill="#f0f0f0" font-size="14" textLength="43.5" lengthAdjust="spacingAndGlyphs" >Fichier</text>
<text x="1746.00" y="42.70" fill="#f0f0f0" font-size="14" textLength="46.6" lengthAdjust="spacingAndGlyphs" >Édition</text>
<text x="1806.70" y="42.70" fill="#f0f0f0" font-size="14" textLength="64.0" lengthAdjust="spacingAndGlyphs" >Affichage</text>
<text x="1885.00" y="42.70" fill="#f0f0f0" font-size="14" textLength="69.3" lengthAdjust="spacingAndGlyphs" >Historique</text>
<text x="1968.90" y="42.70" fill="#f0f0f0" font-size="14" textLength="95.0" lengthAdjust="spacingAndGlyphs" >Marque-pages</text>
<text x="2078.00" y="42.70" fill="#f0f0f0" font-size="14" textLength="39.6" lengthAdjust="spacingAndGlyphs" >Outils</text>
<text x="2131.70" y="42.70" fill="#f0f0f0" font-size="14" textLength="29.8" lengthAdjust="spacingAndGlyphs" >Aide</text>
<line x1="1687.50" y1="45.50" x2="1696.00" y2="45.50" stroke="#f0f0f0" stroke-width="1" />
<line x1="1783.00" y1="45.50" x2="1792.60" y2="45.50" stroke="#f0f0f0" stroke-width="1" />
<line x1="1806.70" y1="45.50" x2="1816.50" y2="45.50" stroke="#f0f0f0" stroke-width="1" />
<line x1="1885.00" y1="45.50" x2="1895.50" y2="45.50" stroke="#f0f0f0" stroke-width="1" />
<line x1="1969.00" y1="45.50" x2="1982.00" y2="45.50" stroke="#f0f0f0" stroke-width="1" />
<line x1="2078.00" y1="45.50" x2="2089.00" y2="45.50" stroke="#f0f0f0" stroke-width="1" />
<line x1="2155.00" y1="45.50" x2="2161.50" y2="45.50" stroke="#f0f0f0" stroke-width="1" />
<line x1="3510.00" y1="39.30" x2="3518.30" y2="39.30" stroke="#f0f0f0" stroke-width="1.4" />
<rect x="3544.50" y="36.50" width="7.50" height="5.50" fill="none" stroke="#f0f0f0" stroke-width="1.3"/>
<circle cx="3582" cy="39" r="9.5" fill="#575656" shape-rendering="geometricPrecision"/>
<path d="M3579 36 L3585 42 M3585 36 L3579 42" stroke="#f0f0f0" stroke-width="1.2" shape-rendering="geometricPrecision"/>
<use href="#ffx" x="1692" y="67.6" width="16" height="16"/>
<line x1="1722.30" y1="54.00" x2="1722.30" y2="97.00" stroke="#5c5b5a" stroke-width="1" />
<rect x="1727" y="58" width="176" height="36" rx="4" fill="#f9f9fb" shape-rendering="geometricPrecision"/>
<rect x="1735.00" y="68.00" width="16.00" height="16.00" fill="#6a6fc0" />
<rect x="1736.00" y="69.00" width="14.00" height="14.00" fill="#9da4e0" />
<text x="1736.50" y="81.00" fill="#30307a" font-size="10" font-weight="bold" textLength="13.0" lengthAdjust="spacingAndGlyphs" >EL</text>
<text x="1757.00" y="81.50" fill="#15141a" font-size="14" textLength="94.7" lengthAdjust="spacingAndGlyphs" >ELOG N-SI-137</text>
<path d="M1883.5 72.5 L1891.5 80.5 M1891.5 72.5 L1883.5 80.5" stroke="#15141a" stroke-width="1.2" shape-rendering="geometricPrecision"/>
<path d="M1914.8 84 V75 Q1914.8 69 1920.8 69 Q1925.8 69 1925.8 75 V84 Z" fill="#8cb83a" shape-rendering="geometricPrecision"/>
<path d="M1925.8 84 V70 L1927.8 67.5 L1930.3 68.5 V84 Z" fill="#1b8fc6" shape-rendering="geometricPrecision"/>
<text x="1936.30" y="81.50" fill="#fbfbfe" font-size="14" textLength="122.0" lengthAdjust="spacingAndGlyphs" >NNDC | National N</text>
<defs><linearGradient id="fd1914" x1="0" x2="1"><stop offset="0" stop-color="#3b3a39" stop-opacity="0"/><stop offset="1" stop-color="#3b3a39" stop-opacity="1"/></linearGradient></defs>
<rect x="2036.30" y="66.00" width="22.00" height="20.00" fill="url(#fd1914)" />
<path d="M2062 72.5 L2070 80.5 M2070 72.5 L2062 80.5" stroke="#fbfbfe" stroke-width="1.2" shape-rendering="geometricPrecision"/>
<path d="M2093.7 84 V75 Q2093.7 69 2099.7 69 Q2104.7 69 2104.7 75 V84 Z" fill="#8cb83a" shape-rendering="geometricPrecision"/>
<path d="M2104.7 84 V70 L2106.7 67.5 L2109.2 68.5 V84 Z" fill="#1b8fc6" shape-rendering="geometricPrecision"/>
<text x="2115.20" y="81.50" fill="#fbfbfe" font-size="14" textLength="114.0" lengthAdjust="spacingAndGlyphs" >Datasets for 60ni</text>
<path d="M2242 72.5 L2250 80.5 M2250 72.5 L2242 80.5" stroke="#fbfbfe" stroke-width="1.2" shape-rendering="geometricPrecision"/>
<rect x="2273.70" y="68.00" width="16.00" height="16.00" fill="#ffffff" />
<rect x="2275.20" y="71.00" width="13.00" height="11.00" fill="#3d8fd6" />
<rect x="2277.70" y="75.00" width="8.00" height="3.00" fill="#1a3a7a" />
<text x="2295.20" y="81.50" fill="#fbfbfe" font-size="14" textLength="122.0" lengthAdjust="spacingAndGlyphs" >EnsdfDispatcherSe</text>
<defs><linearGradient id="fd2273" x1="0" x2="1"><stop offset="0" stop-color="#3b3a39" stop-opacity="0"/><stop offset="1" stop-color="#3b3a39" stop-opacity="1"/></linearGradient></defs>
<rect x="2395.20" y="66.00" width="22.00" height="20.00" fill="url(#fd2273)" />
<path d="M2421 72.5 L2429 80.5 M2429 72.5 L2421 80.5" stroke="#fbfbfe" stroke-width="1.2" shape-rendering="geometricPrecision"/>
<path d="M2452.6 84 V75 Q2452.6 69 2458.6 69 Q2463.6 69 2463.6 75 V84 Z" fill="#8cb83a" shape-rendering="geometricPrecision"/>
<path d="M2463.6 84 V70 L2465.6 67.5 L2468.1 68.5 V84 Z" fill="#1b8fc6" shape-rendering="geometricPrecision"/>
<text x="2474.10" y="81.50" fill="#fbfbfe" font-size="14" textLength="114.0" lengthAdjust="spacingAndGlyphs" >Datasets for 58ni</text>
<path d="M2601 72.5 L2609 80.5 M2609 72.5 L2601 80.5" stroke="#fbfbfe" stroke-width="1.2" shape-rendering="geometricPrecision"/>
<rect x="2632.00" y="68.00" width="16.00" height="16.00" fill="#ffffff" />
<rect x="2633.50" y="71.00" width="13.00" height="11.00" fill="#3d8fd6" />
<rect x="2636.00" y="75.00" width="8.00" height="3.00" fill="#1a3a7a" />
<text x="2653.50" y="81.50" fill="#fbfbfe" font-size="14" textLength="122.0" lengthAdjust="spacingAndGlyphs" >EnsdfDispatcherSe</text>
<defs><linearGradient id="fd2632" x1="0" x2="1"><stop offset="0" stop-color="#3b3a39" stop-opacity="0"/><stop offset="1" stop-color="#3b3a39" stop-opacity="1"/></linearGradient></defs>
<rect x="2753.50" y="66.00" width="22.00" height="20.00" fill="url(#fd2632)" />
<path d="M2780 72.5 L2788 80.5 M2788 72.5 L2780 80.5" stroke="#fbfbfe" stroke-width="1.2" shape-rendering="geometricPrecision"/>
<path d="M2812 84 V75 Q2812 69 2818 69 Q2823 69 2823 75 V84 Z" fill="#8cb83a" shape-rendering="geometricPrecision"/>
<path d="M2823 84 V70 L2825 67.5 L2827.5 68.5 V84 Z" fill="#1b8fc6" shape-rendering="geometricPrecision"/>
<text x="2833.50" y="81.50" fill="#fbfbfe" font-size="14" textLength="114.0" lengthAdjust="spacingAndGlyphs" >Datasets for 62ni</text>
<path d="M2960 72.5 L2968 80.5 M2968 72.5 L2960 80.5" stroke="#fbfbfe" stroke-width="1.2" shape-rendering="geometricPrecision"/>
<rect x="2992.00" y="68.00" width="16.00" height="16.00" fill="#ffffff" />
<rect x="2993.50" y="71.00" width="13.00" height="11.00" fill="#3d8fd6" />
<rect x="2996.00" y="75.00" width="8.00" height="3.00" fill="#1a3a7a" />
<text x="3013.50" y="81.50" fill="#fbfbfe" font-size="14" textLength="122.0" lengthAdjust="spacingAndGlyphs" >EnsdfDispatcherSe</text>
<defs><linearGradient id="fd2992" x1="0" x2="1"><stop offset="0" stop-color="#3b3a39" stop-opacity="0"/><stop offset="1" stop-color="#3b3a39" stop-opacity="1"/></linearGradient></defs>
<rect x="3113.50" y="66.00" width="22.00" height="20.00" fill="url(#fd2992)" />
<path d="M3139 72.5 L3147 80.5 M3147 72.5 L3139 80.5" stroke="#fbfbfe" stroke-width="1.2" shape-rendering="geometricPrecision"/>
<use href="#ffx" x="3171" y="68" width="16" height="16"/>
<text x="3192.50" y="81.50" fill="#fbfbfe" font-size="14" textLength="94.0" lengthAdjust="spacingAndGlyphs" >Nouvel onglet</text>
<path d="M3319 72.5 L3327 80.5 M3327 72.5 L3319 80.5" stroke="#fbfbfe" stroke-width="1.2" shape-rendering="geometricPrecision"/>
<rect x="3351.00" y="68.00" width="16.00" height="16.00" fill="#1e9e4a" />
<rect x="3354.00" y="71.00" width="10.00" height="2.00" fill="#fff" />
<rect x="3358.00" y="71.00" width="2.00" height="10.00" fill="#fff" />
<text x="3372.50" y="81.50" fill="#fbfbfe" font-size="14" textLength="111.0" lengthAdjust="spacingAndGlyphs" >62Ni Coulex - parti</text>
<defs><linearGradient id="fd3351" x1="0" x2="1"><stop offset="0" stop-color="#3b3a39" stop-opacity="0"/><stop offset="1" stop-color="#3b3a39" stop-opacity="1"/></linearGradient></defs>
<rect x="3461.50" y="66.00" width="22.00" height="20.00" fill="url(#fd3351)" />
<path d="M3498 72.5 L3506 80.5 M3506 72.5 L3498 80.5" stroke="#fbfbfe" stroke-width="1.2" shape-rendering="geometricPrecision"/>
<path d="M3539 70 V82 M3533 76 H3545" stroke="#fbfbfe" stroke-width="1.4" shape-rendering="geometricPrecision"/>
<path d="M3574 73 L3580 79 L3586 73" stroke="#fbfbfe" stroke-width="1.4" fill="none" shape-rendering="geometricPrecision"/>
<rect x="1682.00" y="98.00" width="1918.00" height="70.00" fill="#f9f9fb" />
<line x1="1682.00" y1="167.30" x2="3600.00" y2="167.30" stroke="#d6d6d9" stroke-width="1" />
<path d="M1711 118.5 H1697.5 M1703.5 112.5 L1697.5 118.5 L1703.5 124.5" stroke="#15141a" stroke-width="1.4" fill="none" shape-rendering="geometricPrecision"/>
<path d="M1733.5 118.5 H1747 M1741 112.5 L1747 118.5 L1741 124.5" stroke="#9a9aa0" stroke-width="1.4" fill="none" shape-rendering="geometricPrecision"/>
<path d="M1782 114.5 A6.6 6.6 0 1 0 1782.6 120.5" stroke="#15141a" stroke-width="1.4" fill="none" shape-rendering="geometricPrecision"/><path d="M1783.6 109.8 V116.2 H1777.2 Z" fill="#15141a" shape-rendering="geometricPrecision"/>
<rect x="1911.5" y="102.5" width="1421" height="30.5" rx="4" fill="#ffffff" stroke="#cfcfd8" stroke-width="1" shape-rendering="geometricPrecision"/>
<path d="M1926.5 111.5 L1920 114 V119 Q1920 124.5 1926.5 127 Q1933 124.5 1933 119 V114 Z" stroke="#15141a" stroke-width="1.3" fill="none" shape-rendering="geometricPrecision"/>
<path d="M1949 127 V119 H1962 V127 Z M1951.5 119 V115.5 Q1955.5 110 1959.5 115.5 V119" stroke="#15141a" stroke-width="1.3" fill="none" shape-rendering="geometricPrecision"/><path d="M1947 112 L1964 128" stroke="#e22850" stroke-width="1.4" shape-rendering="geometricPrecision"/>
<text x="1972.60" y="124.50" fill="#6b6b70" font-size="14" textLength="80.5" lengthAdjust="spacingAndGlyphs" >www.old.slcj.</text>
<text x="2053.10" y="124.50" fill="#15141a" font-size="14" textLength="63.0" lengthAdjust="spacingAndGlyphs" >uw.edu.pl</text>
<text x="2116.10" y="124.50" fill="#6b6b70" font-size="14" textLength="214.3" lengthAdjust="spacingAndGlyphs" >:8090/N-SI-137/61?cmd=Edit</text>
<path d="M3317 110.5 L3319.5 115.5 L3325 116.3 L3321 120 L3322 125.5 L3317 123 L3312 125.5 L3313 120 L3309 116.3 L3314.5 115.5 Z" stroke="#15141a" stroke-width="1.2" fill="none" shape-rendering="geometricPrecision"/>
<path d="M3461 112 H3474 V118 Q3474 125 3467.5 125 Q3461 125 3461 118 Z M3464 116.5 L3467.5 120 L3471 116.5" stroke="#15141a" stroke-width="1.3" fill="none" shape-rendering="geometricPrecision"/>
<path d="M3503 110 V122 M3498 117.5 L3503 122.5 L3508 117.5 M3496 125.5 H3510" stroke="#15141a" stroke-width="1.4" fill="none" shape-rendering="geometricPrecision"/>
<path d="M3534 113 H3539 V110.5 Q3541 108 3543 110.5 V113 H3547 V118 Q3550 118 3550 120.5 Q3550 123 3547 123 V127 H3534 Z" stroke="#15141a" stroke-width="1.3" fill="none" shape-rendering="geometricPrecision"/>
<path d="M3569 112.5 H3582 M3569 118 H3582 M3569 123.5 H3582" stroke="#15141a" stroke-width="1.4" shape-rendering="geometricPrecision"/>
<circle cx="1700" cy="153" r="4.3" fill="none" stroke="#333" stroke-width="2.4" shape-rendering="geometricPrecision"/><circle cx="1700" cy="153" r="6.5" fill="none" stroke="#333" stroke-width="2.2" stroke-dasharray="2.2 2.9" shape-rendering="geometricPrecision"/>
<text x="1712.50" y="158.00" fill="#15141a" font-size="14" textLength="97.5" lengthAdjust="spacingAndGlyphs" >Les plus visités</text>
<circle cx="1830" cy="153" r="7" fill="#ff7139" shape-rendering="geometricPrecision"/><circle cx="1832" cy="151.5" r="4" fill="#fff" shape-rendering="geometricPrecision"/><path d="M1826 146.5 A7 7 0 0 1 1837 150" stroke="#b833e1" stroke-width="1.5" fill="none" shape-rendering="geometricPrecision"/>
<text x="1843.00" y="158.00" fill="#15141a" font-size="14" textLength="103.0" lengthAdjust="spacingAndGlyphs" >Getting Started</text>
<rect x="1958.80" y="145.00" width="16.00" height="16.00" fill="#6a6fc0" />
<rect x="1959.80" y="146.00" width="14.00" height="14.00" fill="#9da4e0" />
<text x="1960.30" y="158.00" fill="#30307a" font-size="10" font-weight="bold" textLength="13.0" lengthAdjust="spacingAndGlyphs" >EL</text>
<text x="1978.00" y="158.00" fill="#15141a" font-size="14" textLength="160.0" lengthAdjust="spacingAndGlyphs" >ELOG Logbook Selecti…</text>
<circle cx="2160" cy="153" r="6.5" fill="none" stroke="#f6a623" stroke-width="2.5" stroke-dasharray="2 1.6" shape-rendering="geometricPrecision"/><circle cx="2160" cy="153" r="3" fill="#f57a1e" shape-rendering="geometricPrecision"/>
<text x="2173.00" y="158.00" fill="#15141a" font-size="14" textLength="158.0" lengthAdjust="spacingAndGlyphs" >Grafana - switch-faste…</text>
<path d="M2350 147 L2354 152 L2351 160 L2356 153 Z" fill="#e05a1e" shape-rendering="geometricPrecision"/><circle cx="2352" cy="147" r="2.4" fill="#1e6fb8" shape-rendering="geometricPrecision"/>
<text x="2367.00" y="158.00" fill="#15141a" font-size="14" textLength="154.0" lengthAdjust="spacingAndGlyphs" >IJCLab – Laboratoire …</text>
<rect x="2542.00" y="145.00" width="16.00" height="16.00" fill="#7bd13d" />
<rect x="2544.00" y="152.00" width="12.00" height="7.00" fill="#e9ffd0" />
<text x="2543.50" y="150.50" fill="#225500" font-size="4" >FASTER</text>
<text x="2561.00" y="158.00" fill="#15141a" font-size="14" textLength="40.0" lengthAdjust="spacingAndGlyphs" >Home</text>
<rect x="2613.60" y="145.00" width="16.00" height="16.00" fill="#1a73c8" />
<path d="M2617 153 Q2619.5 149 2622 153 Q2624.5 157 2627 153 Q2624.5 149 2622 153 Q2619.5 157 2617 153 Z" stroke="#fff" stroke-width="1.3" fill="none" shape-rendering="geometricPrecision"/>
<text x="2634.50" y="158.00" fill="#15141a" font-size="14" textLength="109.5" lengthAdjust="spacingAndGlyphs" >Elog_temporaire</text>
<rect x="2757.00" y="145.00" width="16.00" height="16.00" fill="#1e9e4a" />
<rect x="2760.00" y="148.00" width="10.00" height="2.00" fill="#fff" />
<rect x="2764.00" y="148.00" width="2.00" height="10.00" fill="#fff" />
<text x="2777.00" y="158.00" fill="#15141a" font-size="14" textLength="119.0" lengthAdjust="spacingAndGlyphs" >N-SI-134-schedule</text>
<path d="M2911 148 A7 7 0 1 0 2922 148.5" stroke="#f07a3a" stroke-width="1.6" fill="none" shape-rendering="geometricPrecision"/>
<text x="2929.00" y="158.00" fill="#15141a" font-size="14" textLength="136.0" lengthAdjust="spacingAndGlyphs" >Online scan N-SI-134</text>
<path d="M3426 160 V147.5 H3431.5 L3433 149.5 H3440 V160 Z" stroke="#15141a" stroke-width="1.2" fill="none" shape-rendering="geometricPrecision"/>
<text x="3445.00" y="158.00" fill="#15141a" font-size="14" textLength="142.0" lengthAdjust="spacingAndGlyphs" >Autres marque-pages</text>
<rect x="1682.00" y="168.00" width="1918.00" height="848.00" fill="#ffffff" />
<rect x="1683.00" y="171.00" width="54.00" height="16.00" fill="#b8e4b8" />
<line x1="1736.50" y1="171.00" x2="1736.50" y2="187.00" stroke="#2f8f2f" stroke-width="1.2" />
<text x="1688.20" y="184.00" fill="#0000ee" font-size="13.5" textLength="42.8" lengthAdjust="spacingAndGlyphs" >EAGLE</text>
<rect x="1741.50" y="171.00" width="104.50" height="16.00" fill="#b8e4b8" />
<line x1="1845.50" y1="171.00" x2="1845.50" y2="187.00" stroke="#2f8f2f" stroke-width="1.2" />
<text x="1747.00" y="184.00" fill="#0000ee" font-size="13.5" textLength="93.3" lengthAdjust="spacingAndGlyphs" >IRRADIATIONS</text>
<rect x="1850.70" y="171.00" width="66.70" height="16.00" fill="#485e8c" />
<text x="1856.30" y="184.00" fill="#ffffff" font-size="13.5" textLength="54.7" lengthAdjust="spacingAndGlyphs" >External</text>
<rect x="1922.00" y="171.00" width="80.80" height="16.00" fill="#b8e4b8" />
<line x1="2002.30" y1="171.00" x2="2002.30" y2="187.00" stroke="#2f8f2f" stroke-width="1.2" />
<text x="1927.00" y="184.00" fill="#800080" font-size="13.5" textLength="69.8" lengthAdjust="spacingAndGlyphs" >Shift Plans</text>
<rect x="1683.00" y="188.00" width="60.00" height="17.00" fill="#e2e2e2" />
<line x1="1742.50" y1="188.00" x2="1742.50" y2="205.00" stroke="#9a9a9a" stroke-width="1.2" />
<text x="1689.00" y="201.30" fill="#800080" font-size="13.5" textLength="48.0" lengthAdjust="spacingAndGlyphs" >N-SI-85</text>
<rect x="1749.00" y="188.00" width="72.60" height="17.00" fill="#e2e2e2" />
<line x1="1821.10" y1="188.00" x2="1821.10" y2="205.00" stroke="#9a9a9a" stroke-width="1.2" />
<text x="1754.50" y="201.30" fill="#800080" font-size="13.5" textLength="61.5" lengthAdjust="spacingAndGlyphs" >exp22.41</text>
<rect x="1828.00" y="188.00" width="59.00" height="17.00" fill="#e2e2e2" />
<line x1="1886.50" y1="188.00" x2="1886.50" y2="205.00" stroke="#9a9a9a" stroke-width="1.2" />
<text x="1833.60" y="201.30" fill="#800080" font-size="13.5" textLength="47.7" lengthAdjust="spacingAndGlyphs" >N-SI-68</text>
<rect x="1893.00" y="188.00" width="58.00" height="17.00" fill="#e2e2e2" />
<line x1="1950.50" y1="188.00" x2="1950.50" y2="205.00" stroke="#9a9a9a" stroke-width="1.2" />
<text x="1898.00" y="201.30" fill="#800080" font-size="13.5" textLength="48.5" lengthAdjust="spacingAndGlyphs" >N-SI-69</text>
<rect x="1957.70" y="188.00" width="68.30" height="17.00" fill="#e2e2e2" />
<line x1="2025.50" y1="188.00" x2="2025.50" y2="205.00" stroke="#9a9a9a" stroke-width="1.2" />
<text x="1963.30" y="201.30" fill="#800080" font-size="13.5" textLength="57.0" lengthAdjust="spacingAndGlyphs" >N-SI-128</text>
<rect x="2031.50" y="188.00" width="68.20" height="17.00" fill="#485e8c" />
<text x="2037.00" y="201.30" fill="#ffffff" font-size="13.5" textLength="56.7" lengthAdjust="spacingAndGlyphs" >N-SI-137</text>
<rect x="1683.50" y="205.00" width="1912.50" height="33.50" fill="#485e8c" />
<line x1="1683.50" y1="238.30" x2="3596.00" y2="238.30" stroke="#1b2230" stroke-width="1.3" />
<text x="1699.40" y="227.80" fill="#ffffff" font-size="16.5" textLength="159.0" lengthAdjust="spacingAndGlyphs" >Coulex experiments</text>
<defs><linearGradient id="elg" x1="0" y1="0" x2="0" y2="1"><stop offset="0" stop-color="#9fa3de"/><stop offset="0.5" stop-color="#4d5a8e"/><stop offset="1" stop-color="#a3a7e2"/></linearGradient></defs>
<rect x="3504.30" y="205.30" width="90.20" height="29.20" fill="#3f4c7c" />
<rect x="3505.50" y="206.50" width="87.80" height="26.80" fill="url(#elg)" />
<path d="M3511.5 212.5 H3526.5 M3511.5 212.5 V227 H3526.5 M3511.5 220 H3522 M3534.5 215.5 V227 H3546.5 M3552.5 215.5 H3566.5 V227 H3552.5 Z M3590 215.5 H3576 V227 H3590 V221.5 H3584" fill="none" stroke="#2c3466" stroke-width="4.6" stroke-linejoin="round" shape-rendering="geometricPrecision"/>
<path d="M3511.5 212.5 H3526.5 M3511.5 212.5 V227 H3526.5 M3511.5 220 H3522 M3534.5 215.5 V227 H3546.5 M3552.5 215.5 H3566.5 V227 H3552.5 Z M3590 215.5 H3576 V227 H3590 V221.5 H3584" fill="none" stroke="#c4c6fa" stroke-width="2.8" stroke-linejoin="round" shape-rendering="geometricPrecision"/>
<line x1="3596.50" y1="205.00" x2="3596.50" y2="239.00" stroke="#111" stroke-width="1.2" />
<rect x="1683.50" y="239.00" width="1912.50" height="31.00" fill="#dedede" />
<line x1="1683.50" y1="270.30" x2="3596.00" y2="270.30" stroke="#5a6a98" stroke-width="1.2" />
<rect x="1685.0" y="245.8" width="53.5" height="20.5" rx="3" fill="#e9e9ed" stroke="#8f8f9d" stroke-width="1" shape-rendering="geometricPrecision"/>
<text x="1690.30" y="260.80" fill="#000" font-size="13.5" textLength="42.0" lengthAdjust="spacingAndGlyphs" >Submit</text>
<rect x="1743.9" y="245.8" width="59.09999999999991" height="20.5" rx="3" fill="#e9e9ed" stroke="#8f8f9d" stroke-width="1" shape-rendering="geometricPrecision"/>
<text x="1749.20" y="260.80" fill="#000" font-size="13.5" textLength="47.8" lengthAdjust="spacingAndGlyphs" >Preview</text>
<rect x="1808.5" y="245.8" width="38.799999999999955" height="20.5" rx="3" fill="#e9e9ed" stroke="#8f8f9d" stroke-width="1" shape-rendering="geometricPrecision"/>
<text x="1814.00" y="260.80" fill="#000" font-size="13.5" textLength="28.4" lengthAdjust="spacingAndGlyphs" >Back</text>
<rect x="1684.00" y="271.00" width="1912.00" height="22.00" fill="#ddeebb" />
<rect x="1684.00" y="293.00" width="1912.00" height="1.00" fill="#2f8a00" />
<rect x="1684.00" y="294.00" width="1913.00" height="1.00" fill="#ffffff" />
<text x="1687.50" y="287.00" fill="#000" font-size="13.5" textLength="111.5" lengthAdjust="spacingAndGlyphs" >Fields marked with</text>
<text x="1803.50" y="287.00" fill="#ff0000" font-size="13.5" >*</text>
<text x="1813.90" y="287.00" fill="#000" font-size="13.5" textLength="72.4" lengthAdjust="spacingAndGlyphs" >are required</text>
<rect x="1684.00" y="295.00" width="351.00" height="21.00" fill="#ccccff" />
<rect x="2037.00" y="295.00" width="1559.00" height="21.00" fill="#ddeebb" />
<rect x="1684.00" y="316.00" width="352.00" height="1.00" fill="#0000ff" />
<rect x="2037.00" y="316.00" width="1560.00" height="1.00" fill="#2f8a00" />
<rect x="1684.00" y="317.00" width="1913.00" height="1.00" fill="#ffffff" />
<rect x="2035.00" y="295.00" width="1.00" height="22.00" fill="#0000ff" />
<rect x="2036.00" y="295.00" width="1.00" height="23.00" fill="#ffffff" />
<rect x="3596.00" y="295.00" width="1.00" height="22.00" fill="#2f8a00" />
<text x="1687.50" y="310.00" fill="#000" font-size="13.5" textLength="66.0" lengthAdjust="spacingAndGlyphs" >Entry time:</text>
<rect x="1684.00" y="318.00" width="351.00" height="28.00" fill="#ccccff" />
<rect x="2037.00" y="318.00" width="1559.00" height="28.00" fill="#ddeebb" />
<rect x="1684.00" y="346.00" width="352.00" height="1.00" fill="#0000ff" />
<rect x="2037.00" y="346.00" width="1560.00" height="1.00" fill="#2f8a00" />
<rect x="1684.00" y="347.00" width="1913.00" height="1.00" fill="#ffffff" />
<rect x="2035.00" y="318.00" width="1.00" height="29.00" fill="#0000ff" />
<rect x="2036.00" y="318.00" width="1.00" height="30.00" fill="#ffffff" />
<rect x="3596.00" y="318.00" width="1.00" height="29.00" fill="#2f8a00" />
<text x="1687.5" y="337" font-size="13.5" fill="#000" textLength="49.6" lengthAdjust="spacingAndGlyphs">Author<tspan fill="#ff0000">*</tspan>:</text>
<rect x="1684.00" y="348.00" width="351.00" height="28.00" fill="#ccccff" />
<rect x="2037.00" y="348.00" width="1559.00" height="28.00" fill="#ddeebb" />
<rect x="1684.00" y="376.00" width="352.00" height="1.00" fill="#0000ff" />
<rect x="2037.00" y="376.00" width="1560.00" height="1.00" fill="#2f8a00" />
<rect x="1684.00" y="377.00" width="1913.00" height="1.00" fill="#ffffff" />
<rect x="2035.00" y="348.00" width="1.00" height="29.00" fill="#0000ff" />
<rect x="2036.00" y="348.00" width="1.00" height="30.00" fill="#ffffff" />
<rect x="3596.00" y="348.00" width="1.00" height="29.00" fill="#2f8a00" />
<text x="1687.5" y="367" font-size="13.5" fill="#000" textLength="36.5" lengthAdjust="spacingAndGlyphs">Type<tspan fill="#ff0000">*</tspan>:</text>
<rect x="1684.00" y="378.00" width="351.00" height="28.00" fill="#ccccff" />
<rect x="2037.00" y="378.00" width="1559.00" height="28.00" fill="#ddeebb" />
<rect x="1684.00" y="406.00" width="352.00" height="1.00" fill="#0000ff" />
<rect x="2037.00" y="406.00" width="1560.00" height="1.00" fill="#2f8a00" />
<rect x="1684.00" y="407.00" width="1913.00" height="1.00" fill="#ffffff" />
<rect x="2035.00" y="378.00" width="1.00" height="29.00" fill="#0000ff" />
<rect x="2036.00" y="378.00" width="1.00" height="30.00" fill="#ffffff" />
<rect x="3596.00" y="378.00" width="1.00" height="29.00" fill="#2f8a00" />
<text x="1687.50" y="397.00" fill="#000" font-size="13.5" textLength="26.0" lengthAdjust="spacingAndGlyphs" >test:</text>
<rect x="1684.00" y="408.00" width="351.00" height="28.00" fill="#ccccff" />
<rect x="2037.00" y="408.00" width="1559.00" height="28.00" fill="#ddeebb" />
<rect x="1684.00" y="436.00" width="352.00" height="1.00" fill="#0000ff" />
<rect x="2037.00" y="436.00" width="1560.00" height="1.00" fill="#2f8a00" />
<rect x="1684.00" y="437.00" width="1913.00" height="1.00" fill="#ffffff" />
<rect x="2035.00" y="408.00" width="1.00" height="29.00" fill="#0000ff" />
<rect x="2036.00" y="408.00" width="1.00" height="30.00" fill="#ffffff" />
<rect x="3596.00" y="408.00" width="1.00" height="29.00" fill="#2f8a00" />
<text x="1687.50" y="427.00" fill="#000" font-size="13.5" textLength="57.0" lengthAdjust="spacingAndGlyphs" >Category:</text>
<rect x="1684.00" y="438.00" width="351.00" height="28.00" fill="#ccccff" />
<rect x="2037.00" y="438.00" width="1559.00" height="28.00" fill="#ddeebb" />
<rect x="1684.00" y="466.00" width="352.00" height="1.00" fill="#0000ff" />
<rect x="2037.00" y="466.00" width="1560.00" height="1.00" fill="#2f8a00" />
<rect x="1684.00" y="467.00" width="1913.00" height="1.00" fill="#ffffff" />
<rect x="2035.00" y="438.00" width="1.00" height="29.00" fill="#0000ff" />
<rect x="2036.00" y="438.00" width="1.00" height="30.00" fill="#ffffff" />
<rect x="3596.00" y="438.00" width="1.00" height="29.00" fill="#2f8a00" />
<text x="1687.50" y="457.50" fill="#000" font-size="13.5" textLength="47.7" lengthAdjust="spacingAndGlyphs" >Subject:</text>
<rect x="3596.00" y="271.00" width="1.00" height="23.00" fill="#2f8a00" />
<text x="2040.00" y="310.00" fill="#000" font-size="13.5" textLength="147.6" lengthAdjust="spacingAndGlyphs" >Fri Jun 23 09:18:38 2023</text>
<rect x="2040.5" y="321.5" width="690" height="20.399999999999977" rx="2" fill="#ffffff" stroke="#8f8f9d" stroke-width="1" shape-rendering="geometricPrecision"/>
<rect x="2040.5" y="381.5" width="690" height="20.399999999999977" rx="2" fill="#ffffff" stroke="#8f8f9d" stroke-width="1" shape-rendering="geometricPrecision"/>
<rect x="2040.5" y="441.5" width="690" height="20.399999999999977" rx="2" fill="#ffffff" stroke="#8f8f9d" stroke-width="1" shape-rendering="geometricPrecision"/>
<text x="2044.50" y="337.00" fill="#000" font-size="13.5" textLength="20.0" lengthAdjust="spacingAndGlyphs" >pjn</text>
<text x="2044.50" y="457.20" fill="#000" font-size="13.5" textLength="66.5" lengthAdjust="spacingAndGlyphs" >new run 46</text>
<rect x="2040.5" y="351.8" width="121" height="20" rx="3" fill="#e9e9ed" stroke="#8f8f9d" stroke-width="1" shape-rendering="geometricPrecision"/>
<text x="2046.00" y="366.60" fill="#000" font-size="13.5" textLength="30.5" lengthAdjust="spacingAndGlyphs" >Runs</text>
<path d="M2146.5 359.8 L2150.5 363.8 L2154.5 359.8" stroke="#15141a" stroke-width="1.4" fill="none" shape-rendering="geometricPrecision"/>
<rect x="2040.5" y="411.8" width="121" height="20" rx="3" fill="#e9e9ed" stroke="#8f8f9d" stroke-width="1" shape-rendering="geometricPrecision"/>
<text x="2046.00" y="426.60" fill="#000" font-size="13.5" textLength="48.0" lengthAdjust="spacingAndGlyphs" >General</text>
<path d="M2146.5 419.8 L2150.5 423.8 L2154.5 419.8" stroke="#15141a" stroke-width="1.4" fill="none" shape-rendering="geometricPrecision"/>
<rect x="2166.9" y="411.8" width="93" height="20" rx="3" fill="#e9e9ed" stroke="#8f8f9d" stroke-width="1" shape-rendering="geometricPrecision"/>
<text x="2172.70" y="426.60" fill="#000" font-size="13.5" textLength="82.3" lengthAdjust="spacingAndGlyphs" >Add Category</text>
<rect x="1684.00" y="468.00" width="1912.00" height="548.00" fill="#ddeebb" />
<rect x="3596.00" y="468.00" width="1.00" height="548.00" fill="#2f8a00" />
<rect x="1680.00" y="168.00" width="3.00" height="848.00" fill="#d0d0d0" />
<rect x="1687.00" y="471.00" width="1905.00" height="545.00" fill="#ffffff" stroke="#b6b6b6" stroke-width="1"/>
<defs><linearGradient id="tbg" x1="0" y1="0" x2="0" y2="1"><stop offset="0" stop-color="#f8f8f8"/><stop offset="1" stop-color="#cfd1cf"/></linearGradient><linearGradient id="grp" x1="0" y1="0" x2="0" y2="1"><stop offset="0" stop-color="#ffffff"/><stop offset="1" stop-color="#e4e4e4"/></linearGradient></defs>
<rect x="1687.50" y="471.50" width="1904.00" height="108.50" fill="url(#tbg)" />
<line x1="1687.50" y1="579.80" x2="3591.50" y2="579.80" stroke="#b6b6b6" stroke-width="1" />
<rect x="1696.7" y="478.9" width="191.0" height="26.100000000000023" rx="3" fill="url(#grp)" stroke="#a6a6a6" stroke-width="1" shape-rendering="geometricPrecision"/>
<rect x="1895.7" y="478.9" width="201.10000000000014" height="26.100000000000023" rx="3" fill="url(#grp)" stroke="#a6a6a6" stroke-width="1" shape-rendering="geometricPrecision"/>
<rect x="2104.8" y="478.9" width="129.5" height="26.100000000000023" rx="3" fill="url(#grp)" stroke="#a6a6a6" stroke-width="1" shape-rendering="geometricPrecision"/>
<path d="M1706 485 H1713 L1716.5 488.5 V499 H1706 Z" stroke="#333" stroke-width="1.2" fill="none" shape-rendering="geometricPrecision" />
<path d="M1709.5 490 L1708 492.5 L1709.5 495 M1712.5 490 L1714 492.5 L1712.5 495" stroke="#333" stroke-width="1" fill="none" shape-rendering="geometricPrecision" />
<text x="1722.00" y="497.00" fill="#474747" font-size="13" textLength="37.7" lengthAdjust="spacingAndGlyphs" >Source</text>
<line x1="1768.60" y1="483.40" x2="1768.60" y2="500.40" stroke="#bcbcbc" stroke-width="1" />
<path d="M1778 485 H1790 L1792 487 V499 H1778 Z" stroke="#333" stroke-width="0.5" fill="#333" shape-rendering="geometricPrecision" />
<rect x="1781.00" y="485.50" width="8.00" height="4.50" fill="#eee" />
<rect x="1780.50" y="493.00" width="9.00" height="5.50" fill="#eee" />
<path d="M1806.5 485 H1815 L1819 489 V499 H1806.5 Z" stroke="#333" stroke-width="1.2" fill="none" shape-rendering="geometricPrecision" />
<circle cx="1812.5" cy="493" r="3.2" fill="none" stroke="#333" stroke-width="1.3" shape-rendering="geometricPrecision"/>
<path d="M1815 495.5 L1818.5 499" stroke="#333" stroke-width="1.6" fill="none" shape-rendering="geometricPrecision" />
<rect x="1836.00" y="485.00" width="9.00" height="3.50" fill="#333" />
<path d="M1834 489 H1848 V496 H1834 Z" stroke="#333" stroke-width="0.5" fill="#333" shape-rendering="geometricPrecision" />
<rect x="1836.50" y="494.00" width="9.00" height="5.00" fill="#fafafa" stroke="#333" stroke-width="1"/>
<line x1="1857.50" y1="483.40" x2="1857.50" y2="500.40" stroke="#bcbcbc" stroke-width="1" />
<path d="M1868.5 485 H1875 L1879 489 V499 H1868.5 Z" stroke="#333" stroke-width="1.2" fill="none" shape-rendering="geometricPrecision" />
<line x1="1870.50" y1="492.00" x2="1877.00" y2="492.00" stroke="#333" stroke-width="1" />
<line x1="1870.50" y1="495.00" x2="1877.00" y2="495.00" stroke="#333" stroke-width="1" />
<circle cx="1907.5" cy="496" r="2.4" fill="none" stroke="#b0b0b0" stroke-width="1.4" shape-rendering="geometricPrecision"/><circle cx="1915" cy="496" r="2.4" fill="none" stroke="#b0b0b0" stroke-width="1.4" shape-rendering="geometricPrecision"/>
<path d="M1907 485 L1914 494 M1915.5 485 L1908.5 494" stroke="#b0b0b0" stroke-width="1.4" fill="none" shape-rendering="geometricPrecision" />
<path d="M1931 485 H1938 V496 H1931 Z M1935 489 H1943.5 V499.5 H1935 Z" stroke="#b0b0b0" stroke-width="1.2" fill="#f4f4f4" shape-rendering="geometricPrecision" />
<path d="M1960 487 H1973 V499.5 H1960 Z" stroke="#333" stroke-width="1.3" fill="none" shape-rendering="geometricPrecision" />
<rect x="1964.00" y="485.00" width="5.00" height="3.00" fill="#333" />
<line x1="1963.00" y1="491.00" x2="1970.00" y2="491.00" stroke="#333" stroke-width="1" />
<line x1="1963.00" y1="494.00" x2="1970.00" y2="494.00" stroke="#333" stroke-width="1" />
<line x1="1963.00" y1="497.00" x2="1970.00" y2="497.00" stroke="#333" stroke-width="1" />
<path d="M1988 487 H2001 V499.5 H1988 Z" stroke="#333" stroke-width="1.3" fill="none" shape-rendering="geometricPrecision" />
<rect x="1992.00" y="485.00" width="5.00" height="3.00" fill="#333" />
<text x="1991.00" y="497.50" fill="#333" font-size="8" font-weight="bold" >T</text>
<path d="M2016 487 H2029 V499.5 H2016 Z" stroke="#333" stroke-width="1.3" fill="none" shape-rendering="geometricPrecision" />
<rect x="2020.00" y="485.00" width="5.00" height="3.00" fill="#333" />
<text x="2019.00" y="497.50" fill="#333" font-size="8" font-weight="bold" >W</text>
<line x1="2038.60" y1="483.40" x2="2038.60" y2="500.40" stroke="#bcbcbc" stroke-width="1" />
<path d="M2062 498 Q2061 489 2052 489 H2049 M2053 485 L2049 489 L2053 493" stroke="#333" stroke-width="2.2" fill="none" shape-rendering="geometricPrecision" />
<path d="M2076 498 Q2077 489 2086 489 H2089 M2085 485 L2089 489 L2085 493" stroke="#b0b0b0" stroke-width="2.2" fill="none" shape-rendering="geometricPrecision" />
<circle cx="2117.5" cy="490" r="4.6" fill="none" stroke="#333" stroke-width="2" shape-rendering="geometricPrecision"/>
<path d="M2121 493.5 L2126 498.5" stroke="#333" stroke-width="2.6" fill="none" shape-rendering="geometricPrecision" />
<text x="2138.50" y="491.00" fill="#333" font-size="9" >b</text>
<text x="2147.50" y="499.50" fill="#333" font-size="9" >a</text>
<path d="M2145 486 L2149 486 L2149 490 M2144 494 L2141 496 L2144 498" stroke="#333" stroke-width="1" fill="none" shape-rendering="geometricPrecision" />
<line x1="2163.50" y1="483.40" x2="2163.50" y2="500.40" stroke="#bcbcbc" stroke-width="1" />
<rect x="2172.00" y="485.00" width="14.00" height="11.00" fill="#333" />
<line x1="2174.00" y1="488.00" x2="2184.00" y2="488.00" stroke="#eee" stroke-width="1" />
<line x1="2174.00" y1="491.00" x2="2184.00" y2="491.00" stroke="#eee" stroke-width="1" />
<line x1="2174.00" y1="494.00" x2="2184.00" y2="494.00" stroke="#eee" stroke-width="1" />
<path d="M2178 497 L2178 500 M2176 500 H2180" stroke="#333" stroke-width="1" fill="none" shape-rendering="geometricPrecision" />
<line x1="2196.50" y1="483.40" x2="2196.50" y2="500.40" stroke="#bcbcbc" stroke-width="1" />
<text x="2205.50" y="491.00" fill="#333" font-size="7" font-weight="bold" textLength="13.0" lengthAdjust="spacingAndGlyphs" >ABC</text>
<path d="M2207 494 L2211 498.5 L2219 490" stroke="#333" stroke-width="2" fill="none" shape-rendering="geometricPrecision" />
<path d="M2223 491 L2225 493.5 L2227 491" stroke="#333" stroke-width="0.8" fill="#333" shape-rendering="geometricPrecision" />
<rect x="1696.7" y="511.9" width="201.39999999999986" height="26.100000000000023" rx="3" fill="url(#grp)" stroke="#a6a6a6" stroke-width="1" shape-rendering="geometricPrecision"/>
<rect x="1905.8" y="511.9" width="390.79999999999995" height="26.100000000000023" rx="3" fill="url(#grp)" stroke="#a6a6a6" stroke-width="1" shape-rendering="geometricPrecision"/>
<rect x="2304.5" y="511.9" width="84.5" height="26.100000000000023" rx="3" fill="url(#grp)" stroke="#a6a6a6" stroke-width="1" shape-rendering="geometricPrecision"/>
<rect x="2397.0" y="511.9" width="251.9000000000001" height="26.100000000000023" rx="3" fill="url(#grp)" stroke="#a6a6a6" stroke-width="1" shape-rendering="geometricPrecision"/>
<text x="1706.60" y="531.00" fill="#333" font-size="15" font-weight="bold" textLength="9.7" lengthAdjust="spacingAndGlyphs" >B</text>
<text x="1734.50" y="531.00" fill="#333" font-size="15" font-weight="bold" textLength="9.0" lengthAdjust="spacingAndGlyphs" font-style="italic">I</text>
<text x="1762.00" y="530.00" fill="#333" font-size="14" font-weight="bold" textLength="10.5" lengthAdjust="spacingAndGlyphs" >U</text>
<line x1="1761.00" y1="533.50" x2="1773.60" y2="533.50" stroke="#333" stroke-width="1.4" />
<text x="1788.50" y="531.00" fill="#333" font-size="15" font-weight="bold" textLength="11.5" lengthAdjust="spacingAndGlyphs" >S</text>
<line x1="1787.60" y1="524.50" x2="1802.00" y2="524.50" stroke="#333" stroke-width="1.6" />
<text x="1816.00" y="530.00" fill="#333" font-size="13" font-weight="bold" textLength="9.0" lengthAdjust="spacingAndGlyphs" >x</text>
<text x="1826.00" y="533.00" fill="#333" font-size="7" font-weight="bold" >2</text>
<text x="1844.00" y="530.00" fill="#333" font-size="13" font-weight="bold" textLength="9.0" lengthAdjust="spacingAndGlyphs" >x</text>
<text x="1854.00" y="523.00" fill="#333" font-size="7" font-weight="bold" >2</text>
<line x1="1867.80" y1="516.40" x2="1867.80" y2="533.40" stroke="#bcbcbc" stroke-width="1" />
<text x="1877.00" y="530.00" fill="#333" font-size="14" font-weight="bold" textLength="10.0" lengthAdjust="spacingAndGlyphs" font-style="italic">T</text>
<text x="1885.00" y="533.00" fill="#333" font-size="8" font-weight="bold" >x</text>
<text x="1913.40" y="521.00" fill="#333" font-size="6" font-weight="bold" >1</text>
<line x1="1918.00" y1="519.00" x2="1926.00" y2="519.00" stroke="#333" stroke-width="1.6" />
<text x="1913.40" y="527.50" fill="#333" font-size="6" font-weight="bold" >2</text>
<line x1="1918.00" y1="525.50" x2="1926.00" y2="525.50" stroke="#333" stroke-width="1.6" />
<text x="1913.40" y="534.00" fill="#333" font-size="6" font-weight="bold" >3</text>
<line x1="1918.00" y1="532.00" x2="1926.00" y2="532.00" stroke="#333" stroke-width="1.6" />
<circle cx="1943.3" cy="519" r="1.8" fill="#333" shape-rendering="geometricPrecision"/>
<line x1="1947.50" y1="519.00" x2="1955.30" y2="519.00" stroke="#333" stroke-width="1.6" />
<circle cx="1943.3" cy="525" r="1.8" fill="#333" shape-rendering="geometricPrecision"/>
<line x1="1947.50" y1="525.00" x2="1955.30" y2="525.00" stroke="#333" stroke-width="1.6" />
<circle cx="1943.3" cy="531" r="1.8" fill="#333" shape-rendering="geometricPrecision"/>
<line x1="1947.50" y1="531.00" x2="1955.30" y2="531.00" stroke="#333" stroke-width="1.6" />
<line x1="1964.50" y1="516.40" x2="1964.50" y2="533.40" stroke="#bcbcbc" stroke-width="1" />
<line x1="1980.00" y1="518.00" x2="1988.30" y2="518.00" stroke="#b0b0b0" stroke-width="1.1" />
<line x1="1980.00" y1="521.50" x2="1988.30" y2="521.50" stroke="#b0b0b0" stroke-width="1.1" />
<line x1="1980.00" y1="525.00" x2="1988.30" y2="525.00" stroke="#b0b0b0" stroke-width="1.1" />
<line x1="1980.00" y1="528.50" x2="1988.30" y2="528.50" stroke="#b0b0b0" stroke-width="1.1" />
<line x1="1980.00" y1="532.00" x2="1988.30" y2="532.00" stroke="#b0b0b0" stroke-width="1.1" />
<path d="M1977 522 L1974 525 L1977 528" stroke="#b0b0b0" stroke-width="1.1" fill="none" shape-rendering="geometricPrecision" />
<line x1="1978.00" y1="516.00" x2="1978.00" y2="534.00" stroke="#b0b0b0" stroke-width="1" />
<line x1="2007.50" y1="518.00" x2="2016.20" y2="518.00" stroke="#333" stroke-width="1.1" />
<line x1="2007.50" y1="521.50" x2="2016.20" y2="521.50" stroke="#333" stroke-width="1.1" />
<line x1="2007.50" y1="525.00" x2="2016.20" y2="525.00" stroke="#333" stroke-width="1.1" />
<line x1="2007.50" y1="528.50" x2="2016.20" y2="528.50" stroke="#333" stroke-width="1.1" />
<line x1="2007.50" y1="532.00" x2="2016.20" y2="532.00" stroke="#333" stroke-width="1.1" />
<path d="M2002 522 L2005 525 L2002 528" stroke="#333" stroke-width="1.1" fill="none" shape-rendering="geometricPrecision" />
<line x1="2006.00" y1="516.00" x2="2006.00" y2="534.00" stroke="#333" stroke-width="1" />
<line x1="2025.70" y1="516.40" x2="2025.70" y2="533.40" stroke="#bcbcbc" stroke-width="1" />
<text x="2034.40" y="535.00" fill="#333" font-size="26" font-weight="bold" textLength="15.0" lengthAdjust="spacingAndGlyphs" >”</text>
<text x="2064.30" y="522.50" fill="#333" font-size="7" font-weight="bold" textLength="12.5" lengthAdjust="spacingAndGlyphs" >DIV</text>
<text x="2064.30" y="532.00" fill="#333" font-size="8" font-weight="bold" textLength="12.5" lengthAdjust="spacingAndGlyphs" >&lt;/&gt;</text>
<line x1="2086.70" y1="516.40" x2="2086.70" y2="533.40" stroke="#bcbcbc" stroke-width="1" />
<rect x="2089.50" y="512.00" width="27.10" height="26.00" fill="#c4c4c4" />
<line x1="2089.50" y1="512.50" x2="2116.60" y2="512.50" stroke="#a0a0a0" stroke-width="1" />
<line x1="2096.40" y1="518.50" x2="2109.40" y2="518.50" stroke="#333" stroke-width="1.8" />
<line x1="2096.40" y1="522.50" x2="2105.40" y2="522.50" stroke="#333" stroke-width="1.8" />
<line x1="2096.40" y1="526.50" x2="2109.40" y2="526.50" stroke="#333" stroke-width="1.8" />
<line x1="2096.40" y1="530.50" x2="2105.40" y2="530.50" stroke="#333" stroke-width="1.8" />
<line x1="2124.40" y1="518.50" x2="2137.40" y2="518.50" stroke="#333" stroke-width="1.8" />
<line x1="2126.40" y1="522.50" x2="2135.40" y2="522.50" stroke="#333" stroke-width="1.8" />
<line x1="2124.40" y1="526.50" x2="2137.40" y2="526.50" stroke="#333" stroke-width="1.8" />
<line x1="2126.40" y1="530.50" x2="2135.40" y2="530.50" stroke="#333" stroke-width="1.8" />
<line x1="2152.30" y1="518.50" x2="2165.30" y2="518.50" stroke="#333" stroke-width="1.8" />
<line x1="2156.30" y1="522.50" x2="2165.30" y2="522.50" stroke="#333" stroke-width="1.8" />
<line x1="2152.30" y1="526.50" x2="2165.30" y2="526.50" stroke="#333" stroke-width="1.8" />
<line x1="2156.30" y1="530.50" x2="2165.30" y2="530.50" stroke="#333" stroke-width="1.8" />
<line x1="2180.30" y1="518.50" x2="2193.30" y2="518.50" stroke="#333" stroke-width="1.8" />
<line x1="2180.30" y1="522.50" x2="2193.30" y2="522.50" stroke="#333" stroke-width="1.8" />
<line x1="2180.30" y1="526.50" x2="2193.30" y2="526.50" stroke="#333" stroke-width="1.8" />
<line x1="2180.30" y1="530.50" x2="2193.30" y2="530.50" stroke="#333" stroke-width="1.8" />
<line x1="2203.20" y1="516.40" x2="2203.20" y2="533.40" stroke="#bcbcbc" stroke-width="1" />
<rect x="2206.80" y="512.00" width="26.60" height="26.00" fill="#c4c4c4" />
<text x="2214.50" y="531.00" fill="#333" font-size="14" font-weight="bold" >¶</text>
<path d="M2209.5 521 L2212.5 524 L2209.5 527 Z" stroke="#333" stroke-width="0.5" fill="#333" shape-rendering="geometricPrecision" />
<text x="2241.80" y="531.00" fill="#333" font-size="14" font-weight="bold" >¶</text>
<path d="M2254 521 L2251 524 L2254 527 Z" stroke="#333" stroke-width="0.5" fill="#333" shape-rendering="geometricPrecision" />
<text x="2267.00" y="531.00" fill="#333" font-size="13" textLength="15.0" lengthAdjust="spacingAndGlyphs" >語</text>
<path d="M2286 523 L2288.5 526 L2291 523" stroke="#333" stroke-width="0.8" fill="#333" shape-rendering="geometricPrecision" />
<path d="M2313 522 H2318 M2311.5 525 H2320 M2313 528 H2318" stroke="#333" stroke-width="1.6" fill="none" shape-rendering="geometricPrecision" />
<rect x="2311.8" y="520.5" width="7" height="8" rx="3.5" fill="none" stroke="#333" stroke-width="1.8" shape-rendering="geometricPrecision"/><rect x="2318" y="520.5" width="7" height="8" rx="3.5" fill="none" stroke="#333" stroke-width="1.8" shape-rendering="geometricPrecision"/>
<rect x="2339.8" y="520.5" width="7" height="8" rx="3.5" fill="none" stroke="#b0b0b0" stroke-width="1.6" shape-rendering="geometricPrecision"/><rect x="2346" y="520.5" width="6" height="6" rx="3" fill="none" stroke="#b0b0b0" stroke-width="1.6" shape-rendering="geometricPrecision"/>
<path d="M2348 527 L2353 532 M2353 527 L2348 532" stroke="#b0b0b0" stroke-width="1.4" fill="none" shape-rendering="geometricPrecision" />
<line x1="2369.50" y1="517.00" x2="2369.50" y2="533.00" stroke="#333" stroke-width="1.4" />
<path d="M2370.5 517 H2381.5 V526 H2370.5 Z" stroke="#333" stroke-width="0.5" fill="#333" shape-rendering="geometricPrecision" />
<rect x="2404.00" y="518.00" width="14.00" height="12.00" fill="#fff" stroke="#333" stroke-width="1.6"/>
<path d="M2405.5 529 L2409 524 L2412 527 L2414 525 L2417 529 Z" stroke="#333" stroke-width="0.5" fill="#333" shape-rendering="geometricPrecision" />
<circle cx="2414" cy="521.5" r="1.3" fill="#333" shape-rendering="geometricPrecision"/>
<rect x="2431.00" y="518.00" width="15.50" height="13.00" fill="none" stroke="#333" stroke-width="1.6"/>
<rect x="2431.00" y="518.00" width="15.50" height="3.00" fill="#333" />
<line x1="2436.20" y1="518.00" x2="2436.20" y2="531.00" stroke="#333" stroke-width="1.3" />
<line x1="2441.20" y1="518.00" x2="2441.20" y2="531.00" stroke="#333" stroke-width="1.3" />
<line x1="2431.00" y1="525.00" x2="2446.50" y2="525.00" stroke="#333" stroke-width="1.3" />
<line x1="2460.00" y1="517.00" x2="2474.00" y2="517.00" stroke="#555" stroke-width="0.8" />
<line x1="2460.00" y1="519.50" x2="2474.00" y2="519.50" stroke="#555" stroke-width="0.8" />
<line x1="2460.00" y1="522.00" x2="2474.00" y2="522.00" stroke="#555" stroke-width="0.8" />
<line x1="2460.00" y1="525.00" x2="2474.00" y2="525.00" stroke="#333" stroke-width="2" />
<line x1="2460.00" y1="528.00" x2="2474.00" y2="528.00" stroke="#555" stroke-width="0.8" />
<line x1="2460.00" y1="530.50" x2="2474.00" y2="530.50" stroke="#555" stroke-width="0.8" />
<line x1="2460.00" y1="533.00" x2="2474.00" y2="533.00" stroke="#555" stroke-width="0.8" />
<circle cx="2494.8" cy="525" r="6.5" fill="none" stroke="#333" stroke-width="1.5" shape-rendering="geometricPrecision"/><circle cx="2492.5" cy="523" r="1" fill="#333" shape-rendering="geometricPrecision"/><circle cx="2497.5" cy="523" r="1" fill="#333" shape-rendering="geometricPrecision"/>
<path d="M2491.5 527 Q2494.8 530.5 2498 527" stroke="#333" stroke-width="1.2" fill="none" shape-rendering="geometricPrecision" />
<text x="2516.00" y="532.00" fill="#333" font-size="16" font-weight="bold" textLength="14.0" lengthAdjust="spacingAndGlyphs" >Ω</text>
<path d="M2544 522 L2547 525 L2544 528 Z" stroke="#333" stroke-width="0.5" fill="#333" shape-rendering="geometricPrecision" />
<line x1="2549.00" y1="521.00" x2="2559.00" y2="521.00" stroke="#333" stroke-width="1.8" />
<line x1="2549.00" y1="525.00" x2="2559.00" y2="525.00" stroke="#333" stroke-width="1.8" />
<line x1="2549.00" y1="529.00" x2="2559.00" y2="529.00" stroke="#333" stroke-width="1.8" />
<line x1="2572.00" y1="530.00" x2="2572.00" y2="533.00" stroke="#333" stroke-width="1.6" />
<line x1="2572.00" y1="533.00" x2="2587.00" y2="533.00" stroke="#333" stroke-width="1.6" />
<line x1="2587.00" y1="530.00" x2="2587.00" y2="533.00" stroke="#333" stroke-width="1.6" />
<path d="M2579.5 517 L2574.5 522.5 H2577.5 V529 H2581.5 V522.5 H2584.5 Z" stroke="#333" stroke-width="0.5" fill="#333" shape-rendering="geometricPrecision" />
<circle cx="2607" cy="526" r="6" fill="none" stroke="#333" stroke-width="2" shape-rendering="geometricPrecision"/>
<path d="M2607 522.5 V526 L2609.5 527.5" stroke="#333" stroke-width="1.3" fill="none" shape-rendering="geometricPrecision" />
<path d="M2599.5 520.5 Q2600 516.5 2604 517 M2614.5 520.5 Q2614 516.5 2610 517" stroke="#333" stroke-width="2" fill="none" shape-rendering="geometricPrecision" />
<text x="2627.30" y="532.00" fill="#333" font-size="17" font-weight="bold" textLength="8.0" lengthAdjust="spacingAndGlyphs" font-style="italic">f</text>
<text x="2634.50" y="532.00" fill="#333" font-size="11" font-weight="bold" textLength="8.5" lengthAdjust="spacingAndGlyphs" font-style="italic">x</text>
<rect x="1696.7" y="545.1" width="89.29999999999995" height="25.899999999999977" rx="3" fill="url(#grp)" stroke="#a6a6a6" stroke-width="1" shape-rendering="geometricPrecision"/>
<text x="1707.00" y="563.00" fill="#474747" font-size="13" textLength="32.5" lengthAdjust="spacingAndGlyphs" >Styles</text>
<path d="M1774.5 557 L1777 560 L1779.5 557 Z" stroke="#333" stroke-width="0.6" fill="#333" shape-rendering="geometricPrecision" />
<rect x="1793.7" y="545.1" width="89.29999999999995" height="25.899999999999977" rx="3" fill="url(#grp)" stroke="#a6a6a6" stroke-width="1" shape-rendering="geometricPrecision"/>
<text x="1803.80" y="563.00" fill="#474747" font-size="13" textLength="38.9" lengthAdjust="spacingAndGlyphs" >Normal</text>
<path d="M1870.9 557 L1873.4 560 L1875.9 557 Z" stroke="#333" stroke-width="0.6" fill="#333" shape-rendering="geometricPrecision" />
<rect x="1890.7" y="545.1" width="89.20000000000005" height="25.899999999999977" rx="3" fill="url(#grp)" stroke="#a6a6a6" stroke-width="1" shape-rendering="geometricPrecision"/>
<text x="1900.80" y="563.00" fill="#474747" font-size="13" textLength="32.7" lengthAdjust="spacingAndGlyphs" >Police</text>
<path d="M1968.2 557 L1970.7 560 L1973.2 557 Z" stroke="#333" stroke-width="0.6" fill="#333" shape-rendering="geometricPrecision" />
<rect x="1987.9" y="545.1" width="59.09999999999991" height="25.899999999999977" rx="3" fill="url(#grp)" stroke="#a6a6a6" stroke-width="1" shape-rendering="geometricPrecision"/>
<text x="1998.00" y="563.00" fill="#474747" font-size="13" textLength="27.2" lengthAdjust="spacingAndGlyphs" >Taille</text>
<path d="M2035.2 557 L2037.7 560 L2040.2 557 Z" stroke="#333" stroke-width="0.6" fill="#333" shape-rendering="geometricPrecision" />
<rect x="2055.0" y="545.1" width="69.69999999999982" height="25.899999999999977" rx="3" fill="url(#grp)" stroke="#a6a6a6" stroke-width="1" shape-rendering="geometricPrecision"/>
<rect x="2132.7" y="545.1" width="56.30000000000018" height="25.899999999999977" rx="3" fill="url(#grp)" stroke="#a6a6a6" stroke-width="1" shape-rendering="geometricPrecision"/>
<rect x="2196.7" y="545.1" width="28.40000000000009" height="25.899999999999977" rx="3" fill="url(#grp)" stroke="#a6a6a6" stroke-width="1" shape-rendering="geometricPrecision"/>
<text x="2064.00" y="561.50" fill="#333" font-size="13" font-weight="bold" textLength="10.5" lengthAdjust="spacingAndGlyphs" >A</text>
<line x1="2063.00" y1="566.50" x2="2076.50" y2="566.50" stroke="#777" stroke-width="1.6" />
<path d="M2080 557 L2082.5 560 L2085 557 Z" stroke="#333" stroke-width="0.6" fill="#333" shape-rendering="geometricPrecision" />
<rect x="2096.40" y="550.00" width="14.00" height="14.00" fill="#333" />
<text x="2098.30" y="561.50" fill="#fff" font-size="11" font-weight="bold" textLength="10.0" lengthAdjust="spacingAndGlyphs" >A</text>
<path d="M2114 557 L2116.5 560 L2119 557 Z" stroke="#333" stroke-width="0.6" fill="#333" shape-rendering="geometricPrecision" />
<path d="M2140 551 L2145 556 M2140 551 V554.5 M2140 551 H2143.5 M2154 551 L2149 556 M2154 551 V554.5 M2154 551 H2150.5 M2140 565 L2145 560 M2140 565 V561.5 M2140 565 H2143.5 M2154 565 L2149 560 M2154 565 V561.5 M2154 565 H2150.5" stroke="#333" stroke-width="2" fill="none" shape-rendering="geometricPrecision" />
<rect x="2168.00" y="551.00" width="9.00" height="14.00" fill="none" stroke="#333" stroke-width="1" stroke-dasharray="1.5 1.5"/>
<rect x="2178.00" y="550.00" width="4.00" height="15.00" fill="#fff" stroke="#333" stroke-width="1.3"/>
<text x="2205.00" y="564.00" fill="#333" font-size="16" font-weight="bold" textLength="11.0" lengthAdjust="spacingAndGlyphs" >?</text>
<text x="1708.30" y="615.50" fill="#333333" font-size="13.5" textLength="157.2" lengthAdjust="spacingAndGlyphs" >new run 46 started 9:18</text>
<text x="1708.30" y="649.30" fill="#333333" font-size="13.5" textLength="137.8" lengthAdjust="spacingAndGlyphs" >beam current: 14enA</text>
<text x="1708.30" y="683.00" fill="#333333" font-size="13.5" textLength="97.8" lengthAdjust="spacingAndGlyphs" >DSSD currents:</text>
<text x="1708.30" y="716.50" fill="#333333" font-size="13.5" textLength="139.8" lengthAdjust="spacingAndGlyphs" >Rings (#0) 10.920 uA</text>
<text x="1708.30" y="750.00" fill="#333333" font-size="13.5" textLength="48.1" lengthAdjust="spacingAndGlyphs" >Sectors</text>
<text x="1708.30" y="784.40" fill="#333333" font-size="13.5" textLength="92.0" lengthAdjust="spacingAndGlyphs" >(#2) 6.225 uA</text>
<text x="1708.30" y="818.00" fill="#333333" font-size="13.5" textLength="172.4" lengthAdjust="spacingAndGlyphs" >(#3) 4.725 uA - no change</text>
<text x="1708.30" y="852.00" fill="#333333" font-size="13.5" textLength="113.7" lengthAdjust="spacingAndGlyphs" >line 1331 present</text>
<text x="1708.30" y="885.30" fill="#333333" font-size="13.5" textLength="55.5" lengthAdjust="spacingAndGlyphs" >DSSD ok</text>
<rect x="1682.00" y="1015.50" width="1918.00" height="40.50" fill="#f7f7f7" />
<line x1="1682.00" y1="1015.30" x2="3600.00" y2="1015.30" stroke="#cfcfd8" stroke-width="1.2" />
<rect x="1688.9" y="1024.8" width="262" height="22.5" rx="4" fill="#ffffff" stroke="#cfcfd8" stroke-width="1" shape-rendering="geometricPrecision"/>
<text x="1697.40" y="1041.40" fill="#6d6d73" font-size="14" textLength="160.5" lengthAdjust="spacingAndGlyphs" >Rechercher dans la page</text>
<path d="M1969 1040 L1974.5 1034.5 L1980 1040" stroke="#9a9aa0" stroke-width="1.3" fill="none" shape-rendering="geometricPrecision"/>
<path d="M1999.5 1034.5 L2005 1040 L2010.5 1034.5" stroke="#9a9aa0" stroke-width="1.3" fill="none" shape-rendering="geometricPrecision"/>
<rect x="2036.5" y="1028.5" width="16" height="16" rx="2" fill="#f1f1f1" stroke="#b4b4b4" stroke-width="1" shape-rendering="geometricPrecision"/>
<text x="2058.30" y="1041.50" fill="#15141a" font-size="14" textLength="92.0" lengthAdjust="spacingAndGlyphs" >Tout surligner</text>
<rect x="2166.9" y="1028.5" width="16" height="16" rx="2" fill="#e95420" shape-rendering="geometricPrecision"/>
<path d="M2170.4 1036.5 L2173.9 1040 L2179.9 1032.5" stroke="#fff" stroke-width="1.8" fill="none" shape-rendering="geometricPrecision"/>
<text x="2188.80" y="1041.50" fill="#15141a" font-size="14" textLength="121.0" lengthAdjust="spacingAndGlyphs" >Respecter la casse</text>
<rect x="2326.5" y="1028.5" width="16" height="16" rx="2" fill="#f1f1f1" stroke="#b4b4b4" stroke-width="1" shape-rendering="geometricPrecision"/>
<text x="2349.00" y="1041.50" fill="#15141a" font-size="14" textLength="240.4" lengthAdjust="spacingAndGlyphs" >Respecter les accents et diacritiques</text>
<rect x="2606.5" y="1028.5" width="16" height="16" rx="2" fill="#f1f1f1" stroke="#b4b4b4" stroke-width="1" shape-rendering="geometricPrecision"/>
<text x="2626.70" y="1041.50" fill="#15141a" font-size="14" textLength="85.0" lengthAdjust="spacingAndGlyphs" >Mots entiers</text>
<line x1="2058.50" y1="1044.50" x2="2065.50" y2="1044.50" stroke="#15141a" stroke-width="1" />
<line x1="2189.00" y1="1044.50" x2="2197.50" y2="1044.50" stroke="#15141a" stroke-width="1" />
<line x1="2366.50" y1="1044.50" x2="2374.50" y2="1044.50" stroke="#15141a" stroke-width="1" />
<line x1="2627.00" y1="1044.50" x2="2637.00" y2="1044.50" stroke="#15141a" stroke-width="1" />
<path d="M3574 1030 L3586 1042 M3586 1030 L3574 1042" stroke="#2a2a2a" stroke-width="1.3" shape-rendering="geometricPrecision"/>
<rect x="1680.00" y="1056.00" width="1920.00" height="24.00" fill="#f7f7f7" />
<rect x="1680.00" y="1056.00" width="37.00" height="24.00" fill="#efefef" />
<rect x="1684" y="1059.5" width="22" height="17" rx="1.5" fill="#8e3aa8" shape-rendering="geometricPrecision"/>
<rect x="1684.50" y="1060.00" width="21.00" height="2.50" fill="#e8e0c8" />
<rect x="1686.00" y="1064.00" width="3.00" height="3.00" fill="#d8c0e8" />
<rect x="1686.00" y="1069.00" width="3.00" height="3.00" fill="#d8c0e8" />
<use href="#ffx" x="1728" y="1060" width="16" height="16"/>
<text x="1752.30" y="1072.50" fill="#2a2a2a" font-size="14" textLength="149.5" lengthAdjust="spacingAndGlyphs" >ELOG N-SI-137 — Mo…</text>
<rect x="1923.50" y="1062.00" width="13.00" height="11.50" fill="#1f1b2e" />
<line x1="1925.50" y1="1065.00" x2="1928.00" y2="1065.00" stroke="#fff" stroke-width="0.8" />
<text x="1946.60" y="1072.30" fill="#2a2a2a" font-size="14" textLength="150.8" lengthAdjust="spacingAndGlyphs" >faster@ls-alto-nubal…</text>
<circle cx="2123.5" cy="1066" r="5" fill="#f3d9a0" shape-rendering="geometricPrecision"/><path d="M2116 1074 L2131 1068 L2124 1075 Z" fill="#e06a6a" shape-rendering="geometricPrecision"/>
<text x="2139.60" y="1072.30" fill="#2a2a2a" font-size="14" textLength="151.6" lengthAdjust="spacingAndGlyphs" >[ROOT Histogram Bu…</text>
<rect x="2302.00" y="1056.00" width="194.60" height="24.00" fill="#d6d6d6" />
<rect x="2311.00" y="1061.00" width="15.00" height="15.00" fill="#ffffff" />
<rect x="2313.00" y="1062.00" width="3.00" height="13.00" fill="#e04040" />
<rect x="2316.00" y="1064.00" width="3.00" height="11.00" fill="#f0a020" />
<rect x="2319.00" y="1067.00" width="3.00" height="8.00" fill="#40b040" />
<rect x="2322.00" y="1069.00" width="3.00" height="6.00" fill="#3a7ad0" />
<text x="2334.20" y="1072.30" fill="#2a2a2a" font-size="14" textLength="151.5" lengthAdjust="spacingAndGlyphs" >ROOT Histogram Vie…</text>
<rect x="3277.00" y="1056.00" width="36.50" height="24.00" fill="#f08a68" stroke="#333" stroke-width="1"/>
<rect x="3287.50" y="1059.00" width="16.00" height="16.00" fill="#ffffff" />
<rect x="3289.00" y="1060.00" width="3.00" height="14.00" fill="#e04040" />
<rect x="3292.00" y="1062.00" width="3.00" height="12.00" fill="#f0a020" />
<rect x="3295.00" y="1065.00" width="3.00" height="9.00" fill="#40b040" />
<rect x="3298.00" y="1067.00" width="3.00" height="7.00" fill="#3a7ad0" />
<rect x="3314.00" y="1056.00" width="43.00" height="24.00" fill="#e95420" stroke="#333" stroke-width="1"/>
<use href="#ffx" x="3327" y="1059.5" width="17" height="17"/>
<rect x="3358.00" y="1056.00" width="242.00" height="24.00" fill="#b0b0b0" />
<rect x="3395.50" y="1057.50" width="41.50" height="21.00" fill="none" stroke="#3a3a3a" stroke-width="1.4"/>
<rect x="3439.00" y="1057.50" width="37.00" height="21.00" fill="none" stroke="#3a3a3a" stroke-width="1.4"/>
<rect x="3476.50" y="1057.50" width="42.50" height="21.00" fill="none" stroke="#3a3a3a" stroke-width="1.4"/>
<rect x="3520.00" y="1057.50" width="36.00" height="21.00" fill="none" stroke="#3a3a3a" stroke-width="1.4"/>
<rect x="3558.00" y="1057.50" width="38.00" height="21.00" fill="none" stroke="#3a3a3a" stroke-width="1.4"/>
<rect x="3409.00" y="1062.00" width="12.00" height="11.00" fill="#1f1b2e" />
<rect x="3491.00" y="1062.00" width="12.00" height="11.00" fill="#1f1b2e" />
<rect x="3532.00" y="1062.00" width="12.00" height="11.00" fill="#1f1b2e" />
<circle cx="3457" cy="1067" r="6.5" fill="#3cb878" shape-rendering="geometricPrecision"/>
<rect x="3570.00" y="1059.00" width="14.00" height="16.00" fill="#f8f8f8" stroke="#666" stroke-width="0.8"/>
<path d="M3573 1073 L3586 1060" stroke="#e08020" stroke-width="2" shape-rendering="geometricPrecision"/>
</svg></body></html>
